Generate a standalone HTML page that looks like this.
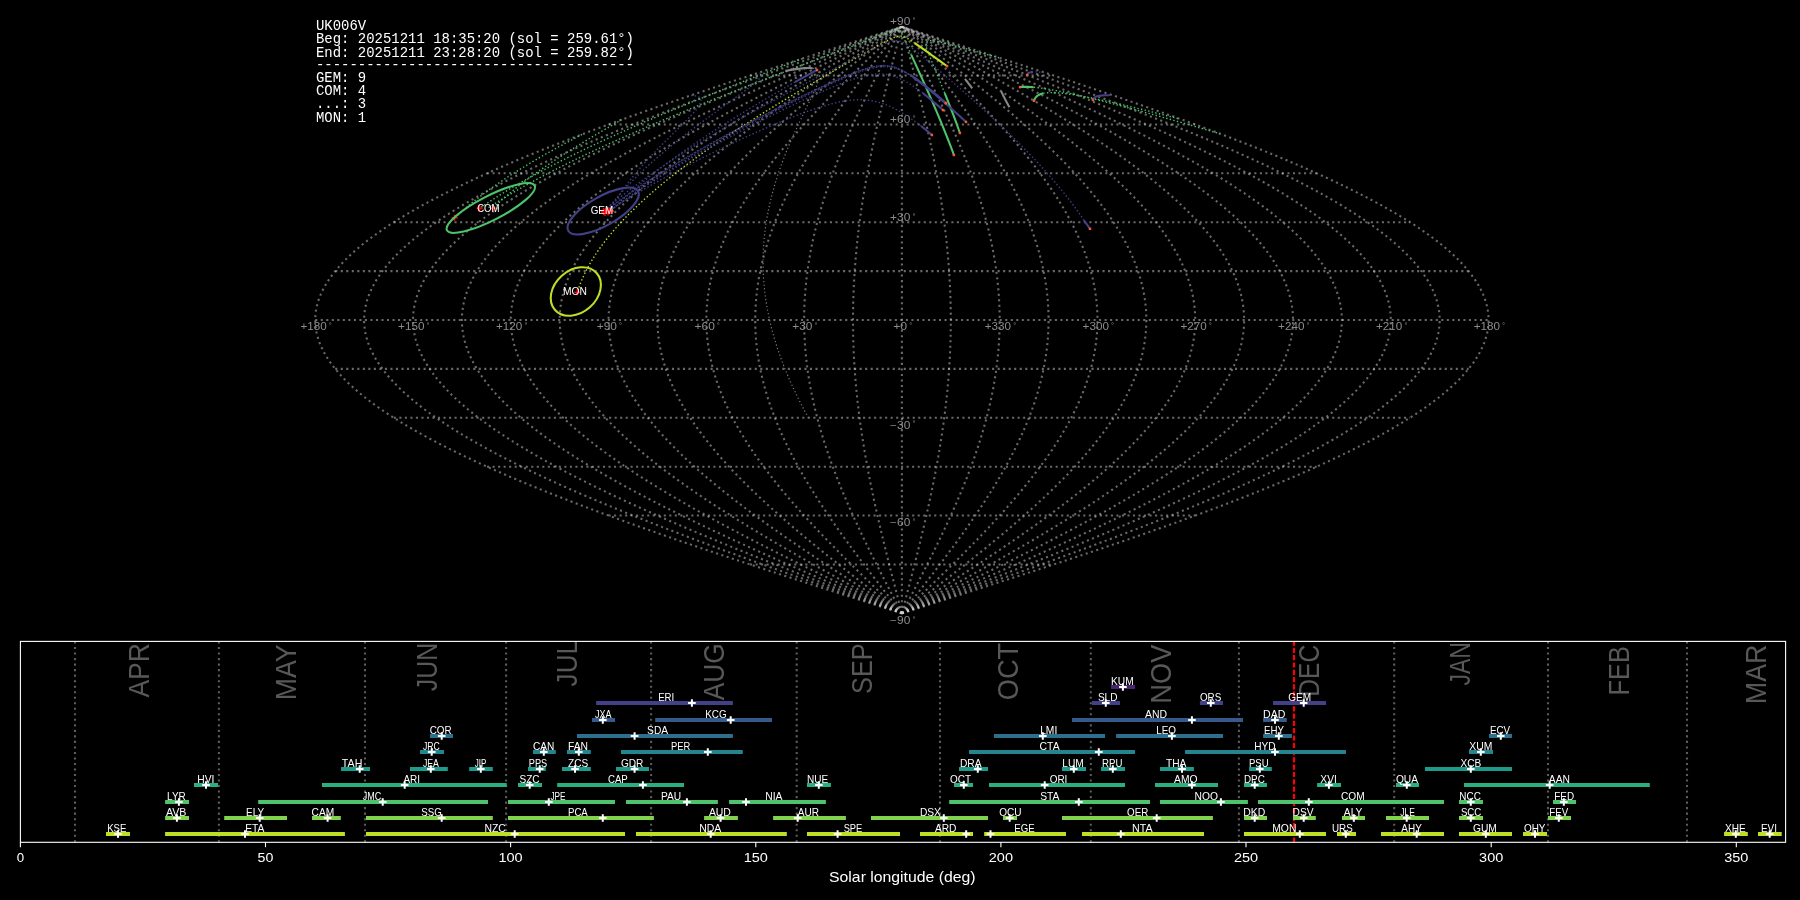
<!DOCTYPE html><html><head><meta charset="utf-8"><style>html,body{margin:0;padding:0;background:#000;}svg{display:block;will-change:transform;}</style></head><body>
<svg width="1800" height="900" viewBox="0 0 1800 900">
<g fill="none" stroke="#d2d2d2" stroke-opacity="0.5" stroke-width="2.08" stroke-dasharray="2.08 3.44">
<path d="M901.90,613.34 L912.14,610.08 L922.37,606.82 L932.60,603.56 L942.82,600.30 L953.03,597.04 L963.22,593.78 L973.40,590.52 L983.55,587.26 L993.68,584.00 L1003.77,580.74 L1013.84,577.48 L1023.88,574.23 L1033.87,570.97 L1043.83,567.71 L1053.74,564.45 L1063.61,561.19 L1073.43,557.93 L1083.19,554.67 L1092.90,551.41 L1102.55,548.15 L1112.15,544.89 L1121.67,541.63 L1131.13,538.37 L1140.52,535.11 L1149.84,531.85 L1159.08,528.60 L1168.24,525.34 L1177.33,522.08 L1186.33,518.82 L1195.24,515.56 L1204.06,512.30 L1212.79,509.04 L1221.43,505.78 L1229.96,502.52 L1238.40,499.26 L1246.74,496.00 L1254.97,492.74 L1263.09,489.48 L1271.11,486.22 L1279.01,482.97 L1286.79,479.71 L1294.46,476.45 L1302.01,473.19 L1309.44,469.93 L1316.74,466.67 L1323.92,463.41 L1330.97,460.15 L1337.88,456.89 L1344.67,453.63 L1351.32,450.37 L1357.83,447.11 L1364.21,443.85 L1370.44,440.59 L1376.53,437.33 L1382.48,434.08 L1388.27,430.82 L1393.93,427.56 L1399.43,424.30 L1404.78,421.04 L1409.97,417.78 L1415.02,414.52 L1419.90,411.26 L1424.63,408.00 L1429.20,404.74 L1433.61,401.48 L1437.85,398.22 L1441.94,394.96 L1445.85,391.70 L1449.61,388.45 L1453.19,385.19 L1456.61,381.93 L1459.86,378.67 L1462.94,375.41 L1465.85,372.15 L1468.58,368.89 L1471.15,365.63 L1473.54,362.37 L1475.75,359.11 L1477.80,355.85 L1479.66,352.59 L1481.35,349.33 L1482.86,346.07 L1484.20,342.82 L1485.36,339.56 L1486.34,336.30 L1487.14,333.04 L1487.77,329.78 L1488.22,326.52 L1488.48,323.26 L1488.57,320.00 L1488.48,316.74 L1488.22,313.48 L1487.77,310.22 L1487.14,306.96 L1486.34,303.70 L1485.36,300.44 L1484.20,297.18 L1482.86,293.93 L1481.35,290.67 L1479.66,287.41 L1477.80,284.15 L1475.75,280.89 L1473.54,277.63 L1471.15,274.37 L1468.58,271.11 L1465.85,267.85 L1462.94,264.59 L1459.86,261.33 L1456.61,258.07 L1453.19,254.81 L1449.61,251.55 L1445.85,248.30 L1441.94,245.04 L1437.85,241.78 L1433.61,238.52 L1429.20,235.26 L1424.63,232.00 L1419.90,228.74 L1415.02,225.48 L1409.97,222.22 L1404.78,218.96 L1399.43,215.70 L1393.93,212.44 L1388.27,209.18 L1382.48,205.92 L1376.53,202.67 L1370.44,199.41 L1364.21,196.15 L1357.83,192.89 L1351.32,189.63 L1344.67,186.37 L1337.88,183.11 L1330.97,179.85 L1323.92,176.59 L1316.74,173.33 L1309.44,170.07 L1302.01,166.81 L1294.46,163.55 L1286.79,160.29 L1279.01,157.03 L1271.11,153.78 L1263.09,150.52 L1254.97,147.26 L1246.74,144.00 L1238.40,140.74 L1229.96,137.48 L1221.43,134.22 L1212.79,130.96 L1204.06,127.70 L1195.24,124.44 L1186.33,121.18 L1177.33,117.92 L1168.24,114.66 L1159.08,111.40 L1149.84,108.15 L1140.52,104.89 L1131.13,101.63 L1121.67,98.37 L1112.15,95.11 L1102.55,91.85 L1092.90,88.59 L1083.19,85.33 L1073.43,82.07 L1063.61,78.81 L1053.74,75.55 L1043.83,72.29 L1033.87,69.03 L1023.88,65.77 L1013.84,62.52 L1003.77,59.26 L993.68,56.00 L983.55,52.74 L973.40,49.48 L963.22,46.22 L953.03,42.96 L942.82,39.70 L932.60,36.44 L922.37,33.18 L912.14,29.92 L901.90,26.66"/>
<path d="M901.90,613.34 L911.29,610.08 L920.67,606.82 L930.05,603.56 L939.41,600.30 L948.77,597.04 L958.11,593.78 L967.44,590.52 L976.75,587.26 L986.03,584.00 L995.29,580.74 L1004.51,577.48 L1013.71,574.23 L1022.88,570.97 L1032.00,567.71 L1041.09,564.45 L1050.13,561.19 L1059.13,557.93 L1068.08,554.67 L1076.99,551.41 L1085.83,548.15 L1094.62,544.89 L1103.36,541.63 L1112.03,538.37 L1120.64,535.11 L1129.18,531.85 L1137.65,528.60 L1146.05,525.34 L1154.37,522.08 L1162.62,518.82 L1170.79,515.56 L1178.88,512.30 L1186.88,509.04 L1194.80,505.78 L1202.63,502.52 L1210.36,499.26 L1218.00,496.00 L1225.55,492.74 L1232.99,489.48 L1240.34,486.22 L1247.58,482.97 L1254.72,479.71 L1261.75,476.45 L1268.67,473.19 L1275.48,469.93 L1282.17,466.67 L1288.75,463.41 L1295.21,460.15 L1301.55,456.89 L1307.77,453.63 L1313.87,450.37 L1319.84,447.11 L1325.68,443.85 L1331.39,440.59 L1336.98,437.33 L1342.43,434.08 L1347.74,430.82 L1352.92,427.56 L1357.97,424.30 L1362.87,421.04 L1367.64,417.78 L1372.26,414.52 L1376.74,411.26 L1381.07,408.00 L1385.26,404.74 L1389.30,401.48 L1393.19,398.22 L1396.93,394.96 L1400.53,391.70 L1403.97,388.45 L1407.25,385.19 L1410.39,381.93 L1413.36,378.67 L1416.19,375.41 L1418.85,372.15 L1421.36,368.89 L1423.71,365.63 L1425.90,362.37 L1427.93,359.11 L1429.80,355.85 L1431.51,352.59 L1433.06,349.33 L1434.45,346.07 L1435.68,342.82 L1436.74,339.56 L1437.64,336.30 L1438.37,333.04 L1438.95,329.78 L1439.36,326.52 L1439.60,323.26 L1439.68,320.00 L1439.60,316.74 L1439.36,313.48 L1438.95,310.22 L1438.37,306.96 L1437.64,303.70 L1436.74,300.44 L1435.68,297.18 L1434.45,293.93 L1433.06,290.67 L1431.51,287.41 L1429.80,284.15 L1427.93,280.89 L1425.90,277.63 L1423.71,274.37 L1421.36,271.11 L1418.85,267.85 L1416.19,264.59 L1413.36,261.33 L1410.39,258.07 L1407.25,254.81 L1403.97,251.55 L1400.53,248.30 L1396.93,245.04 L1393.19,241.78 L1389.30,238.52 L1385.26,235.26 L1381.07,232.00 L1376.74,228.74 L1372.26,225.48 L1367.64,222.22 L1362.87,218.96 L1357.97,215.70 L1352.92,212.44 L1347.74,209.18 L1342.43,205.92 L1336.98,202.67 L1331.39,199.41 L1325.68,196.15 L1319.84,192.89 L1313.87,189.63 L1307.77,186.37 L1301.55,183.11 L1295.21,179.85 L1288.75,176.59 L1282.17,173.33 L1275.48,170.07 L1268.67,166.81 L1261.75,163.55 L1254.72,160.29 L1247.58,157.03 L1240.34,153.78 L1232.99,150.52 L1225.55,147.26 L1218.00,144.00 L1210.36,140.74 L1202.63,137.48 L1194.80,134.22 L1186.88,130.96 L1178.88,127.70 L1170.79,124.44 L1162.62,121.18 L1154.37,117.92 L1146.05,114.66 L1137.65,111.40 L1129.18,108.15 L1120.64,104.89 L1112.03,101.63 L1103.36,98.37 L1094.62,95.11 L1085.83,91.85 L1076.99,88.59 L1068.08,85.33 L1059.13,82.07 L1050.13,78.81 L1041.09,75.55 L1032.00,72.29 L1022.88,69.03 L1013.71,65.77 L1004.51,62.52 L995.29,59.26 L986.03,56.00 L976.75,52.74 L967.44,49.48 L958.11,46.22 L948.77,42.96 L939.41,39.70 L930.05,36.44 L920.67,33.18 L911.29,29.92 L901.90,26.66"/>
<path d="M901.90,613.34 L910.43,610.08 L918.96,606.82 L927.49,603.56 L936.00,600.30 L944.51,597.04 L953.00,593.78 L961.48,590.52 L969.94,587.26 L978.38,584.00 L986.80,580.74 L995.19,577.48 L1003.55,574.23 L1011.88,570.97 L1020.17,567.71 L1028.44,564.45 L1036.66,561.19 L1044.84,557.93 L1052.98,554.67 L1061.07,551.41 L1069.11,548.15 L1077.10,544.89 L1085.04,541.63 L1092.93,538.37 L1100.75,535.11 L1108.52,531.85 L1116.22,528.60 L1123.85,525.34 L1131.42,522.08 L1138.92,518.82 L1146.35,515.56 L1153.70,512.30 L1160.97,509.04 L1168.17,505.78 L1175.29,502.52 L1182.32,499.26 L1189.27,496.00 L1196.12,492.74 L1202.89,489.48 L1209.57,486.22 L1216.16,482.97 L1222.64,479.71 L1229.03,476.45 L1235.33,473.19 L1241.52,469.93 L1247.60,466.67 L1253.58,463.41 L1259.46,460.15 L1265.22,456.89 L1270.87,453.63 L1276.42,450.37 L1281.84,447.11 L1287.15,443.85 L1292.35,440.59 L1297.42,437.33 L1302.38,434.08 L1307.21,430.82 L1311.92,427.56 L1316.51,424.30 L1320.96,421.04 L1325.30,417.78 L1329.50,414.52 L1333.57,411.26 L1337.51,408.00 L1341.32,404.74 L1344.99,401.48 L1348.53,398.22 L1351.93,394.96 L1355.20,391.70 L1358.32,388.45 L1361.31,385.19 L1364.16,381.93 L1366.87,378.67 L1369.43,375.41 L1371.86,372.15 L1374.14,368.89 L1376.27,365.63 L1378.26,362.37 L1380.11,359.11 L1381.81,355.85 L1383.37,352.59 L1384.78,349.33 L1386.04,346.07 L1387.15,342.82 L1388.12,339.56 L1388.93,336.30 L1389.60,333.04 L1390.12,329.78 L1390.50,326.52 L1390.72,323.26 L1390.80,320.00 L1390.72,316.74 L1390.50,313.48 L1390.12,310.22 L1389.60,306.96 L1388.93,303.70 L1388.12,300.44 L1387.15,297.18 L1386.04,293.93 L1384.78,290.67 L1383.37,287.41 L1381.81,284.15 L1380.11,280.89 L1378.26,277.63 L1376.27,274.37 L1374.14,271.11 L1371.86,267.85 L1369.43,264.59 L1366.87,261.33 L1364.16,258.07 L1361.31,254.81 L1358.32,251.55 L1355.20,248.30 L1351.93,245.04 L1348.53,241.78 L1344.99,238.52 L1341.32,235.26 L1337.51,232.00 L1333.57,228.74 L1329.50,225.48 L1325.30,222.22 L1320.96,218.96 L1316.51,215.70 L1311.92,212.44 L1307.21,209.18 L1302.38,205.92 L1297.42,202.67 L1292.35,199.41 L1287.15,196.15 L1281.84,192.89 L1276.42,189.63 L1270.87,186.37 L1265.22,183.11 L1259.46,179.85 L1253.58,176.59 L1247.60,173.33 L1241.52,170.07 L1235.33,166.81 L1229.03,163.55 L1222.64,160.29 L1216.16,157.03 L1209.57,153.78 L1202.89,150.52 L1196.12,147.26 L1189.27,144.00 L1182.32,140.74 L1175.29,137.48 L1168.17,134.22 L1160.97,130.96 L1153.70,127.70 L1146.35,124.44 L1138.92,121.18 L1131.42,117.92 L1123.85,114.66 L1116.22,111.40 L1108.52,108.15 L1100.75,104.89 L1092.93,101.63 L1085.04,98.37 L1077.10,95.11 L1069.11,91.85 L1061.07,88.59 L1052.98,85.33 L1044.84,82.07 L1036.66,78.81 L1028.44,75.55 L1020.17,72.29 L1011.88,69.03 L1003.55,65.77 L995.19,62.52 L986.80,59.26 L978.38,56.00 L969.94,52.74 L961.48,49.48 L953.00,46.22 L944.51,42.96 L936.00,39.70 L927.49,36.44 L918.96,33.18 L910.43,29.92 L901.90,26.66"/>
<path d="M901.90,613.34 L909.58,610.08 L917.26,606.82 L924.93,603.56 L932.59,600.30 L940.25,597.04 L947.89,593.78 L955.52,590.52 L963.14,587.26 L970.73,584.00 L978.31,580.74 L985.86,577.48 L993.38,574.23 L1000.88,570.97 L1008.35,567.71 L1015.78,564.45 L1023.18,561.19 L1030.55,557.93 L1037.87,554.67 L1045.15,551.41 L1052.39,548.15 L1059.58,544.89 L1066.73,541.63 L1073.82,538.37 L1080.87,535.11 L1087.85,531.85 L1094.79,528.60 L1101.66,525.34 L1108.47,522.08 L1115.22,518.82 L1121.90,515.56 L1128.52,512.30 L1135.07,509.04 L1141.54,505.78 L1147.95,502.52 L1154.28,499.26 L1160.53,496.00 L1166.70,492.74 L1172.79,489.48 L1178.80,486.22 L1184.73,482.97 L1190.57,479.71 L1196.32,476.45 L1201.98,473.19 L1207.55,469.93 L1213.03,466.67 L1218.41,463.41 L1223.70,460.15 L1228.89,456.89 L1233.98,453.63 L1238.96,450.37 L1243.85,447.11 L1248.63,443.85 L1253.30,440.59 L1257.87,437.33 L1262.33,434.08 L1266.68,430.82 L1270.92,427.56 L1275.05,424.30 L1279.06,421.04 L1282.96,417.78 L1286.74,414.52 L1290.40,411.26 L1293.95,408.00 L1297.37,404.74 L1300.68,401.48 L1303.87,398.22 L1306.93,394.96 L1309.87,391.70 L1312.68,388.45 L1315.37,385.19 L1317.93,381.93 L1320.37,378.67 L1322.68,375.41 L1324.86,372.15 L1326.91,368.89 L1328.84,365.63 L1330.63,362.37 L1332.29,359.11 L1333.82,355.85 L1335.22,352.59 L1336.49,349.33 L1337.62,346.07 L1338.63,342.82 L1339.50,339.56 L1340.23,336.30 L1340.83,333.04 L1341.30,329.78 L1341.64,326.52 L1341.84,323.26 L1341.91,320.00 L1341.84,316.74 L1341.64,313.48 L1341.30,310.22 L1340.83,306.96 L1340.23,303.70 L1339.50,300.44 L1338.63,297.18 L1337.62,293.93 L1336.49,290.67 L1335.22,287.41 L1333.82,284.15 L1332.29,280.89 L1330.63,277.63 L1328.84,274.37 L1326.91,271.11 L1324.86,267.85 L1322.68,264.59 L1320.37,261.33 L1317.93,258.07 L1315.37,254.81 L1312.68,251.55 L1309.87,248.30 L1306.93,245.04 L1303.87,241.78 L1300.68,238.52 L1297.37,235.26 L1293.95,232.00 L1290.40,228.74 L1286.74,225.48 L1282.96,222.22 L1279.06,218.96 L1275.05,215.70 L1270.92,212.44 L1266.68,209.18 L1262.33,205.92 L1257.87,202.67 L1253.30,199.41 L1248.63,196.15 L1243.85,192.89 L1238.96,189.63 L1233.98,186.37 L1228.89,183.11 L1223.70,179.85 L1218.41,176.59 L1213.03,173.33 L1207.55,170.07 L1201.98,166.81 L1196.32,163.55 L1190.57,160.29 L1184.73,157.03 L1178.80,153.78 L1172.79,150.52 L1166.70,147.26 L1160.53,144.00 L1154.28,140.74 L1147.95,137.48 L1141.54,134.22 L1135.07,130.96 L1128.52,127.70 L1121.90,124.44 L1115.22,121.18 L1108.47,117.92 L1101.66,114.66 L1094.79,111.40 L1087.85,108.15 L1080.87,104.89 L1073.82,101.63 L1066.73,98.37 L1059.58,95.11 L1052.39,91.85 L1045.15,88.59 L1037.87,85.33 L1030.55,82.07 L1023.18,78.81 L1015.78,75.55 L1008.35,72.29 L1000.88,69.03 L993.38,65.77 L985.86,62.52 L978.31,59.26 L970.73,56.00 L963.14,52.74 L955.52,49.48 L947.89,46.22 L940.25,42.96 L932.59,39.70 L924.93,36.44 L917.26,33.18 L909.58,29.92 L901.90,26.66"/>
<path d="M901.90,613.34 L908.73,610.08 L915.55,606.82 L922.37,603.56 L929.18,600.30 L935.99,597.04 L942.78,593.78 L949.57,590.52 L956.33,587.26 L963.08,584.00 L969.82,580.74 L976.53,577.48 L983.22,574.23 L989.88,570.97 L996.52,567.71 L1003.13,564.45 L1009.71,561.19 L1016.25,557.93 L1022.76,554.67 L1029.23,551.41 L1035.67,548.15 L1042.06,544.89 L1048.41,541.63 L1054.72,538.37 L1060.98,535.11 L1067.19,531.85 L1073.35,528.60 L1079.46,525.34 L1085.52,522.08 L1091.52,518.82 L1097.46,515.56 L1103.34,512.30 L1109.16,509.04 L1114.92,505.78 L1120.61,502.52 L1126.23,499.26 L1131.79,496.00 L1137.28,492.74 L1142.70,489.48 L1148.04,486.22 L1153.30,482.97 L1158.50,479.71 L1163.61,476.45 L1168.64,473.19 L1173.59,469.93 L1178.46,466.67 L1183.25,463.41 L1187.94,460.15 L1192.56,456.89 L1197.08,453.63 L1201.51,450.37 L1205.85,447.11 L1210.10,443.85 L1214.26,440.59 L1218.32,437.33 L1222.28,434.08 L1226.15,430.82 L1229.92,427.56 L1233.59,424.30 L1237.15,421.04 L1240.62,417.78 L1243.98,414.52 L1247.23,411.26 L1250.39,408.00 L1253.43,404.74 L1256.37,401.48 L1259.20,398.22 L1261.92,394.96 L1264.54,391.70 L1267.04,388.45 L1269.43,385.19 L1271.71,381.93 L1273.87,378.67 L1275.93,375.41 L1277.86,372.15 L1279.69,368.89 L1281.40,365.63 L1282.99,362.37 L1284.47,359.11 L1285.83,355.85 L1287.07,352.59 L1288.20,349.33 L1289.21,346.07 L1290.10,342.82 L1290.87,339.56 L1291.53,336.30 L1292.06,333.04 L1292.48,329.78 L1292.78,326.52 L1292.96,323.26 L1293.02,320.00 L1292.96,316.74 L1292.78,313.48 L1292.48,310.22 L1292.06,306.96 L1291.53,303.70 L1290.87,300.44 L1290.10,297.18 L1289.21,293.93 L1288.20,290.67 L1287.07,287.41 L1285.83,284.15 L1284.47,280.89 L1282.99,277.63 L1281.40,274.37 L1279.69,271.11 L1277.86,267.85 L1275.93,264.59 L1273.87,261.33 L1271.71,258.07 L1269.43,254.81 L1267.04,251.55 L1264.54,248.30 L1261.92,245.04 L1259.20,241.78 L1256.37,238.52 L1253.43,235.26 L1250.39,232.00 L1247.23,228.74 L1243.98,225.48 L1240.62,222.22 L1237.15,218.96 L1233.59,215.70 L1229.92,212.44 L1226.15,209.18 L1222.28,205.92 L1218.32,202.67 L1214.26,199.41 L1210.10,196.15 L1205.85,192.89 L1201.51,189.63 L1197.08,186.37 L1192.56,183.11 L1187.94,179.85 L1183.25,176.59 L1178.46,173.33 L1173.59,170.07 L1168.64,166.81 L1163.61,163.55 L1158.50,160.29 L1153.30,157.03 L1148.04,153.78 L1142.70,150.52 L1137.28,147.26 L1131.79,144.00 L1126.23,140.74 L1120.61,137.48 L1114.92,134.22 L1109.16,130.96 L1103.34,127.70 L1097.46,124.44 L1091.52,121.18 L1085.52,117.92 L1079.46,114.66 L1073.35,111.40 L1067.19,108.15 L1060.98,104.89 L1054.72,101.63 L1048.41,98.37 L1042.06,95.11 L1035.67,91.85 L1029.23,88.59 L1022.76,85.33 L1016.25,82.07 L1009.71,78.81 L1003.13,75.55 L996.52,72.29 L989.88,69.03 L983.22,65.77 L976.53,62.52 L969.82,59.26 L963.08,56.00 L956.33,52.74 L949.57,49.48 L942.78,46.22 L935.99,42.96 L929.18,39.70 L922.37,36.44 L915.55,33.18 L908.73,29.92 L901.90,26.66"/>
<path d="M901.90,613.34 L907.87,610.08 L913.84,606.82 L919.81,603.56 L925.77,600.30 L931.73,597.04 L937.67,593.78 L943.61,590.52 L949.53,587.26 L955.44,584.00 L961.33,580.74 L967.20,577.48 L973.05,574.23 L978.88,570.97 L984.69,567.71 L990.47,564.45 L996.23,561.19 L1001.96,557.93 L1007.65,554.67 L1013.32,551.41 L1018.95,548.15 L1024.54,544.89 L1030.10,541.63 L1035.62,538.37 L1041.10,535.11 L1046.53,531.85 L1051.92,528.60 L1057.27,525.34 L1062.57,522.08 L1067.81,518.82 L1073.01,515.56 L1078.16,512.30 L1083.25,509.04 L1088.29,505.78 L1093.27,502.52 L1098.19,499.26 L1103.06,496.00 L1107.86,492.74 L1112.60,489.48 L1117.27,486.22 L1121.88,482.97 L1126.42,479.71 L1130.89,476.45 L1135.30,473.19 L1139.63,469.93 L1143.89,466.67 L1148.08,463.41 L1152.19,460.15 L1156.22,456.89 L1160.18,453.63 L1164.06,450.37 L1167.86,447.11 L1171.58,443.85 L1175.21,440.59 L1178.77,437.33 L1182.24,434.08 L1185.62,430.82 L1188.92,427.56 L1192.12,424.30 L1195.25,421.04 L1198.28,417.78 L1201.22,414.52 L1204.07,411.26 L1206.83,408.00 L1209.49,404.74 L1212.06,401.48 L1214.54,398.22 L1216.92,394.96 L1219.21,391.70 L1221.40,388.45 L1223.49,385.19 L1225.48,381.93 L1227.38,378.67 L1229.17,375.41 L1230.87,372.15 L1232.47,368.89 L1233.96,365.63 L1235.36,362.37 L1236.65,359.11 L1237.84,355.85 L1238.93,352.59 L1239.91,349.33 L1240.80,346.07 L1241.58,342.82 L1242.25,339.56 L1242.82,336.30 L1243.29,333.04 L1243.66,329.78 L1243.92,326.52 L1244.07,323.26 L1244.13,320.00 L1244.07,316.74 L1243.92,313.48 L1243.66,310.22 L1243.29,306.96 L1242.82,303.70 L1242.25,300.44 L1241.58,297.18 L1240.80,293.93 L1239.91,290.67 L1238.93,287.41 L1237.84,284.15 L1236.65,280.89 L1235.36,277.63 L1233.96,274.37 L1232.47,271.11 L1230.87,267.85 L1229.17,264.59 L1227.38,261.33 L1225.48,258.07 L1223.49,254.81 L1221.40,251.55 L1219.21,248.30 L1216.92,245.04 L1214.54,241.78 L1212.06,238.52 L1209.49,235.26 L1206.83,232.00 L1204.07,228.74 L1201.22,225.48 L1198.28,222.22 L1195.25,218.96 L1192.12,215.70 L1188.92,212.44 L1185.62,209.18 L1182.24,205.92 L1178.77,202.67 L1175.21,199.41 L1171.58,196.15 L1167.86,192.89 L1164.06,189.63 L1160.18,186.37 L1156.22,183.11 L1152.19,179.85 L1148.08,176.59 L1143.89,173.33 L1139.63,170.07 L1135.30,166.81 L1130.89,163.55 L1126.42,160.29 L1121.88,157.03 L1117.27,153.78 L1112.60,150.52 L1107.86,147.26 L1103.06,144.00 L1098.19,140.74 L1093.27,137.48 L1088.29,134.22 L1083.25,130.96 L1078.16,127.70 L1073.01,124.44 L1067.81,121.18 L1062.57,117.92 L1057.27,114.66 L1051.92,111.40 L1046.53,108.15 L1041.10,104.89 L1035.62,101.63 L1030.10,98.37 L1024.54,95.11 L1018.95,91.85 L1013.32,88.59 L1007.65,85.33 L1001.96,82.07 L996.23,78.81 L990.47,75.55 L984.69,72.29 L978.88,69.03 L973.05,65.77 L967.20,62.52 L961.33,59.26 L955.44,56.00 L949.53,52.74 L943.61,49.48 L937.67,46.22 L931.73,42.96 L925.77,39.70 L919.81,36.44 L913.84,33.18 L907.87,29.92 L901.90,26.66"/>
<path d="M901.90,613.34 L907.02,610.08 L912.14,606.82 L917.25,603.56 L922.36,600.30 L927.47,597.04 L932.56,593.78 L937.65,590.52 L942.72,587.26 L947.79,584.00 L952.84,580.74 L957.87,577.48 L962.89,574.23 L967.89,570.97 L972.86,567.71 L977.82,564.45 L982.75,561.19 L987.66,557.93 L992.55,554.67 L997.40,551.41 L1002.23,548.15 L1007.02,544.89 L1011.79,541.63 L1016.52,538.37 L1021.21,535.11 L1025.87,531.85 L1030.49,528.60 L1035.07,525.34 L1039.61,522.08 L1044.11,518.82 L1048.57,515.56 L1052.98,512.30 L1057.34,509.04 L1061.66,505.78 L1065.93,502.52 L1070.15,499.26 L1074.32,496.00 L1078.43,492.74 L1082.50,489.48 L1086.50,486.22 L1090.45,482.97 L1094.35,479.71 L1098.18,476.45 L1101.96,473.19 L1105.67,469.93 L1109.32,466.67 L1112.91,463.41 L1116.43,460.15 L1119.89,456.89 L1123.28,453.63 L1126.61,450.37 L1129.87,447.11 L1133.05,443.85 L1136.17,440.59 L1139.21,437.33 L1142.19,434.08 L1145.09,430.82 L1147.91,427.56 L1150.66,424.30 L1153.34,421.04 L1155.94,417.78 L1158.46,414.52 L1160.90,411.26 L1163.27,408.00 L1165.55,404.74 L1167.75,401.48 L1169.88,398.22 L1171.92,394.96 L1173.88,391.70 L1175.75,388.45 L1177.55,385.19 L1179.26,381.93 L1180.88,378.67 L1182.42,375.41 L1183.87,372.15 L1185.24,368.89 L1186.52,365.63 L1187.72,362.37 L1188.83,359.11 L1189.85,355.85 L1190.78,352.59 L1191.63,349.33 L1192.38,346.07 L1193.05,342.82 L1193.63,339.56 L1194.12,336.30 L1194.52,333.04 L1194.83,329.78 L1195.06,326.52 L1195.19,323.26 L1195.24,320.00 L1195.19,316.74 L1195.06,313.48 L1194.83,310.22 L1194.52,306.96 L1194.12,303.70 L1193.63,300.44 L1193.05,297.18 L1192.38,293.93 L1191.63,290.67 L1190.78,287.41 L1189.85,284.15 L1188.83,280.89 L1187.72,277.63 L1186.52,274.37 L1185.24,271.11 L1183.87,267.85 L1182.42,264.59 L1180.88,261.33 L1179.26,258.07 L1177.55,254.81 L1175.75,251.55 L1173.88,248.30 L1171.92,245.04 L1169.88,241.78 L1167.75,238.52 L1165.55,235.26 L1163.27,232.00 L1160.90,228.74 L1158.46,225.48 L1155.94,222.22 L1153.34,218.96 L1150.66,215.70 L1147.91,212.44 L1145.09,209.18 L1142.19,205.92 L1139.21,202.67 L1136.17,199.41 L1133.05,196.15 L1129.87,192.89 L1126.61,189.63 L1123.28,186.37 L1119.89,183.11 L1116.43,179.85 L1112.91,176.59 L1109.32,173.33 L1105.67,170.07 L1101.96,166.81 L1098.18,163.55 L1094.35,160.29 L1090.45,157.03 L1086.50,153.78 L1082.50,150.52 L1078.43,147.26 L1074.32,144.00 L1070.15,140.74 L1065.93,137.48 L1061.66,134.22 L1057.34,130.96 L1052.98,127.70 L1048.57,124.44 L1044.11,121.18 L1039.61,117.92 L1035.07,114.66 L1030.49,111.40 L1025.87,108.15 L1021.21,104.89 L1016.52,101.63 L1011.79,98.37 L1007.02,95.11 L1002.23,91.85 L997.40,88.59 L992.55,85.33 L987.66,82.07 L982.75,78.81 L977.82,75.55 L972.86,72.29 L967.89,69.03 L962.89,65.77 L957.87,62.52 L952.84,59.26 L947.79,56.00 L942.72,52.74 L937.65,49.48 L932.56,46.22 L927.47,42.96 L922.36,39.70 L917.25,36.44 L912.14,33.18 L907.02,29.92 L901.90,26.66"/>
<path d="M901.90,613.34 L906.17,610.08 L910.43,606.82 L914.69,603.56 L918.95,600.30 L923.21,597.04 L927.45,593.78 L931.69,590.52 L935.92,587.26 L940.14,584.00 L944.35,580.74 L948.54,577.48 L952.72,574.23 L956.89,570.97 L961.04,567.71 L965.17,564.45 L969.28,561.19 L973.37,557.93 L977.44,554.67 L981.48,551.41 L985.51,548.15 L989.50,544.89 L993.47,541.63 L997.41,538.37 L1001.33,535.11 L1005.21,531.85 L1009.06,528.60 L1012.88,525.34 L1016.66,522.08 L1020.41,518.82 L1024.12,515.56 L1027.80,512.30 L1031.44,509.04 L1035.04,505.78 L1038.59,502.52 L1042.11,499.26 L1045.58,496.00 L1049.01,492.74 L1052.40,489.48 L1055.74,486.22 L1059.03,482.97 L1062.27,479.71 L1065.47,476.45 L1068.61,473.19 L1071.71,469.93 L1074.75,466.67 L1077.74,463.41 L1080.68,460.15 L1083.56,456.89 L1086.39,453.63 L1089.16,450.37 L1091.87,447.11 L1094.53,443.85 L1097.12,440.59 L1099.66,437.33 L1102.14,434.08 L1104.56,430.82 L1106.91,427.56 L1109.20,424.30 L1111.43,421.04 L1113.60,417.78 L1115.70,414.52 L1117.73,411.26 L1119.70,408.00 L1121.61,404.74 L1123.44,401.48 L1125.21,398.22 L1126.92,394.96 L1128.55,391.70 L1130.11,388.45 L1131.61,385.19 L1133.03,381.93 L1134.38,378.67 L1135.67,375.41 L1136.88,372.15 L1138.02,368.89 L1139.09,365.63 L1140.08,362.37 L1141.01,359.11 L1141.86,355.85 L1142.63,352.59 L1143.34,349.33 L1143.97,346.07 L1144.53,342.82 L1145.01,339.56 L1145.42,336.30 L1145.75,333.04 L1146.01,329.78 L1146.20,326.52 L1146.31,323.26 L1146.35,320.00 L1146.31,316.74 L1146.20,313.48 L1146.01,310.22 L1145.75,306.96 L1145.42,303.70 L1145.01,300.44 L1144.53,297.18 L1143.97,293.93 L1143.34,290.67 L1142.63,287.41 L1141.86,284.15 L1141.01,280.89 L1140.08,277.63 L1139.09,274.37 L1138.02,271.11 L1136.88,267.85 L1135.67,264.59 L1134.38,261.33 L1133.03,258.07 L1131.61,254.81 L1130.11,251.55 L1128.55,248.30 L1126.92,245.04 L1125.21,241.78 L1123.44,238.52 L1121.61,235.26 L1119.70,232.00 L1117.73,228.74 L1115.70,225.48 L1113.60,222.22 L1111.43,218.96 L1109.20,215.70 L1106.91,212.44 L1104.56,209.18 L1102.14,205.92 L1099.66,202.67 L1097.12,199.41 L1094.53,196.15 L1091.87,192.89 L1089.16,189.63 L1086.39,186.37 L1083.56,183.11 L1080.68,179.85 L1077.74,176.59 L1074.75,173.33 L1071.71,170.07 L1068.61,166.81 L1065.47,163.55 L1062.27,160.29 L1059.03,157.03 L1055.74,153.78 L1052.40,150.52 L1049.01,147.26 L1045.58,144.00 L1042.11,140.74 L1038.59,137.48 L1035.04,134.22 L1031.44,130.96 L1027.80,127.70 L1024.12,124.44 L1020.41,121.18 L1016.66,117.92 L1012.88,114.66 L1009.06,111.40 L1005.21,108.15 L1001.33,104.89 L997.41,101.63 L993.47,98.37 L989.50,95.11 L985.51,91.85 L981.48,88.59 L977.44,85.33 L973.37,82.07 L969.28,78.81 L965.17,75.55 L961.04,72.29 L956.89,69.03 L952.72,65.77 L948.54,62.52 L944.35,59.26 L940.14,56.00 L935.92,52.74 L931.69,49.48 L927.45,46.22 L923.21,42.96 L918.95,39.70 L914.69,36.44 L910.43,33.18 L906.17,29.92 L901.90,26.66"/>
<path d="M901.90,613.34 L905.31,610.08 L908.72,606.82 L912.13,603.56 L915.54,600.30 L918.94,597.04 L922.34,593.78 L925.73,590.52 L929.12,587.26 L932.49,584.00 L935.86,580.74 L939.21,577.48 L942.56,574.23 L945.89,570.97 L949.21,567.71 L952.51,564.45 L955.80,561.19 L959.08,557.93 L962.33,554.67 L965.57,551.41 L968.78,548.15 L971.98,544.89 L975.16,541.63 L978.31,538.37 L981.44,535.11 L984.55,531.85 L987.63,528.60 L990.68,525.34 L993.71,522.08 L996.71,518.82 L999.68,515.56 L1002.62,512.30 L1005.53,509.04 L1008.41,505.78 L1011.25,502.52 L1014.07,499.26 L1016.85,496.00 L1019.59,492.74 L1022.30,489.48 L1024.97,486.22 L1027.60,482.97 L1030.20,479.71 L1032.75,476.45 L1035.27,473.19 L1037.75,469.93 L1040.18,466.67 L1042.57,463.41 L1044.92,460.15 L1047.23,456.89 L1049.49,453.63 L1051.71,450.37 L1053.88,447.11 L1056.00,443.85 L1058.08,440.59 L1060.11,437.33 L1062.09,434.08 L1064.02,430.82 L1065.91,427.56 L1067.74,424.30 L1069.53,421.04 L1071.26,417.78 L1072.94,414.52 L1074.57,411.26 L1076.14,408.00 L1077.67,404.74 L1079.14,401.48 L1080.55,398.22 L1081.91,394.96 L1083.22,391.70 L1084.47,388.45 L1085.66,385.19 L1086.80,381.93 L1087.89,378.67 L1088.91,375.41 L1089.88,372.15 L1090.79,368.89 L1091.65,365.63 L1092.45,362.37 L1093.18,359.11 L1093.87,355.85 L1094.49,352.59 L1095.05,349.33 L1095.55,346.07 L1096.00,342.82 L1096.39,339.56 L1096.71,336.30 L1096.98,333.04 L1097.19,329.78 L1097.34,326.52 L1097.43,323.26 L1097.46,320.00 L1097.43,316.74 L1097.34,313.48 L1097.19,310.22 L1096.98,306.96 L1096.71,303.70 L1096.39,300.44 L1096.00,297.18 L1095.55,293.93 L1095.05,290.67 L1094.49,287.41 L1093.87,284.15 L1093.18,280.89 L1092.45,277.63 L1091.65,274.37 L1090.79,271.11 L1089.88,267.85 L1088.91,264.59 L1087.89,261.33 L1086.80,258.07 L1085.66,254.81 L1084.47,251.55 L1083.22,248.30 L1081.91,245.04 L1080.55,241.78 L1079.14,238.52 L1077.67,235.26 L1076.14,232.00 L1074.57,228.74 L1072.94,225.48 L1071.26,222.22 L1069.53,218.96 L1067.74,215.70 L1065.91,212.44 L1064.02,209.18 L1062.09,205.92 L1060.11,202.67 L1058.08,199.41 L1056.00,196.15 L1053.88,192.89 L1051.71,189.63 L1049.49,186.37 L1047.23,183.11 L1044.92,179.85 L1042.57,176.59 L1040.18,173.33 L1037.75,170.07 L1035.27,166.81 L1032.75,163.55 L1030.20,160.29 L1027.60,157.03 L1024.97,153.78 L1022.30,150.52 L1019.59,147.26 L1016.85,144.00 L1014.07,140.74 L1011.25,137.48 L1008.41,134.22 L1005.53,130.96 L1002.62,127.70 L999.68,124.44 L996.71,121.18 L993.71,117.92 L990.68,114.66 L987.63,111.40 L984.55,108.15 L981.44,104.89 L978.31,101.63 L975.16,98.37 L971.98,95.11 L968.78,91.85 L965.57,88.59 L962.33,85.33 L959.08,82.07 L955.80,78.81 L952.51,75.55 L949.21,72.29 L945.89,69.03 L942.56,65.77 L939.21,62.52 L935.86,59.26 L932.49,56.00 L929.12,52.74 L925.73,49.48 L922.34,46.22 L918.94,42.96 L915.54,39.70 L912.13,36.44 L908.72,33.18 L905.31,29.92 L901.90,26.66"/>
<path d="M901.90,613.34 L904.46,610.08 L907.02,606.82 L909.58,603.56 L912.13,600.30 L914.68,597.04 L917.23,593.78 L919.77,590.52 L922.31,587.26 L924.84,584.00 L927.37,580.74 L929.89,577.48 L932.39,574.23 L934.89,570.97 L937.38,567.71 L939.86,564.45 L942.33,561.19 L944.78,557.93 L947.22,554.67 L949.65,551.41 L952.06,548.15 L954.46,544.89 L956.84,541.63 L959.21,538.37 L961.56,535.11 L963.88,531.85 L966.20,528.60 L968.49,525.34 L970.76,522.08 L973.01,518.82 L975.23,515.56 L977.44,512.30 L979.62,509.04 L981.78,505.78 L983.92,502.52 L986.03,499.26 L988.11,496.00 L990.17,492.74 L992.20,489.48 L994.20,486.22 L996.18,482.97 L998.12,479.71 L1000.04,476.45 L1001.93,473.19 L1003.78,469.93 L1005.61,466.67 L1007.40,463.41 L1009.17,460.15 L1010.90,456.89 L1012.59,453.63 L1014.25,450.37 L1015.88,447.11 L1017.48,443.85 L1019.03,440.59 L1020.56,437.33 L1022.04,434.08 L1023.49,430.82 L1024.91,427.56 L1026.28,424.30 L1027.62,421.04 L1028.92,417.78 L1030.18,414.52 L1031.40,411.26 L1032.58,408.00 L1033.72,404.74 L1034.83,401.48 L1035.89,398.22 L1036.91,394.96 L1037.89,391.70 L1038.83,388.45 L1039.72,385.19 L1040.58,381.93 L1041.39,378.67 L1042.16,375.41 L1042.89,372.15 L1043.57,368.89 L1044.21,365.63 L1044.81,362.37 L1045.36,359.11 L1045.87,355.85 L1046.34,352.59 L1046.76,349.33 L1047.14,346.07 L1047.48,342.82 L1047.77,339.56 L1048.01,336.30 L1048.21,333.04 L1048.37,329.78 L1048.48,326.52 L1048.55,323.26 L1048.57,320.00 L1048.55,316.74 L1048.48,313.48 L1048.37,310.22 L1048.21,306.96 L1048.01,303.70 L1047.77,300.44 L1047.48,297.18 L1047.14,293.93 L1046.76,290.67 L1046.34,287.41 L1045.87,284.15 L1045.36,280.89 L1044.81,277.63 L1044.21,274.37 L1043.57,271.11 L1042.89,267.85 L1042.16,264.59 L1041.39,261.33 L1040.58,258.07 L1039.72,254.81 L1038.83,251.55 L1037.89,248.30 L1036.91,245.04 L1035.89,241.78 L1034.83,238.52 L1033.72,235.26 L1032.58,232.00 L1031.40,228.74 L1030.18,225.48 L1028.92,222.22 L1027.62,218.96 L1026.28,215.70 L1024.91,212.44 L1023.49,209.18 L1022.04,205.92 L1020.56,202.67 L1019.03,199.41 L1017.48,196.15 L1015.88,192.89 L1014.25,189.63 L1012.59,186.37 L1010.90,183.11 L1009.17,179.85 L1007.40,176.59 L1005.61,173.33 L1003.78,170.07 L1001.93,166.81 L1000.04,163.55 L998.12,160.29 L996.18,157.03 L994.20,153.78 L992.20,150.52 L990.17,147.26 L988.11,144.00 L986.03,140.74 L983.92,137.48 L981.78,134.22 L979.62,130.96 L977.44,127.70 L975.23,124.44 L973.01,121.18 L970.76,117.92 L968.49,114.66 L966.20,111.40 L963.88,108.15 L961.56,104.89 L959.21,101.63 L956.84,98.37 L954.46,95.11 L952.06,91.85 L949.65,88.59 L947.22,85.33 L944.78,82.07 L942.33,78.81 L939.86,75.55 L937.38,72.29 L934.89,69.03 L932.39,65.77 L929.89,62.52 L927.37,59.26 L924.84,56.00 L922.31,52.74 L919.77,49.48 L917.23,46.22 L914.68,42.96 L912.13,39.70 L909.58,36.44 L907.02,33.18 L904.46,29.92 L901.90,26.66"/>
<path d="M901.90,613.34 L903.61,610.08 L905.31,606.82 L907.02,603.56 L908.72,600.30 L910.42,597.04 L912.12,593.78 L913.82,590.52 L915.51,587.26 L917.20,584.00 L918.88,580.74 L920.56,577.48 L922.23,574.23 L923.90,570.97 L925.55,567.71 L927.21,564.45 L928.85,561.19 L930.49,557.93 L932.12,554.67 L933.73,551.41 L935.34,548.15 L936.94,544.89 L938.53,541.63 L940.11,538.37 L941.67,535.11 L943.22,531.85 L944.76,528.60 L946.29,525.34 L947.80,522.08 L949.30,518.82 L950.79,515.56 L952.26,512.30 L953.71,509.04 L955.15,505.78 L956.58,502.52 L957.98,499.26 L959.37,496.00 L960.74,492.74 L962.10,489.48 L963.43,486.22 L964.75,482.97 L966.05,479.71 L967.33,476.45 L968.59,473.19 L969.82,469.93 L971.04,466.67 L972.24,463.41 L973.41,460.15 L974.56,456.89 L975.69,453.63 L976.80,450.37 L977.89,447.11 L978.95,443.85 L979.99,440.59 L981.00,437.33 L982.00,434.08 L982.96,430.82 L983.90,427.56 L984.82,424.30 L985.71,421.04 L986.58,417.78 L987.42,414.52 L988.23,411.26 L989.02,408.00 L989.78,404.74 L990.52,401.48 L991.23,398.22 L991.91,394.96 L992.56,391.70 L993.18,388.45 L993.78,385.19 L994.35,381.93 L994.89,378.67 L995.41,375.41 L995.89,372.15 L996.35,368.89 L996.77,365.63 L997.17,362.37 L997.54,359.11 L997.88,355.85 L998.19,352.59 L998.48,349.33 L998.73,346.07 L998.95,342.82 L999.14,339.56 L999.31,336.30 L999.44,333.04 L999.54,329.78 L999.62,326.52 L999.66,323.26 L999.68,320.00 L999.66,316.74 L999.62,313.48 L999.54,310.22 L999.44,306.96 L999.31,303.70 L999.14,300.44 L998.95,297.18 L998.73,293.93 L998.48,290.67 L998.19,287.41 L997.88,284.15 L997.54,280.89 L997.17,277.63 L996.77,274.37 L996.35,271.11 L995.89,267.85 L995.41,264.59 L994.89,261.33 L994.35,258.07 L993.78,254.81 L993.18,251.55 L992.56,248.30 L991.91,245.04 L991.23,241.78 L990.52,238.52 L989.78,235.26 L989.02,232.00 L988.23,228.74 L987.42,225.48 L986.58,222.22 L985.71,218.96 L984.82,215.70 L983.90,212.44 L982.96,209.18 L982.00,205.92 L981.00,202.67 L979.99,199.41 L978.95,196.15 L977.89,192.89 L976.80,189.63 L975.69,186.37 L974.56,183.11 L973.41,179.85 L972.24,176.59 L971.04,173.33 L969.82,170.07 L968.59,166.81 L967.33,163.55 L966.05,160.29 L964.75,157.03 L963.43,153.78 L962.10,150.52 L960.74,147.26 L959.37,144.00 L957.98,140.74 L956.58,137.48 L955.15,134.22 L953.71,130.96 L952.26,127.70 L950.79,124.44 L949.30,121.18 L947.80,117.92 L946.29,114.66 L944.76,111.40 L943.22,108.15 L941.67,104.89 L940.11,101.63 L938.53,98.37 L936.94,95.11 L935.34,91.85 L933.73,88.59 L932.12,85.33 L930.49,82.07 L928.85,78.81 L927.21,75.55 L925.55,72.29 L923.90,69.03 L922.23,65.77 L920.56,62.52 L918.88,59.26 L917.20,56.00 L915.51,52.74 L913.82,49.48 L912.12,46.22 L910.42,42.96 L908.72,39.70 L907.02,36.44 L905.31,33.18 L903.61,29.92 L901.90,26.66"/>
<path d="M901.90,613.34 L902.75,610.08 L903.61,606.82 L904.46,603.56 L905.31,600.30 L906.16,597.04 L907.01,593.78 L907.86,590.52 L908.70,587.26 L909.55,584.00 L910.39,580.74 L911.23,577.48 L912.06,574.23 L912.90,570.97 L913.73,567.71 L914.55,564.45 L915.38,561.19 L916.19,557.93 L917.01,554.67 L917.82,551.41 L918.62,548.15 L919.42,544.89 L920.21,541.63 L921.00,538.37 L921.79,535.11 L922.56,531.85 L923.33,528.60 L924.10,525.34 L924.85,522.08 L925.60,518.82 L926.34,515.56 L927.08,512.30 L927.81,509.04 L928.53,505.78 L929.24,502.52 L929.94,499.26 L930.64,496.00 L931.32,492.74 L932.00,489.48 L932.67,486.22 L933.33,482.97 L933.97,479.71 L934.61,476.45 L935.24,473.19 L935.86,469.93 L936.47,466.67 L937.07,463.41 L937.66,460.15 L938.23,456.89 L938.80,453.63 L939.35,450.37 L939.89,447.11 L940.43,443.85 L940.94,440.59 L941.45,437.33 L941.95,434.08 L942.43,430.82 L942.90,427.56 L943.36,424.30 L943.81,421.04 L944.24,417.78 L944.66,414.52 L945.07,411.26 L945.46,408.00 L945.84,404.74 L946.21,401.48 L946.56,398.22 L946.90,394.96 L947.23,391.70 L947.54,388.45 L947.84,385.19 L948.13,381.93 L948.40,378.67 L948.65,375.41 L948.90,372.15 L949.12,368.89 L949.34,365.63 L949.54,362.37 L949.72,359.11 L949.89,355.85 L950.05,352.59 L950.19,349.33 L950.31,346.07 L950.43,342.82 L950.52,339.56 L950.60,336.30 L950.67,333.04 L950.72,329.78 L950.76,326.52 L950.78,323.26 L950.79,320.00 L950.78,316.74 L950.76,313.48 L950.72,310.22 L950.67,306.96 L950.60,303.70 L950.52,300.44 L950.43,297.18 L950.31,293.93 L950.19,290.67 L950.05,287.41 L949.89,284.15 L949.72,280.89 L949.54,277.63 L949.34,274.37 L949.12,271.11 L948.90,267.85 L948.65,264.59 L948.40,261.33 L948.13,258.07 L947.84,254.81 L947.54,251.55 L947.23,248.30 L946.90,245.04 L946.56,241.78 L946.21,238.52 L945.84,235.26 L945.46,232.00 L945.07,228.74 L944.66,225.48 L944.24,222.22 L943.81,218.96 L943.36,215.70 L942.90,212.44 L942.43,209.18 L941.95,205.92 L941.45,202.67 L940.94,199.41 L940.43,196.15 L939.89,192.89 L939.35,189.63 L938.80,186.37 L938.23,183.11 L937.66,179.85 L937.07,176.59 L936.47,173.33 L935.86,170.07 L935.24,166.81 L934.61,163.55 L933.97,160.29 L933.33,157.03 L932.67,153.78 L932.00,150.52 L931.32,147.26 L930.64,144.00 L929.94,140.74 L929.24,137.48 L928.53,134.22 L927.81,130.96 L927.08,127.70 L926.34,124.44 L925.60,121.18 L924.85,117.92 L924.10,114.66 L923.33,111.40 L922.56,108.15 L921.79,104.89 L921.00,101.63 L920.21,98.37 L919.42,95.11 L918.62,91.85 L917.82,88.59 L917.01,85.33 L916.19,82.07 L915.38,78.81 L914.55,75.55 L913.73,72.29 L912.90,69.03 L912.06,65.77 L911.23,62.52 L910.39,59.26 L909.55,56.00 L908.70,52.74 L907.86,49.48 L907.01,46.22 L906.16,42.96 L905.31,39.70 L904.46,36.44 L903.61,33.18 L902.75,29.92 L901.90,26.66"/>
<path d="M901.90,613.34 L901.90,610.08 L901.90,606.82 L901.90,603.56 L901.90,600.30 L901.90,597.04 L901.90,593.78 L901.90,590.52 L901.90,587.26 L901.90,584.00 L901.90,580.74 L901.90,577.48 L901.90,574.23 L901.90,570.97 L901.90,567.71 L901.90,564.45 L901.90,561.19 L901.90,557.93 L901.90,554.67 L901.90,551.41 L901.90,548.15 L901.90,544.89 L901.90,541.63 L901.90,538.37 L901.90,535.11 L901.90,531.85 L901.90,528.60 L901.90,525.34 L901.90,522.08 L901.90,518.82 L901.90,515.56 L901.90,512.30 L901.90,509.04 L901.90,505.78 L901.90,502.52 L901.90,499.26 L901.90,496.00 L901.90,492.74 L901.90,489.48 L901.90,486.22 L901.90,482.97 L901.90,479.71 L901.90,476.45 L901.90,473.19 L901.90,469.93 L901.90,466.67 L901.90,463.41 L901.90,460.15 L901.90,456.89 L901.90,453.63 L901.90,450.37 L901.90,447.11 L901.90,443.85 L901.90,440.59 L901.90,437.33 L901.90,434.08 L901.90,430.82 L901.90,427.56 L901.90,424.30 L901.90,421.04 L901.90,417.78 L901.90,414.52 L901.90,411.26 L901.90,408.00 L901.90,404.74 L901.90,401.48 L901.90,398.22 L901.90,394.96 L901.90,391.70 L901.90,388.45 L901.90,385.19 L901.90,381.93 L901.90,378.67 L901.90,375.41 L901.90,372.15 L901.90,368.89 L901.90,365.63 L901.90,362.37 L901.90,359.11 L901.90,355.85 L901.90,352.59 L901.90,349.33 L901.90,346.07 L901.90,342.82 L901.90,339.56 L901.90,336.30 L901.90,333.04 L901.90,329.78 L901.90,326.52 L901.90,323.26 L901.90,320.00 L901.90,316.74 L901.90,313.48 L901.90,310.22 L901.90,306.96 L901.90,303.70 L901.90,300.44 L901.90,297.18 L901.90,293.93 L901.90,290.67 L901.90,287.41 L901.90,284.15 L901.90,280.89 L901.90,277.63 L901.90,274.37 L901.90,271.11 L901.90,267.85 L901.90,264.59 L901.90,261.33 L901.90,258.07 L901.90,254.81 L901.90,251.55 L901.90,248.30 L901.90,245.04 L901.90,241.78 L901.90,238.52 L901.90,235.26 L901.90,232.00 L901.90,228.74 L901.90,225.48 L901.90,222.22 L901.90,218.96 L901.90,215.70 L901.90,212.44 L901.90,209.18 L901.90,205.92 L901.90,202.67 L901.90,199.41 L901.90,196.15 L901.90,192.89 L901.90,189.63 L901.90,186.37 L901.90,183.11 L901.90,179.85 L901.90,176.59 L901.90,173.33 L901.90,170.07 L901.90,166.81 L901.90,163.55 L901.90,160.29 L901.90,157.03 L901.90,153.78 L901.90,150.52 L901.90,147.26 L901.90,144.00 L901.90,140.74 L901.90,137.48 L901.90,134.22 L901.90,130.96 L901.90,127.70 L901.90,124.44 L901.90,121.18 L901.90,117.92 L901.90,114.66 L901.90,111.40 L901.90,108.15 L901.90,104.89 L901.90,101.63 L901.90,98.37 L901.90,95.11 L901.90,91.85 L901.90,88.59 L901.90,85.33 L901.90,82.07 L901.90,78.81 L901.90,75.55 L901.90,72.29 L901.90,69.03 L901.90,65.77 L901.90,62.52 L901.90,59.26 L901.90,56.00 L901.90,52.74 L901.90,49.48 L901.90,46.22 L901.90,42.96 L901.90,39.70 L901.90,36.44 L901.90,33.18 L901.90,29.92 L901.90,26.66"/>
<path d="M901.90,613.34 L901.05,610.08 L900.19,606.82 L899.34,603.56 L898.49,600.30 L897.64,597.04 L896.79,593.78 L895.94,590.52 L895.10,587.26 L894.25,584.00 L893.41,580.74 L892.57,577.48 L891.74,574.23 L890.90,570.97 L890.07,567.71 L889.25,564.45 L888.42,561.19 L887.61,557.93 L886.79,554.67 L885.98,551.41 L885.18,548.15 L884.38,544.89 L883.59,541.63 L882.80,538.37 L882.01,535.11 L881.24,531.85 L880.47,528.60 L879.70,525.34 L878.95,522.08 L878.20,518.82 L877.46,515.56 L876.72,512.30 L875.99,509.04 L875.27,505.78 L874.56,502.52 L873.86,499.26 L873.16,496.00 L872.48,492.74 L871.80,489.48 L871.13,486.22 L870.47,482.97 L869.83,479.71 L869.19,476.45 L868.56,473.19 L867.94,469.93 L867.33,466.67 L866.73,463.41 L866.14,460.15 L865.57,456.89 L865.00,453.63 L864.45,450.37 L863.91,447.11 L863.37,443.85 L862.86,440.59 L862.35,437.33 L861.85,434.08 L861.37,430.82 L860.90,427.56 L860.44,424.30 L859.99,421.04 L859.56,417.78 L859.14,414.52 L858.73,411.26 L858.34,408.00 L857.96,404.74 L857.59,401.48 L857.24,398.22 L856.90,394.96 L856.57,391.70 L856.26,388.45 L855.96,385.19 L855.67,381.93 L855.40,378.67 L855.15,375.41 L854.90,372.15 L854.68,368.89 L854.46,365.63 L854.26,362.37 L854.08,359.11 L853.91,355.85 L853.75,352.59 L853.61,349.33 L853.49,346.07 L853.37,342.82 L853.28,339.56 L853.20,336.30 L853.13,333.04 L853.08,329.78 L853.04,326.52 L853.02,323.26 L853.01,320.00 L853.02,316.74 L853.04,313.48 L853.08,310.22 L853.13,306.96 L853.20,303.70 L853.28,300.44 L853.37,297.18 L853.49,293.93 L853.61,290.67 L853.75,287.41 L853.91,284.15 L854.08,280.89 L854.26,277.63 L854.46,274.37 L854.68,271.11 L854.90,267.85 L855.15,264.59 L855.40,261.33 L855.67,258.07 L855.96,254.81 L856.26,251.55 L856.57,248.30 L856.90,245.04 L857.24,241.78 L857.59,238.52 L857.96,235.26 L858.34,232.00 L858.73,228.74 L859.14,225.48 L859.56,222.22 L859.99,218.96 L860.44,215.70 L860.90,212.44 L861.37,209.18 L861.85,205.92 L862.35,202.67 L862.86,199.41 L863.37,196.15 L863.91,192.89 L864.45,189.63 L865.00,186.37 L865.57,183.11 L866.14,179.85 L866.73,176.59 L867.33,173.33 L867.94,170.07 L868.56,166.81 L869.19,163.55 L869.83,160.29 L870.47,157.03 L871.13,153.78 L871.80,150.52 L872.48,147.26 L873.16,144.00 L873.86,140.74 L874.56,137.48 L875.27,134.22 L875.99,130.96 L876.72,127.70 L877.46,124.44 L878.20,121.18 L878.95,117.92 L879.70,114.66 L880.47,111.40 L881.24,108.15 L882.01,104.89 L882.80,101.63 L883.59,98.37 L884.38,95.11 L885.18,91.85 L885.98,88.59 L886.79,85.33 L887.61,82.07 L888.42,78.81 L889.25,75.55 L890.07,72.29 L890.90,69.03 L891.74,65.77 L892.57,62.52 L893.41,59.26 L894.25,56.00 L895.10,52.74 L895.94,49.48 L896.79,46.22 L897.64,42.96 L898.49,39.70 L899.34,36.44 L900.19,33.18 L901.05,29.92 L901.90,26.66"/>
<path d="M901.90,613.34 L900.19,610.08 L898.49,606.82 L896.78,603.56 L895.08,600.30 L893.38,597.04 L891.68,593.78 L889.98,590.52 L888.29,587.26 L886.60,584.00 L884.92,580.74 L883.24,577.48 L881.57,574.23 L879.90,570.97 L878.25,567.71 L876.59,564.45 L874.95,561.19 L873.31,557.93 L871.68,554.67 L870.07,551.41 L868.46,548.15 L866.86,544.89 L865.27,541.63 L863.69,538.37 L862.13,535.11 L860.58,531.85 L859.04,528.60 L857.51,525.34 L856.00,522.08 L854.50,518.82 L853.01,515.56 L851.54,512.30 L850.09,509.04 L848.65,505.78 L847.22,502.52 L845.82,499.26 L844.43,496.00 L843.06,492.74 L841.70,489.48 L840.37,486.22 L839.05,482.97 L837.75,479.71 L836.47,476.45 L835.21,473.19 L833.98,469.93 L832.76,466.67 L831.56,463.41 L830.39,460.15 L829.24,456.89 L828.11,453.63 L827.00,450.37 L825.91,447.11 L824.85,443.85 L823.81,440.59 L822.80,437.33 L821.80,434.08 L820.84,430.82 L819.90,427.56 L818.98,424.30 L818.09,421.04 L817.22,417.78 L816.38,414.52 L815.57,411.26 L814.78,408.00 L814.02,404.74 L813.28,401.48 L812.57,398.22 L811.89,394.96 L811.24,391.70 L810.62,388.45 L810.02,385.19 L809.45,381.93 L808.91,378.67 L808.39,375.41 L807.91,372.15 L807.45,368.89 L807.03,365.63 L806.63,362.37 L806.26,359.11 L805.92,355.85 L805.61,352.59 L805.32,349.33 L805.07,346.07 L804.85,342.82 L804.66,339.56 L804.49,336.30 L804.36,333.04 L804.26,329.78 L804.18,326.52 L804.14,323.26 L804.12,320.00 L804.14,316.74 L804.18,313.48 L804.26,310.22 L804.36,306.96 L804.49,303.70 L804.66,300.44 L804.85,297.18 L805.07,293.93 L805.32,290.67 L805.61,287.41 L805.92,284.15 L806.26,280.89 L806.63,277.63 L807.03,274.37 L807.45,271.11 L807.91,267.85 L808.39,264.59 L808.91,261.33 L809.45,258.07 L810.02,254.81 L810.62,251.55 L811.24,248.30 L811.89,245.04 L812.57,241.78 L813.28,238.52 L814.02,235.26 L814.78,232.00 L815.57,228.74 L816.38,225.48 L817.22,222.22 L818.09,218.96 L818.98,215.70 L819.90,212.44 L820.84,209.18 L821.80,205.92 L822.80,202.67 L823.81,199.41 L824.85,196.15 L825.91,192.89 L827.00,189.63 L828.11,186.37 L829.24,183.11 L830.39,179.85 L831.56,176.59 L832.76,173.33 L833.98,170.07 L835.21,166.81 L836.47,163.55 L837.75,160.29 L839.05,157.03 L840.37,153.78 L841.70,150.52 L843.06,147.26 L844.43,144.00 L845.82,140.74 L847.22,137.48 L848.65,134.22 L850.09,130.96 L851.54,127.70 L853.01,124.44 L854.50,121.18 L856.00,117.92 L857.51,114.66 L859.04,111.40 L860.58,108.15 L862.13,104.89 L863.69,101.63 L865.27,98.37 L866.86,95.11 L868.46,91.85 L870.07,88.59 L871.68,85.33 L873.31,82.07 L874.95,78.81 L876.59,75.55 L878.25,72.29 L879.90,69.03 L881.57,65.77 L883.24,62.52 L884.92,59.26 L886.60,56.00 L888.29,52.74 L889.98,49.48 L891.68,46.22 L893.38,42.96 L895.08,39.70 L896.78,36.44 L898.49,33.18 L900.19,29.92 L901.90,26.66"/>
<path d="M901.90,613.34 L899.34,610.08 L896.78,606.82 L894.22,603.56 L891.67,600.30 L889.12,597.04 L886.57,593.78 L884.03,590.52 L881.49,587.26 L878.96,584.00 L876.43,580.74 L873.91,577.48 L871.41,574.23 L868.91,570.97 L866.42,567.71 L863.94,564.45 L861.47,561.19 L859.02,557.93 L856.58,554.67 L854.15,551.41 L851.74,548.15 L849.34,544.89 L846.96,541.63 L844.59,538.37 L842.24,535.11 L839.92,531.85 L837.60,528.60 L835.31,525.34 L833.04,522.08 L830.79,518.82 L828.57,515.56 L826.36,512.30 L824.18,509.04 L822.02,505.78 L819.88,502.52 L817.77,499.26 L815.69,496.00 L813.63,492.74 L811.60,489.48 L809.60,486.22 L807.62,482.97 L805.68,479.71 L803.76,476.45 L801.87,473.19 L800.02,469.93 L798.19,466.67 L796.40,463.41 L794.63,460.15 L792.90,456.89 L791.21,453.63 L789.55,450.37 L787.92,447.11 L786.32,443.85 L784.77,440.59 L783.24,437.33 L781.76,434.08 L780.31,430.82 L778.89,427.56 L777.52,424.30 L776.18,421.04 L774.88,417.78 L773.62,414.52 L772.40,411.26 L771.22,408.00 L770.08,404.74 L768.97,401.48 L767.91,398.22 L766.89,394.96 L765.91,391.70 L764.97,388.45 L764.08,385.19 L763.22,381.93 L762.41,378.67 L761.64,375.41 L760.91,372.15 L760.23,368.89 L759.59,365.63 L758.99,362.37 L758.44,359.11 L757.93,355.85 L757.46,352.59 L757.04,349.33 L756.66,346.07 L756.32,342.82 L756.03,339.56 L755.79,336.30 L755.59,333.04 L755.43,329.78 L755.32,326.52 L755.25,323.26 L755.23,320.00 L755.25,316.74 L755.32,313.48 L755.43,310.22 L755.59,306.96 L755.79,303.70 L756.03,300.44 L756.32,297.18 L756.66,293.93 L757.04,290.67 L757.46,287.41 L757.93,284.15 L758.44,280.89 L758.99,277.63 L759.59,274.37 L760.23,271.11 L760.91,267.85 L761.64,264.59 L762.41,261.33 L763.22,258.07 L764.08,254.81 L764.97,251.55 L765.91,248.30 L766.89,245.04 L767.91,241.78 L768.97,238.52 L770.08,235.26 L771.22,232.00 L772.40,228.74 L773.62,225.48 L774.88,222.22 L776.18,218.96 L777.52,215.70 L778.89,212.44 L780.31,209.18 L781.76,205.92 L783.24,202.67 L784.77,199.41 L786.32,196.15 L787.92,192.89 L789.55,189.63 L791.21,186.37 L792.90,183.11 L794.63,179.85 L796.40,176.59 L798.19,173.33 L800.02,170.07 L801.87,166.81 L803.76,163.55 L805.68,160.29 L807.62,157.03 L809.60,153.78 L811.60,150.52 L813.63,147.26 L815.69,144.00 L817.77,140.74 L819.88,137.48 L822.02,134.22 L824.18,130.96 L826.36,127.70 L828.57,124.44 L830.79,121.18 L833.04,117.92 L835.31,114.66 L837.60,111.40 L839.92,108.15 L842.24,104.89 L844.59,101.63 L846.96,98.37 L849.34,95.11 L851.74,91.85 L854.15,88.59 L856.58,85.33 L859.02,82.07 L861.47,78.81 L863.94,75.55 L866.42,72.29 L868.91,69.03 L871.41,65.77 L873.91,62.52 L876.43,59.26 L878.96,56.00 L881.49,52.74 L884.03,49.48 L886.57,46.22 L889.12,42.96 L891.67,39.70 L894.22,36.44 L896.78,33.18 L899.34,29.92 L901.90,26.66"/>
<path d="M901.90,613.34 L898.49,610.08 L895.08,606.82 L891.67,603.56 L888.26,600.30 L884.86,597.04 L881.46,593.78 L878.07,590.52 L874.68,587.26 L871.31,584.00 L867.94,580.74 L864.59,577.48 L861.24,574.23 L857.91,570.97 L854.59,567.71 L851.29,564.45 L848.00,561.19 L844.72,557.93 L841.47,554.67 L838.23,551.41 L835.02,548.15 L831.82,544.89 L828.64,541.63 L825.49,538.37 L822.36,535.11 L819.25,531.85 L816.17,528.60 L813.12,525.34 L810.09,522.08 L807.09,518.82 L804.12,515.56 L801.18,512.30 L798.27,509.04 L795.39,505.78 L792.55,502.52 L789.73,499.26 L786.95,496.00 L784.21,492.74 L781.50,489.48 L778.83,486.22 L776.20,482.97 L773.60,479.71 L771.05,476.45 L768.53,473.19 L766.05,469.93 L763.62,466.67 L761.23,463.41 L758.88,460.15 L756.57,456.89 L754.31,453.63 L752.09,450.37 L749.92,447.11 L747.80,443.85 L745.72,440.59 L743.69,437.33 L741.71,434.08 L739.78,430.82 L737.89,427.56 L736.06,424.30 L734.27,421.04 L732.54,417.78 L730.86,414.52 L729.23,411.26 L727.66,408.00 L726.13,404.74 L724.66,401.48 L723.25,398.22 L721.89,394.96 L720.58,391.70 L719.33,388.45 L718.14,385.19 L717.00,381.93 L715.91,378.67 L714.89,375.41 L713.92,372.15 L713.01,368.89 L712.15,365.63 L711.35,362.37 L710.62,359.11 L709.93,355.85 L709.31,352.59 L708.75,349.33 L708.25,346.07 L707.80,342.82 L707.41,339.56 L707.09,336.30 L706.82,333.04 L706.61,329.78 L706.46,326.52 L706.37,323.26 L706.34,320.00 L706.37,316.74 L706.46,313.48 L706.61,310.22 L706.82,306.96 L707.09,303.70 L707.41,300.44 L707.80,297.18 L708.25,293.93 L708.75,290.67 L709.31,287.41 L709.93,284.15 L710.62,280.89 L711.35,277.63 L712.15,274.37 L713.01,271.11 L713.92,267.85 L714.89,264.59 L715.91,261.33 L717.00,258.07 L718.14,254.81 L719.33,251.55 L720.58,248.30 L721.89,245.04 L723.25,241.78 L724.66,238.52 L726.13,235.26 L727.66,232.00 L729.23,228.74 L730.86,225.48 L732.54,222.22 L734.27,218.96 L736.06,215.70 L737.89,212.44 L739.78,209.18 L741.71,205.92 L743.69,202.67 L745.72,199.41 L747.80,196.15 L749.92,192.89 L752.09,189.63 L754.31,186.37 L756.57,183.11 L758.88,179.85 L761.23,176.59 L763.62,173.33 L766.05,170.07 L768.53,166.81 L771.05,163.55 L773.60,160.29 L776.20,157.03 L778.83,153.78 L781.50,150.52 L784.21,147.26 L786.95,144.00 L789.73,140.74 L792.55,137.48 L795.39,134.22 L798.27,130.96 L801.18,127.70 L804.12,124.44 L807.09,121.18 L810.09,117.92 L813.12,114.66 L816.17,111.40 L819.25,108.15 L822.36,104.89 L825.49,101.63 L828.64,98.37 L831.82,95.11 L835.02,91.85 L838.23,88.59 L841.47,85.33 L844.72,82.07 L848.00,78.81 L851.29,75.55 L854.59,72.29 L857.91,69.03 L861.24,65.77 L864.59,62.52 L867.94,59.26 L871.31,56.00 L874.68,52.74 L878.07,49.48 L881.46,46.22 L884.86,42.96 L888.26,39.70 L891.67,36.44 L895.08,33.18 L898.49,29.92 L901.90,26.66"/>
<path d="M901.90,613.34 L897.63,610.08 L893.37,606.82 L889.11,603.56 L884.85,600.30 L880.59,597.04 L876.35,593.78 L872.11,590.52 L867.88,587.26 L863.66,584.00 L859.45,580.74 L855.26,577.48 L851.08,574.23 L846.91,570.97 L842.76,567.71 L838.63,564.45 L834.52,561.19 L830.43,557.93 L826.36,554.67 L822.32,551.41 L818.29,548.15 L814.30,544.89 L810.33,541.63 L806.39,538.37 L802.47,535.11 L798.59,531.85 L794.74,528.60 L790.92,525.34 L787.14,522.08 L783.39,518.82 L779.68,515.56 L776.00,512.30 L772.36,509.04 L768.76,505.78 L765.21,502.52 L761.69,499.26 L758.22,496.00 L754.79,492.74 L751.40,489.48 L748.06,486.22 L744.77,482.97 L741.53,479.71 L738.33,476.45 L735.19,473.19 L732.09,469.93 L729.05,466.67 L726.06,463.41 L723.12,460.15 L720.24,456.89 L717.41,453.63 L714.64,450.37 L711.93,447.11 L709.27,443.85 L706.68,440.59 L704.14,437.33 L701.66,434.08 L699.24,430.82 L696.89,427.56 L694.60,424.30 L692.37,421.04 L690.20,417.78 L688.10,414.52 L686.07,411.26 L684.10,408.00 L682.19,404.74 L680.36,401.48 L678.59,398.22 L676.88,394.96 L675.25,391.70 L673.69,388.45 L672.19,385.19 L670.77,381.93 L669.42,378.67 L668.13,375.41 L666.92,372.15 L665.78,368.89 L664.71,365.63 L663.72,362.37 L662.79,359.11 L661.94,355.85 L661.17,352.59 L660.46,349.33 L659.83,346.07 L659.27,342.82 L658.79,339.56 L658.38,336.30 L658.05,333.04 L657.79,329.78 L657.60,326.52 L657.49,323.26 L657.45,320.00 L657.49,316.74 L657.60,313.48 L657.79,310.22 L658.05,306.96 L658.38,303.70 L658.79,300.44 L659.27,297.18 L659.83,293.93 L660.46,290.67 L661.17,287.41 L661.94,284.15 L662.79,280.89 L663.72,277.63 L664.71,274.37 L665.78,271.11 L666.92,267.85 L668.13,264.59 L669.42,261.33 L670.77,258.07 L672.19,254.81 L673.69,251.55 L675.25,248.30 L676.88,245.04 L678.59,241.78 L680.36,238.52 L682.19,235.26 L684.10,232.00 L686.07,228.74 L688.10,225.48 L690.20,222.22 L692.37,218.96 L694.60,215.70 L696.89,212.44 L699.24,209.18 L701.66,205.92 L704.14,202.67 L706.68,199.41 L709.27,196.15 L711.93,192.89 L714.64,189.63 L717.41,186.37 L720.24,183.11 L723.12,179.85 L726.06,176.59 L729.05,173.33 L732.09,170.07 L735.19,166.81 L738.33,163.55 L741.53,160.29 L744.77,157.03 L748.06,153.78 L751.40,150.52 L754.79,147.26 L758.22,144.00 L761.69,140.74 L765.21,137.48 L768.76,134.22 L772.36,130.96 L776.00,127.70 L779.68,124.44 L783.39,121.18 L787.14,117.92 L790.92,114.66 L794.74,111.40 L798.59,108.15 L802.47,104.89 L806.39,101.63 L810.33,98.37 L814.30,95.11 L818.29,91.85 L822.32,88.59 L826.36,85.33 L830.43,82.07 L834.52,78.81 L838.63,75.55 L842.76,72.29 L846.91,69.03 L851.08,65.77 L855.26,62.52 L859.45,59.26 L863.66,56.00 L867.88,52.74 L872.11,49.48 L876.35,46.22 L880.59,42.96 L884.85,39.70 L889.11,36.44 L893.37,33.18 L897.63,29.92 L901.90,26.66"/>
<path d="M901.90,613.34 L896.78,610.08 L891.66,606.82 L886.55,603.56 L881.44,600.30 L876.33,597.04 L871.24,593.78 L866.15,590.52 L861.08,587.26 L856.01,584.00 L850.96,580.74 L845.93,577.48 L840.91,574.23 L835.91,570.97 L830.94,567.71 L825.98,564.45 L821.05,561.19 L816.14,557.93 L811.25,554.67 L806.40,551.41 L801.57,548.15 L796.78,544.89 L792.01,541.63 L787.28,538.37 L782.59,535.11 L777.93,531.85 L773.31,528.60 L768.73,525.34 L764.19,522.08 L759.69,518.82 L755.23,515.56 L750.82,512.30 L746.46,509.04 L742.14,505.78 L737.87,502.52 L733.65,499.26 L729.48,496.00 L725.37,492.74 L721.30,489.48 L717.30,486.22 L713.35,482.97 L709.45,479.71 L705.62,476.45 L701.84,473.19 L698.13,469.93 L694.48,466.67 L690.89,463.41 L687.37,460.15 L683.91,456.89 L680.52,453.63 L677.19,450.37 L673.93,447.11 L670.75,443.85 L667.63,440.59 L664.59,437.33 L661.61,434.08 L658.71,430.82 L655.89,427.56 L653.14,424.30 L650.46,421.04 L647.86,417.78 L645.34,414.52 L642.90,411.26 L640.53,408.00 L638.25,404.74 L636.05,401.48 L633.92,398.22 L631.88,394.96 L629.92,391.70 L628.05,388.45 L626.25,385.19 L624.54,381.93 L622.92,378.67 L621.38,375.41 L619.93,372.15 L618.56,368.89 L617.28,365.63 L616.08,362.37 L614.97,359.11 L613.95,355.85 L613.02,352.59 L612.17,349.33 L611.42,346.07 L610.75,342.82 L610.17,339.56 L609.68,336.30 L609.28,333.04 L608.97,329.78 L608.74,326.52 L608.61,323.26 L608.56,320.00 L608.61,316.74 L608.74,313.48 L608.97,310.22 L609.28,306.96 L609.68,303.70 L610.17,300.44 L610.75,297.18 L611.42,293.93 L612.17,290.67 L613.02,287.41 L613.95,284.15 L614.97,280.89 L616.08,277.63 L617.28,274.37 L618.56,271.11 L619.93,267.85 L621.38,264.59 L622.92,261.33 L624.54,258.07 L626.25,254.81 L628.05,251.55 L629.92,248.30 L631.88,245.04 L633.92,241.78 L636.05,238.52 L638.25,235.26 L640.53,232.00 L642.90,228.74 L645.34,225.48 L647.86,222.22 L650.46,218.96 L653.14,215.70 L655.89,212.44 L658.71,209.18 L661.61,205.92 L664.59,202.67 L667.63,199.41 L670.75,196.15 L673.93,192.89 L677.19,189.63 L680.52,186.37 L683.91,183.11 L687.37,179.85 L690.89,176.59 L694.48,173.33 L698.13,170.07 L701.84,166.81 L705.62,163.55 L709.45,160.29 L713.35,157.03 L717.30,153.78 L721.30,150.52 L725.37,147.26 L729.48,144.00 L733.65,140.74 L737.87,137.48 L742.14,134.22 L746.46,130.96 L750.82,127.70 L755.23,124.44 L759.69,121.18 L764.19,117.92 L768.73,114.66 L773.31,111.40 L777.93,108.15 L782.59,104.89 L787.28,101.63 L792.01,98.37 L796.78,95.11 L801.57,91.85 L806.40,88.59 L811.25,85.33 L816.14,82.07 L821.05,78.81 L825.98,75.55 L830.94,72.29 L835.91,69.03 L840.91,65.77 L845.93,62.52 L850.96,59.26 L856.01,56.00 L861.08,52.74 L866.15,49.48 L871.24,46.22 L876.33,42.96 L881.44,39.70 L886.55,36.44 L891.66,33.18 L896.78,29.92 L901.90,26.66"/>
<path d="M901.90,613.34 L895.93,610.08 L889.96,606.82 L883.99,603.56 L878.03,600.30 L872.07,597.04 L866.13,593.78 L860.19,590.52 L854.27,587.26 L848.36,584.00 L842.47,580.74 L836.60,577.48 L830.75,574.23 L824.92,570.97 L819.11,567.71 L813.33,564.45 L807.57,561.19 L801.84,557.93 L796.15,554.67 L790.48,551.41 L784.85,548.15 L779.26,544.89 L773.70,541.63 L768.18,538.37 L762.70,535.11 L757.27,531.85 L751.88,528.60 L746.53,525.34 L741.23,522.08 L735.99,518.82 L730.79,515.56 L725.64,512.30 L720.55,509.04 L715.51,505.78 L710.53,502.52 L705.61,499.26 L700.74,496.00 L695.94,492.74 L691.20,489.48 L686.53,486.22 L681.92,482.97 L677.38,479.71 L672.91,476.45 L668.50,473.19 L664.17,469.93 L659.91,466.67 L655.72,463.41 L651.61,460.15 L647.58,456.89 L643.62,453.63 L639.74,450.37 L635.94,447.11 L632.22,443.85 L628.59,440.59 L625.03,437.33 L621.56,434.08 L618.18,430.82 L614.88,427.56 L611.68,424.30 L608.55,421.04 L605.52,417.78 L602.58,414.52 L599.73,411.26 L596.97,408.00 L594.31,404.74 L591.74,401.48 L589.26,398.22 L586.88,394.96 L584.59,391.70 L582.40,388.45 L580.31,385.19 L578.32,381.93 L576.42,378.67 L574.63,375.41 L572.93,372.15 L571.33,368.89 L569.84,365.63 L568.44,362.37 L567.15,359.11 L565.96,355.85 L564.87,352.59 L563.89,349.33 L563.00,346.07 L562.22,342.82 L561.55,339.56 L560.98,336.30 L560.51,333.04 L560.14,329.78 L559.88,326.52 L559.73,323.26 L559.67,320.00 L559.73,316.74 L559.88,313.48 L560.14,310.22 L560.51,306.96 L560.98,303.70 L561.55,300.44 L562.22,297.18 L563.00,293.93 L563.89,290.67 L564.87,287.41 L565.96,284.15 L567.15,280.89 L568.44,277.63 L569.84,274.37 L571.33,271.11 L572.93,267.85 L574.63,264.59 L576.42,261.33 L578.32,258.07 L580.31,254.81 L582.40,251.55 L584.59,248.30 L586.88,245.04 L589.26,241.78 L591.74,238.52 L594.31,235.26 L596.97,232.00 L599.73,228.74 L602.58,225.48 L605.52,222.22 L608.55,218.96 L611.68,215.70 L614.88,212.44 L618.18,209.18 L621.56,205.92 L625.03,202.67 L628.59,199.41 L632.22,196.15 L635.94,192.89 L639.74,189.63 L643.62,186.37 L647.58,183.11 L651.61,179.85 L655.72,176.59 L659.91,173.33 L664.17,170.07 L668.50,166.81 L672.91,163.55 L677.38,160.29 L681.92,157.03 L686.53,153.78 L691.20,150.52 L695.94,147.26 L700.74,144.00 L705.61,140.74 L710.53,137.48 L715.51,134.22 L720.55,130.96 L725.64,127.70 L730.79,124.44 L735.99,121.18 L741.23,117.92 L746.53,114.66 L751.88,111.40 L757.27,108.15 L762.70,104.89 L768.18,101.63 L773.70,98.37 L779.26,95.11 L784.85,91.85 L790.48,88.59 L796.15,85.33 L801.84,82.07 L807.57,78.81 L813.33,75.55 L819.11,72.29 L824.92,69.03 L830.75,65.77 L836.60,62.52 L842.47,59.26 L848.36,56.00 L854.27,52.74 L860.19,49.48 L866.13,46.22 L872.07,42.96 L878.03,39.70 L883.99,36.44 L889.96,33.18 L895.93,29.92 L901.90,26.66"/>
<path d="M901.90,613.34 L895.07,610.08 L888.25,606.82 L881.43,603.56 L874.62,600.30 L867.81,597.04 L861.02,593.78 L854.23,590.52 L847.47,587.26 L840.72,584.00 L833.98,580.74 L827.27,577.48 L820.58,574.23 L813.92,570.97 L807.28,567.71 L800.67,564.45 L794.09,561.19 L787.55,557.93 L781.04,554.67 L774.57,551.41 L768.13,548.15 L761.74,544.89 L755.39,541.63 L749.08,538.37 L742.82,535.11 L736.61,531.85 L730.45,528.60 L724.34,525.34 L718.28,522.08 L712.28,518.82 L706.34,515.56 L700.46,512.30 L694.64,509.04 L688.88,505.78 L683.19,502.52 L677.57,499.26 L672.01,496.00 L666.52,492.74 L661.10,489.48 L655.76,486.22 L650.50,482.97 L645.30,479.71 L640.19,476.45 L635.16,473.19 L630.21,469.93 L625.34,466.67 L620.55,463.41 L615.86,460.15 L611.24,456.89 L606.72,453.63 L602.29,450.37 L597.95,447.11 L593.70,443.85 L589.54,440.59 L585.48,437.33 L581.52,434.08 L577.65,430.82 L573.88,427.56 L570.21,424.30 L566.65,421.04 L563.18,417.78 L559.82,414.52 L556.57,411.26 L553.41,408.00 L550.37,404.74 L547.43,401.48 L544.60,398.22 L541.88,394.96 L539.26,391.70 L536.76,388.45 L534.37,385.19 L532.09,381.93 L529.93,378.67 L527.87,375.41 L525.94,372.15 L524.11,368.89 L522.40,365.63 L520.81,362.37 L519.33,359.11 L517.97,355.85 L516.73,352.59 L515.60,349.33 L514.59,346.07 L513.70,342.82 L512.93,339.56 L512.27,336.30 L511.74,333.04 L511.32,329.78 L511.02,326.52 L510.84,323.26 L510.78,320.00 L510.84,316.74 L511.02,313.48 L511.32,310.22 L511.74,306.96 L512.27,303.70 L512.93,300.44 L513.70,297.18 L514.59,293.93 L515.60,290.67 L516.73,287.41 L517.97,284.15 L519.33,280.89 L520.81,277.63 L522.40,274.37 L524.11,271.11 L525.94,267.85 L527.87,264.59 L529.93,261.33 L532.09,258.07 L534.37,254.81 L536.76,251.55 L539.26,248.30 L541.88,245.04 L544.60,241.78 L547.43,238.52 L550.37,235.26 L553.41,232.00 L556.57,228.74 L559.82,225.48 L563.18,222.22 L566.65,218.96 L570.21,215.70 L573.88,212.44 L577.65,209.18 L581.52,205.92 L585.48,202.67 L589.54,199.41 L593.70,196.15 L597.95,192.89 L602.29,189.63 L606.72,186.37 L611.24,183.11 L615.86,179.85 L620.55,176.59 L625.34,173.33 L630.21,170.07 L635.16,166.81 L640.19,163.55 L645.30,160.29 L650.50,157.03 L655.76,153.78 L661.10,150.52 L666.52,147.26 L672.01,144.00 L677.57,140.74 L683.19,137.48 L688.88,134.22 L694.64,130.96 L700.46,127.70 L706.34,124.44 L712.28,121.18 L718.28,117.92 L724.34,114.66 L730.45,111.40 L736.61,108.15 L742.82,104.89 L749.08,101.63 L755.39,98.37 L761.74,95.11 L768.13,91.85 L774.57,88.59 L781.04,85.33 L787.55,82.07 L794.09,78.81 L800.67,75.55 L807.28,72.29 L813.92,69.03 L820.58,65.77 L827.27,62.52 L833.98,59.26 L840.72,56.00 L847.47,52.74 L854.23,49.48 L861.02,46.22 L867.81,42.96 L874.62,39.70 L881.43,36.44 L888.25,33.18 L895.07,29.92 L901.90,26.66"/>
<path d="M901.90,613.34 L894.22,610.08 L886.54,606.82 L878.87,603.56 L871.21,600.30 L863.55,597.04 L855.91,593.78 L848.28,590.52 L840.66,587.26 L833.07,584.00 L825.49,580.74 L817.94,577.48 L810.42,574.23 L802.92,570.97 L795.45,567.71 L788.02,564.45 L780.62,561.19 L773.25,557.93 L765.93,554.67 L758.65,551.41 L751.41,548.15 L744.22,544.89 L737.07,541.63 L729.98,538.37 L722.93,535.11 L715.95,531.85 L709.01,528.60 L702.14,525.34 L695.33,522.08 L688.58,518.82 L681.90,515.56 L675.28,512.30 L668.73,509.04 L662.26,505.78 L655.85,502.52 L649.52,499.26 L643.27,496.00 L637.10,492.74 L631.01,489.48 L625.00,486.22 L619.07,482.97 L613.23,479.71 L607.48,476.45 L601.82,473.19 L596.25,469.93 L590.77,466.67 L585.39,463.41 L580.10,460.15 L574.91,456.89 L569.82,453.63 L564.84,450.37 L559.95,447.11 L555.17,443.85 L550.50,440.59 L545.93,437.33 L541.47,434.08 L537.12,430.82 L532.88,427.56 L528.75,424.30 L524.74,421.04 L520.84,417.78 L517.06,414.52 L513.40,411.26 L509.85,408.00 L506.43,404.74 L503.12,401.48 L499.93,398.22 L496.87,394.96 L493.93,391.70 L491.12,388.45 L488.43,385.19 L485.87,381.93 L483.43,378.67 L481.12,375.41 L478.94,372.15 L476.89,368.89 L474.96,365.63 L473.17,362.37 L471.51,359.11 L469.98,355.85 L468.58,352.59 L467.31,349.33 L466.18,346.07 L465.17,342.82 L464.30,339.56 L463.57,336.30 L462.97,333.04 L462.50,329.78 L462.16,326.52 L461.96,323.26 L461.89,320.00 L461.96,316.74 L462.16,313.48 L462.50,310.22 L462.97,306.96 L463.57,303.70 L464.30,300.44 L465.17,297.18 L466.18,293.93 L467.31,290.67 L468.58,287.41 L469.98,284.15 L471.51,280.89 L473.17,277.63 L474.96,274.37 L476.89,271.11 L478.94,267.85 L481.12,264.59 L483.43,261.33 L485.87,258.07 L488.43,254.81 L491.12,251.55 L493.93,248.30 L496.87,245.04 L499.93,241.78 L503.12,238.52 L506.43,235.26 L509.85,232.00 L513.40,228.74 L517.06,225.48 L520.84,222.22 L524.74,218.96 L528.75,215.70 L532.88,212.44 L537.12,209.18 L541.47,205.92 L545.93,202.67 L550.50,199.41 L555.17,196.15 L559.95,192.89 L564.84,189.63 L569.82,186.37 L574.91,183.11 L580.10,179.85 L585.39,176.59 L590.77,173.33 L596.25,170.07 L601.82,166.81 L607.48,163.55 L613.23,160.29 L619.07,157.03 L625.00,153.78 L631.01,150.52 L637.10,147.26 L643.27,144.00 L649.52,140.74 L655.85,137.48 L662.26,134.22 L668.73,130.96 L675.28,127.70 L681.90,124.44 L688.58,121.18 L695.33,117.92 L702.14,114.66 L709.01,111.40 L715.95,108.15 L722.93,104.89 L729.98,101.63 L737.07,98.37 L744.22,95.11 L751.41,91.85 L758.65,88.59 L765.93,85.33 L773.25,82.07 L780.62,78.81 L788.02,75.55 L795.45,72.29 L802.92,69.03 L810.42,65.77 L817.94,62.52 L825.49,59.26 L833.07,56.00 L840.66,52.74 L848.28,49.48 L855.91,46.22 L863.55,42.96 L871.21,39.70 L878.87,36.44 L886.54,33.18 L894.22,29.92 L901.90,26.66"/>
<path d="M901.90,613.34 L893.37,610.08 L884.84,606.82 L876.31,603.56 L867.80,600.30 L859.29,597.04 L850.80,593.78 L842.32,590.52 L833.86,587.26 L825.42,584.00 L817.00,580.74 L808.61,577.48 L800.25,574.23 L791.92,570.97 L783.63,567.71 L775.36,564.45 L767.14,561.19 L758.96,557.93 L750.82,554.67 L742.73,551.41 L734.69,548.15 L726.70,544.89 L718.76,541.63 L710.87,538.37 L703.05,535.11 L695.28,531.85 L687.58,528.60 L679.95,525.34 L672.38,522.08 L664.88,518.82 L657.45,515.56 L650.10,512.30 L642.83,509.04 L635.63,505.78 L628.51,502.52 L621.48,499.26 L614.53,496.00 L607.68,492.74 L600.91,489.48 L594.23,486.22 L587.64,482.97 L581.16,479.71 L574.77,476.45 L568.47,473.19 L562.28,469.93 L556.20,466.67 L550.22,463.41 L544.34,460.15 L538.58,456.89 L532.93,453.63 L527.38,450.37 L521.96,447.11 L516.65,443.85 L511.45,440.59 L506.38,437.33 L501.42,434.08 L496.59,430.82 L491.88,427.56 L487.29,424.30 L482.84,421.04 L478.50,417.78 L474.30,414.52 L470.23,411.26 L466.29,408.00 L462.48,404.74 L458.81,401.48 L455.27,398.22 L451.87,394.96 L448.60,391.70 L445.48,388.45 L442.49,385.19 L439.64,381.93 L436.93,378.67 L434.37,375.41 L431.94,372.15 L429.66,368.89 L427.53,365.63 L425.54,362.37 L423.69,359.11 L421.99,355.85 L420.43,352.59 L419.02,349.33 L417.76,346.07 L416.65,342.82 L415.68,339.56 L414.87,336.30 L414.20,333.04 L413.68,329.78 L413.30,326.52 L413.08,323.26 L413.00,320.00 L413.08,316.74 L413.30,313.48 L413.68,310.22 L414.20,306.96 L414.87,303.70 L415.68,300.44 L416.65,297.18 L417.76,293.93 L419.02,290.67 L420.43,287.41 L421.99,284.15 L423.69,280.89 L425.54,277.63 L427.53,274.37 L429.66,271.11 L431.94,267.85 L434.37,264.59 L436.93,261.33 L439.64,258.07 L442.49,254.81 L445.48,251.55 L448.60,248.30 L451.87,245.04 L455.27,241.78 L458.81,238.52 L462.48,235.26 L466.29,232.00 L470.23,228.74 L474.30,225.48 L478.50,222.22 L482.84,218.96 L487.29,215.70 L491.88,212.44 L496.59,209.18 L501.42,205.92 L506.38,202.67 L511.45,199.41 L516.65,196.15 L521.96,192.89 L527.38,189.63 L532.93,186.37 L538.58,183.11 L544.34,179.85 L550.22,176.59 L556.20,173.33 L562.28,170.07 L568.47,166.81 L574.77,163.55 L581.16,160.29 L587.64,157.03 L594.23,153.78 L600.91,150.52 L607.68,147.26 L614.53,144.00 L621.48,140.74 L628.51,137.48 L635.63,134.22 L642.83,130.96 L650.10,127.70 L657.45,124.44 L664.88,121.18 L672.38,117.92 L679.95,114.66 L687.58,111.40 L695.28,108.15 L703.05,104.89 L710.87,101.63 L718.76,98.37 L726.70,95.11 L734.69,91.85 L742.73,88.59 L750.82,85.33 L758.96,82.07 L767.14,78.81 L775.36,75.55 L783.63,72.29 L791.92,69.03 L800.25,65.77 L808.61,62.52 L817.00,59.26 L825.42,56.00 L833.86,52.74 L842.32,49.48 L850.80,46.22 L859.29,42.96 L867.80,39.70 L876.31,36.44 L884.84,33.18 L893.37,29.92 L901.90,26.66"/>
<path d="M901.90,613.34 L892.51,610.08 L883.13,606.82 L873.75,603.56 L864.39,600.30 L855.03,597.04 L845.69,593.78 L836.36,590.52 L827.05,587.26 L817.77,584.00 L808.51,580.74 L799.29,577.48 L790.09,574.23 L780.92,570.97 L771.80,567.71 L762.71,564.45 L753.67,561.19 L744.67,557.93 L735.72,554.67 L726.81,551.41 L717.97,548.15 L709.18,544.89 L700.44,541.63 L691.77,538.37 L683.16,535.11 L674.62,531.85 L666.15,528.60 L657.75,525.34 L649.43,522.08 L641.18,518.82 L633.01,515.56 L624.92,512.30 L616.92,509.04 L609.00,505.78 L601.17,502.52 L593.44,499.26 L585.80,496.00 L578.25,492.74 L570.81,489.48 L563.46,486.22 L556.22,482.97 L549.08,479.71 L542.05,476.45 L535.13,473.19 L528.32,469.93 L521.63,466.67 L515.05,463.41 L508.59,460.15 L502.25,456.89 L496.03,453.63 L489.93,450.37 L483.96,447.11 L478.12,443.85 L472.41,440.59 L466.82,437.33 L461.37,434.08 L456.06,430.82 L450.88,427.56 L445.83,424.30 L440.93,421.04 L436.16,417.78 L431.54,414.52 L427.06,411.26 L422.73,408.00 L418.54,404.74 L414.50,401.48 L410.61,398.22 L406.87,394.96 L403.27,391.70 L399.83,388.45 L396.55,385.19 L393.41,381.93 L390.44,378.67 L387.61,375.41 L384.95,372.15 L382.44,368.89 L380.09,365.63 L377.90,362.37 L375.87,359.11 L374.00,355.85 L372.29,352.59 L370.74,349.33 L369.35,346.07 L368.12,342.82 L367.06,339.56 L366.16,336.30 L365.43,333.04 L364.85,329.78 L364.44,326.52 L364.20,323.26 L364.12,320.00 L364.20,316.74 L364.44,313.48 L364.85,310.22 L365.43,306.96 L366.16,303.70 L367.06,300.44 L368.12,297.18 L369.35,293.93 L370.74,290.67 L372.29,287.41 L374.00,284.15 L375.87,280.89 L377.90,277.63 L380.09,274.37 L382.44,271.11 L384.95,267.85 L387.61,264.59 L390.44,261.33 L393.41,258.07 L396.55,254.81 L399.83,251.55 L403.27,248.30 L406.87,245.04 L410.61,241.78 L414.50,238.52 L418.54,235.26 L422.73,232.00 L427.06,228.74 L431.54,225.48 L436.16,222.22 L440.93,218.96 L445.83,215.70 L450.88,212.44 L456.06,209.18 L461.37,205.92 L466.82,202.67 L472.41,199.41 L478.12,196.15 L483.96,192.89 L489.93,189.63 L496.03,186.37 L502.25,183.11 L508.59,179.85 L515.05,176.59 L521.63,173.33 L528.32,170.07 L535.13,166.81 L542.05,163.55 L549.08,160.29 L556.22,157.03 L563.46,153.78 L570.81,150.52 L578.25,147.26 L585.80,144.00 L593.44,140.74 L601.17,137.48 L609.00,134.22 L616.92,130.96 L624.92,127.70 L633.01,124.44 L641.18,121.18 L649.43,117.92 L657.75,114.66 L666.15,111.40 L674.62,108.15 L683.16,104.89 L691.77,101.63 L700.44,98.37 L709.18,95.11 L717.97,91.85 L726.81,88.59 L735.72,85.33 L744.67,82.07 L753.67,78.81 L762.71,75.55 L771.80,72.29 L780.92,69.03 L790.09,65.77 L799.29,62.52 L808.51,59.26 L817.77,56.00 L827.05,52.74 L836.36,49.48 L845.69,46.22 L855.03,42.96 L864.39,39.70 L873.75,36.44 L883.13,33.18 L892.51,29.92 L901.90,26.66"/>
<path d="M901.90,613.34 L891.66,610.08 L881.43,606.82 L871.20,603.56 L860.98,600.30 L850.77,597.04 L840.58,593.78 L830.40,590.52 L820.25,587.26 L810.12,584.00 L800.03,580.74 L789.96,577.48 L779.92,574.23 L769.93,570.97 L759.97,567.71 L750.06,564.45 L740.19,561.19 L730.37,557.93 L720.61,554.67 L710.90,551.41 L701.25,548.15 L691.65,544.89 L682.13,541.63 L672.67,538.37 L663.28,535.11 L653.96,531.85 L644.72,528.60 L635.56,525.34 L626.47,522.08 L617.47,518.82 L608.56,515.56 L599.74,512.30 L591.01,509.04 L582.37,505.78 L573.84,502.52 L565.40,499.26 L557.06,496.00 L548.83,492.74 L540.71,489.48 L532.69,486.22 L524.79,482.97 L517.01,479.71 L509.34,476.45 L501.79,473.19 L494.36,469.93 L487.06,466.67 L479.88,463.41 L472.83,460.15 L465.92,456.89 L459.13,453.63 L452.48,450.37 L445.97,447.11 L439.59,443.85 L433.36,440.59 L427.27,437.33 L421.32,434.08 L415.53,430.82 L409.87,427.56 L404.37,424.30 L399.02,421.04 L393.83,417.78 L388.78,414.52 L383.90,411.26 L379.17,408.00 L374.60,404.74 L370.19,401.48 L365.95,398.22 L361.86,394.96 L357.95,391.70 L354.19,388.45 L350.61,385.19 L347.19,381.93 L343.94,378.67 L340.86,375.41 L337.95,372.15 L335.22,368.89 L332.65,365.63 L330.26,362.37 L328.05,359.11 L326.00,355.85 L324.14,352.59 L322.45,349.33 L320.94,346.07 L319.60,342.82 L318.44,339.56 L317.46,336.30 L316.66,333.04 L316.03,329.78 L315.58,326.52 L315.32,323.26 L315.23,320.00 L315.32,316.74 L315.58,313.48 L316.03,310.22 L316.66,306.96 L317.46,303.70 L318.44,300.44 L319.60,297.18 L320.94,293.93 L322.45,290.67 L324.14,287.41 L326.00,284.15 L328.05,280.89 L330.26,277.63 L332.65,274.37 L335.22,271.11 L337.95,267.85 L340.86,264.59 L343.94,261.33 L347.19,258.07 L350.61,254.81 L354.19,251.55 L357.95,248.30 L361.86,245.04 L365.95,241.78 L370.19,238.52 L374.60,235.26 L379.17,232.00 L383.90,228.74 L388.78,225.48 L393.83,222.22 L399.02,218.96 L404.37,215.70 L409.87,212.44 L415.53,209.18 L421.32,205.92 L427.27,202.67 L433.36,199.41 L439.59,196.15 L445.97,192.89 L452.48,189.63 L459.13,186.37 L465.92,183.11 L472.83,179.85 L479.88,176.59 L487.06,173.33 L494.36,170.07 L501.79,166.81 L509.34,163.55 L517.01,160.29 L524.79,157.03 L532.69,153.78 L540.71,150.52 L548.83,147.26 L557.06,144.00 L565.40,140.74 L573.84,137.48 L582.37,134.22 L591.01,130.96 L599.74,127.70 L608.56,124.44 L617.47,121.18 L626.47,117.92 L635.56,114.66 L644.72,111.40 L653.96,108.15 L663.28,104.89 L672.67,101.63 L682.13,98.37 L691.65,95.11 L701.25,91.85 L710.90,88.59 L720.61,85.33 L730.37,82.07 L740.19,78.81 L750.06,75.55 L759.97,72.29 L769.93,69.03 L779.92,65.77 L789.96,62.52 L800.03,59.26 L810.12,56.00 L820.25,52.74 L830.40,49.48 L840.58,46.22 L850.77,42.96 L860.98,39.70 L871.20,36.44 L881.43,33.18 L891.66,29.92 L901.90,26.66"/>
<path d="M750.06,564.45 L1053.74,564.45"/>
<path d="M608.56,515.56 L1195.24,515.56"/>
<path d="M487.06,466.67 L1316.74,466.67"/>
<path d="M393.83,417.78 L1409.97,417.78"/>
<path d="M335.22,368.89 L1468.58,368.89"/>
<path d="M315.23,320.00 L1488.57,320.00"/>
<path d="M335.22,271.11 L1468.58,271.11"/>
<path d="M393.83,222.22 L1409.97,222.22"/>
<path d="M487.06,173.33 L1316.74,173.33"/>
<path d="M608.56,124.44 L1195.24,124.44"/>
<path d="M750.06,75.55 L1053.74,75.55"/>
</g>
<g font-family="Liberation Sans, sans-serif" font-size="10" fill="#8c8c8c">
<text x="300.4" y="330.0" textLength="26.3" lengthAdjust="spacingAndGlyphs">+180</text>
<text x="328.8" y="327.8" font-size="7.5">°</text>
<text x="398.1" y="330.0" textLength="26.3" lengthAdjust="spacingAndGlyphs">+150</text>
<text x="426.6" y="327.8" font-size="7.5">°</text>
<text x="495.9" y="330.0" textLength="26.3" lengthAdjust="spacingAndGlyphs">+120</text>
<text x="524.4" y="327.8" font-size="7.5">°</text>
<text x="596.8" y="330.0" textLength="20.2" lengthAdjust="spacingAndGlyphs">+90</text>
<text x="619.0" y="327.8" font-size="7.5">°</text>
<text x="694.6" y="330.0" textLength="20.2" lengthAdjust="spacingAndGlyphs">+60</text>
<text x="716.8" y="327.8" font-size="7.5">°</text>
<text x="792.3" y="330.0" textLength="20.2" lengthAdjust="spacingAndGlyphs">+30</text>
<text x="814.6" y="327.8" font-size="7.5">°</text>
<text x="893.2" y="330.0" textLength="14.0" lengthAdjust="spacingAndGlyphs">+0</text>
<text x="909.3" y="327.8" font-size="7.5">°</text>
<text x="984.8" y="330.0" textLength="26.3" lengthAdjust="spacingAndGlyphs">+330</text>
<text x="1013.2" y="327.8" font-size="7.5">°</text>
<text x="1082.6" y="330.0" textLength="26.3" lengthAdjust="spacingAndGlyphs">+300</text>
<text x="1111.0" y="327.8" font-size="7.5">°</text>
<text x="1180.4" y="330.0" textLength="26.3" lengthAdjust="spacingAndGlyphs">+270</text>
<text x="1208.8" y="327.8" font-size="7.5">°</text>
<text x="1278.1" y="330.0" textLength="26.3" lengthAdjust="spacingAndGlyphs">+240</text>
<text x="1306.6" y="327.8" font-size="7.5">°</text>
<text x="1375.9" y="330.0" textLength="26.3" lengthAdjust="spacingAndGlyphs">+210</text>
<text x="1404.4" y="327.8" font-size="7.5">°</text>
<text x="1473.7" y="330.0" textLength="26.3" lengthAdjust="spacingAndGlyphs">+180</text>
<text x="1502.1" y="327.8" font-size="7.5">°</text>
<text x="890.1" y="25.2" textLength="20.2" lengthAdjust="spacingAndGlyphs">+90</text>
<text x="912.4" y="23.0" font-size="7.5">°</text>
<text x="890.1" y="122.9" textLength="20.2" lengthAdjust="spacingAndGlyphs">+60</text>
<text x="912.4" y="120.7" font-size="7.5">°</text>
<text x="890.1" y="220.7" textLength="20.2" lengthAdjust="spacingAndGlyphs">+30</text>
<text x="912.4" y="218.5" font-size="7.5">°</text>
<text x="890.1" y="428.6" textLength="20.2" lengthAdjust="spacingAndGlyphs">−30</text>
<text x="912.4" y="426.4" font-size="7.5">°</text>
<text x="890.1" y="526.4" textLength="20.2" lengthAdjust="spacingAndGlyphs">−60</text>
<text x="912.4" y="524.2" font-size="7.5">°</text>
<text x="890.1" y="624.1" textLength="20.2" lengthAdjust="spacingAndGlyphs">−90</text>
<text x="912.4" y="621.9" font-size="7.5">°</text>
</g>
<path d="M914.80,43.20 L913.82,42.53 L912.85,41.88 L911.89,41.24 L910.95,40.62 L910.02,40.02 L909.10,39.45 L908.20,38.90 L907.31,38.39 L906.45,37.91 L905.59,37.47 L904.76,37.08 L903.93,36.74 L903.12,36.45 L902.32,36.23 L901.52,36.07 L900.71,35.98 L899.90,35.96 L899.07,36.01 L898.22,36.14 L897.34,36.33 L896.44,36.58 L895.50,36.89 L894.53,37.26 L893.52,37.68 L892.48,38.14 L891.41,38.63 L890.31,39.16 L889.19,39.72 L888.04,40.31 L886.86,40.92 L885.67,41.55 L884.46,42.19 L883.23,42.85 L881.98,43.53 L880.72,44.22 L879.45,44.91 L878.17,45.62 L876.87,46.34 L875.57,47.06 L874.26,47.79 L872.94,48.53 L871.61,49.27 L870.28,50.01 L868.95,50.76 L867.60,51.52 L866.26,52.28 L864.91,53.04 L863.55,53.81 L862.19,54.58 L860.83,55.35 L859.47,56.12 L858.10,56.90 L856.73,57.67 L855.36,58.45 L853.99,59.23 L852.62,60.02 L851.24,60.80 L849.87,61.59 L848.49,62.38 L847.11,63.16 L845.73,63.95 L844.35,64.75 L842.97,65.54 L841.59,66.33 L840.21,67.12 L838.83,67.92 L837.44,68.72 L836.06,69.51 L834.68,70.31 L833.30,71.11 L831.92,71.91 L830.54,72.70 L829.16,73.50 L827.78,74.30 L826.40,75.11 L825.02,75.91 L823.64,76.71 L822.27,77.51 L820.89,78.31 L819.51,79.12 L818.14,79.92 L816.77,80.72 L815.39,81.53 L814.02,82.33 L812.65,83.14 L811.28,83.94 L809.92,84.75 L808.55,85.56 L807.18,86.36 L805.82,87.17 L804.46,87.98 L803.10,88.78 L801.74,89.59 L800.38,90.40 L799.02,91.20 L797.67,92.01 L796.31,92.82 L794.96,93.63 L793.61,94.44 L792.26,95.25 L790.92,96.05 L789.57,96.86 L788.23,97.67 L786.89,98.48 L785.55,99.29 L784.21,100.10 L782.88,100.91 L781.54,101.72 L780.21,102.53 L778.88,103.34 L777.56,104.15 L776.23,104.96 L774.91,105.77 L773.59,106.58 L772.27,107.39 L770.96,108.20 L769.64,109.02 L768.33,109.83 L767.02,110.64 L765.72,111.45 L764.41,112.26 L763.11,113.07 L761.81,113.88 L760.52,114.70 L759.22,115.51 L757.93,116.32 L756.64,117.13 L755.36,117.94 L754.07,118.76 L752.79,119.57 L751.52,120.38 L750.24,121.19 L748.97,122.00 L747.70,122.82 L746.43,123.63 L745.17,124.44 L743.91,125.25 L742.65,126.07 L741.39,126.88 L740.14,127.69 L738.89,128.51 L737.65,129.32 L736.40,130.13 L735.16,130.94 L733.93,131.76 L732.69,132.57 L731.46,133.38 L730.23,134.20 L729.01,135.01 L727.79,135.82 L726.57,136.64 L725.36,137.45 L724.14,138.26 L722.94,139.08 L721.73,139.89 L720.53,140.70 L719.33,141.52 L718.14,142.33 L716.95,143.14 L715.76,143.96 L714.57,144.77 L713.39,145.59 L712.22,146.40 L711.04,147.21 L709.87,148.03 L708.71,148.84 L707.54,149.65 L706.38,150.47 L705.23,151.28 L704.08,152.10 L702.93,152.91 L701.78,153.72 L700.64,154.54 L699.51,155.35 L698.37,156.17 L697.24,156.98 L696.12,157.80 L695.00,158.61 L693.88,159.42 L692.77,160.24 L691.66,161.05 L690.55,161.87 L689.45,162.68 L688.35,163.50 L687.26,164.31 L686.17,165.12 L685.08,165.94 L684.00,166.75 L682.92,167.57 L681.85,168.38 L680.78,169.20 L679.72,170.01 L678.66,170.83 L677.60,171.64 L676.55,172.45 L675.50,173.27 L674.46,174.08 L673.42,174.90 L672.38,175.71 L671.35,176.53 L670.33,177.34 L669.30,178.16 L668.29,178.97 L667.27,179.79 L666.27,180.60 L665.26,181.42 L664.26,182.23 L663.27,183.05 L662.28,183.86 L661.29,184.68 L660.31,185.49 L659.33,186.31 L658.36,187.12 L657.39,187.93 L656.43,188.75 L655.47,189.56 L654.52,190.38 L653.57,191.19 L652.62,192.01 L651.68,192.82 L650.75,193.64 L649.82,194.45 L648.89,195.27 L647.97,196.08 L647.06,196.90 L646.15,197.71 L645.24,198.53 L644.34,199.34 L643.45,200.16 L642.55,200.97 L641.67,201.79 L640.79,202.60 L639.91,203.42 L639.04,204.23 L638.17,205.05 L637.31,205.87 L636.45,206.68 L635.60,207.50 L634.76,208.31 L633.92,209.13 L633.08,209.94 L632.25,210.76 L631.42,211.57 L630.60,212.39 L629.79,213.20 L628.98,214.02 L628.17,214.83 L627.37,215.65 L626.58,216.46 L625.79,217.28 L625.00,218.09 L624.23,218.91 L623.45,219.72 L622.68,220.54 L621.92,221.35 L621.16,222.17 L620.41,222.98 L619.66,223.80 L618.92,224.62 L618.19,225.43 L617.45,226.25 L616.73,227.06 L616.01,227.88 L615.29,228.69 L614.59,229.51 L613.88,230.32 L613.18,231.14 L612.49,231.95 L611.80,232.77 L611.12,233.58 L610.45,234.40 L609.78,235.21 L609.11,236.03 L608.45,236.85 L607.80,237.66 L607.15,238.48 L606.51,239.29 L605.87,240.11 L605.24,240.92 L604.61,241.74 L603.99,242.55 L603.38,243.37 L602.77,244.18 L602.17,245.00 L601.57,245.81 L600.98,246.63 L600.39,247.45 L599.81,248.26 L599.24,249.08 L598.67,249.89 L598.11,250.71 L597.55,251.52 L597.00,252.34 L596.46,253.15 L595.92,253.97 L595.38,254.78 L594.86,255.60 L594.33,256.42 L593.82,257.23 L593.31,258.05 L592.80,258.86 L592.31,259.68 L591.81,260.49 L591.33,261.31 L590.85,262.12 L590.37,262.94 L589.90,263.76 L589.44,264.57 L588.98,265.39 L588.53,266.20 L588.09,267.02 L587.65,267.83 L587.21,268.65 L586.79,269.46 L586.37,270.28 L585.95,271.10 L585.54,271.91 L585.14,272.73 L584.74,273.54 L584.35,274.36 L583.97,275.17 L583.59,275.99 L583.22,276.80 L582.85,277.62 L582.49,278.44 L582.14,279.25 L581.79,280.07 L581.45,280.88 L581.11,281.70 L580.78,282.51 L580.46,283.33 L580.14,284.14 L579.83,284.96 L579.52,285.78 L579.22,286.59 L578.93,287.41 L578.64,288.22 L578.36,289.04 L578.09,289.85 L577.82,290.67 L577.56,291.48 L577.30,292.30" fill="none" stroke="#bddf26" stroke-width="1.39" stroke-dasharray="1.39 2.29"/>
<path d="M911.30,54.90 L910.94,54.09 L910.58,53.28 L910.22,52.46 L909.86,51.65 L909.50,50.84 L909.14,50.03 L908.78,49.22 L908.42,48.41 L908.06,47.60 L907.70,46.79 L907.34,45.99 L906.98,45.18 L906.62,44.37 L906.26,43.57 L905.90,42.77 L905.54,41.97 L905.18,41.17 L904.83,40.37 L904.47,39.57 L904.11,38.78 L903.76,38.00 L903.40,37.21 L903.05,36.43 L902.69,35.66 L902.34,34.90 L901.99,34.15 L901.63,33.42 L901.28,32.71 L900.92,32.03 L900.56,31.39 L900.17,30.82 L899.75,30.34 L899.25,29.99 L898.60,29.82 L897.73,29.86 L896.61,30.10 L895.23,30.50 L893.66,31.02 L891.93,31.63 L890.09,32.28 L888.18,32.98 L886.20,33.70 L884.18,34.44 L882.14,35.19 L880.06,35.96 L877.97,36.73 L875.86,37.51 L873.74,38.29 L871.61,39.08 L869.47,39.88 L867.33,40.67 L865.18,41.47 L863.03,42.27 L860.87,43.07 L858.71,43.87 L856.54,44.68 L854.38,45.49 L852.21,46.29 L850.04,47.10 L847.88,47.91 L845.71,48.72 L843.54,49.53 L841.37,50.34 L839.19,51.15 L837.02,51.96 L834.85,52.77 L832.68,53.58 L830.51,54.40 L828.34,55.21 L826.18,56.02 L824.01,56.83 L821.84,57.65 L819.68,58.46 L817.51,59.28 L815.35,60.09 L813.18,60.90 L811.02,61.72 L808.86,62.53 L806.70,63.35 L804.55,64.16 L802.39,64.98 L800.24,65.79 L798.09,66.61 L795.94,67.42 L793.79,68.24 L791.64,69.05 L789.49,69.87 L787.35,70.69 L785.21,71.50 L783.07,72.32 L780.93,73.13 L778.80,73.95 L776.67,74.77 L774.54,75.58 L772.41,76.40 L770.28,77.21 L768.16,78.03 L766.04,78.85 L763.92,79.66 L761.80,80.48 L759.69,81.30 L757.58,82.11 L755.47,82.93 L753.36,83.75 L751.26,84.56 L749.16,85.38 L747.06,86.20 L744.97,87.01 L742.88,87.83 L740.79,88.65 L738.71,89.46 L736.62,90.28 L734.54,91.10 L732.47,91.91 L730.40,92.73 L728.33,93.55 L726.26,94.36 L724.20,95.18 L722.14,96.00 L720.08,96.82 L718.03,97.63 L715.98,98.45 L713.93,99.27 L711.89,100.08 L709.85,100.90 L707.82,101.72 L705.78,102.54 L703.76,103.35 L701.73,104.17 L699.71,104.99 L697.70,105.80 L695.68,106.62 L693.68,107.44 L691.67,108.26 L689.67,109.07 L687.67,109.89 L685.68,110.71 L683.69,111.52 L681.71,112.34 L679.73,113.16 L677.75,113.98 L675.78,114.79 L673.81,115.61 L671.85,116.43 L669.89,117.25 L667.94,118.06 L665.99,118.88 L664.04,119.70 L662.10,120.52 L660.17,121.33 L658.24,122.15 L656.31,122.97 L654.39,123.79 L652.47,124.60 L650.56,125.42 L648.65,126.24 L646.75,127.05 L644.85,127.87 L642.96,128.69 L641.07,129.51 L639.19,130.32 L637.31,131.14 L635.43,131.96 L633.57,132.78 L631.70,133.59 L629.85,134.41 L627.99,135.23 L626.15,136.05 L624.30,136.86 L622.47,137.68 L620.64,138.50 L618.81,139.32 L616.99,140.13 L615.17,140.95 L613.37,141.77 L611.56,142.59 L609.76,143.40 L607.97,144.22 L606.18,145.04 L604.40,145.86 L602.63,146.68 L600.85,147.49 L599.09,148.31 L597.33,149.13 L595.58,149.95 L593.83,150.76 L592.09,151.58 L590.36,152.40 L588.63,153.22 L586.90,154.03 L585.19,154.85 L583.48,155.67 L581.77,156.49 L580.07,157.30 L578.38,158.12 L576.69,158.94 L575.01,159.76 L573.34,160.57 L571.67,161.39 L570.01,162.21 L568.35,163.03 L566.71,163.84 L565.06,164.66 L563.43,165.48 L561.80,166.30 L560.18,167.12 L558.56,167.93 L556.95,168.75 L555.35,169.57 L553.75,170.39 L552.16,171.20 L550.58,172.02 L549.00,172.84 L547.43,173.66 L545.87,174.47 L544.31,175.29 L542.76,176.11 L541.22,176.93 L539.69,177.75 L538.16,178.56 L536.64,179.38 L535.12,180.20 L533.62,181.02 L532.12,181.83 L530.62,182.65 L529.14,183.47 L527.66,184.29 L526.19,185.10 L524.72,185.92 L523.26,186.74 L521.81,187.56 L520.37,188.37 L518.94,189.19 L517.51,190.01 L516.09,190.83 L514.67,191.65 L513.27,192.46 L511.87,193.28 L510.48,194.10 L509.09,194.92 L507.72,195.73 L506.35,196.55 L504.99,197.37 L503.64,198.19 L502.29,199.01 L500.95,199.82 L499.62,200.64 L498.30,201.46 L496.98,202.28 L495.68,203.09 L494.38,203.91 L493.09,204.73 L491.80,205.55 L490.53,206.36 L489.26,207.18 L488.00,208.00" fill="none" stroke="#4ec36b" stroke-width="1.39" stroke-dasharray="1.39 2.29"/>
<path d="M944.70,93.10 L944.38,92.30 L944.07,91.51 L943.75,90.71 L943.43,89.92 L943.11,89.12 L942.79,88.33 L942.47,87.54 L942.15,86.74 L941.83,85.95 L941.51,85.16 L941.19,84.37 L940.87,83.58 L940.54,82.79 L940.22,82.00 L939.90,81.21 L939.58,80.43 L939.26,79.64 L938.93,78.85 L938.61,78.07 L938.29,77.29 L937.97,76.50 L937.64,75.72 L937.32,74.94 L937.00,74.16 L936.68,73.38 L936.36,72.61 L936.04,71.83 L935.72,71.06 L935.40,70.29 L935.08,69.51 L934.76,68.74 L934.44,67.98 L934.12,67.21 L933.81,66.45 L933.49,65.69 L933.18,64.93 L932.86,64.17 L932.55,63.41 L932.24,62.66 L931.94,61.91 L931.63,61.16 L931.33,60.42 L931.03,59.68 L930.73,58.94 L930.43,58.21 L930.14,57.48 L929.85,56.76 L929.57,56.04 L929.29,55.32 L929.01,54.61 L928.74,53.91 L928.48,53.21 L928.22,52.52 L927.97,51.84 L927.73,51.16 L927.49,50.50 L927.27,49.84 L927.05,49.20 L926.85,48.56 L926.67,47.94 L926.49,47.33 L926.34,46.74 L926.20,46.16 L926.09,45.60 L926.00,45.05 L925.93,44.53 L925.90,44.03 L925.90,43.56 L925.93,43.11 L926.01,42.69 L926.14,42.30 L926.32,41.95 L926.55,41.63 L926.85,41.35 L927.22,41.11 L927.66,40.91 L928.18,40.76 L928.79,40.65 L929.48,40.59 L930.27,40.58 L931.16,40.62 L932.15,40.70 L933.23,40.83 L934.42,41.00 L935.70,41.22 L937.09,41.48 L938.56,41.78 L940.12,42.11 L941.77,42.48 L943.51,42.89 L945.31,43.32 L947.19,43.78 L949.14,44.27 L951.15,44.78 L953.22,45.31 L955.34,45.86 L957.51,46.43 L959.73,47.02 L961.99,47.62 L964.29,48.24 L966.63,48.87 L969.00,49.51 L971.40,50.16 L973.83,50.82 L976.28,51.49 L978.76,52.17 L981.26,52.85 L983.78,53.55 L986.32,54.25 L988.88,54.95 L991.45,55.67 L994.04,56.38 L996.64,57.10 L999.26,57.83 M802.43,58.56 L800.52,59.30 L798.60,60.04 L796.67,60.78 L794.73,61.52 L792.78,62.27 L790.83,63.02 L788.87,63.78 L786.91,64.53 L784.94,65.29 L782.96,66.05 L780.98,66.81 L779.00,67.58 L777.02,68.35 L775.03,69.12 L773.04,69.89 L771.04,70.66 L769.04,71.43 L767.05,72.21 L765.05,72.98 L763.04,73.76 L761.04,74.54 L759.04,75.32 L757.03,76.10 L755.03,76.88 L753.02,77.66 L751.02,78.45 L749.01,79.23 L747.01,80.02 L745.00,80.81 L743.00,81.59 L741.00,82.38 L738.99,83.17 L736.99,83.96 L734.99,84.75 L732.99,85.54 L730.99,86.33 L729.00,87.13 L727.00,87.92 L725.01,88.71 L723.02,89.51 L721.03,90.30 L719.04,91.10 L717.05,91.89 L715.07,92.69 L713.09,93.48 L711.11,94.28 L709.13,95.08 L707.15,95.88 L705.18,96.67 L703.21,97.47 L701.24,98.27 L699.28,99.07 L697.32,99.87 L695.36,100.67 L693.40,101.47 L691.45,102.27 L689.50,103.07 L687.56,103.87 L685.61,104.67 L683.67,105.47 L681.74,106.28 L679.80,107.08 L677.87,107.88 L675.95,108.68 L674.02,109.49 L672.11,110.29 L670.19,111.09 L668.28,111.89 L666.37,112.70 L664.47,113.50 L662.57,114.31 L660.67,115.11 L658.78,115.92 L656.89,116.72 L655.01,117.52 L653.13,118.33 L651.25,119.13 L649.38,119.94 L647.51,120.75 L645.65,121.55 L643.79,122.36 L641.94,123.16 L640.09,123.97 L638.25,124.77 L636.40,125.58 L634.57,126.39 L632.74,127.19 L630.91,128.00 L629.09,128.81 L627.27,129.61 L625.46,130.42 L623.66,131.23 L621.85,132.04 L620.06,132.84 L618.27,133.65 L616.48,134.46 L614.70,135.27 L612.92,136.07 L611.15,136.88 L609.38,137.69 L607.62,138.50 L605.87,139.31 L604.12,140.11 L602.37,140.92 L600.63,141.73 L598.90,142.54 L597.17,143.35 L595.45,144.16 L593.73,144.97 L592.02,145.77 L590.31,146.58 L588.61,147.39 L586.92,148.20 L585.23,149.01 L583.54,149.82 L581.87,150.63 L580.19,151.44 L578.53,152.25 L576.87,153.06 L575.22,153.87 L573.57,154.68 L571.93,155.49 L570.29,156.29 L568.66,157.10 L567.04,157.91 L565.42,158.72 L563.81,159.53 L562.20,160.34 L560.61,161.15 L559.01,161.96 L557.43,162.77 L555.85,163.58 L554.28,164.39 L552.71,165.20 L551.15,166.02 L549.60,166.83 L548.05,167.64 L546.51,168.45 L544.98,169.26 L543.45,170.07 L541.93,170.88 L540.41,171.69 L538.91,172.50 L537.41,173.31 L535.91,174.12 L534.43,174.93 L532.95,175.74 L531.47,176.55 L530.01,177.36 L528.55,178.17 L527.10,178.99 L525.65,179.80 L524.21,180.61 L522.78,181.42 L521.36,182.23 L519.94,183.04 L518.53,183.85 L517.13,184.66 L515.73,185.47 L514.35,186.29 L512.96,187.10 L511.59,187.91 L510.23,188.72 L508.87,189.53 L507.51,190.34 L506.17,191.15 L504.83,191.97 L503.50,192.78 L502.18,193.59 L500.87,194.40 L499.56,195.21 L498.26,196.02 L496.97,196.84 L495.69,197.65 L494.41,198.46 L493.14,199.27 L491.88,200.08 L490.63,200.89 L489.38,201.71 L488.15,202.52 L486.92,203.33 L485.69,204.14 L484.48,204.95 L483.27,205.76 L482.07,206.58 L480.88,207.39 L479.70,208.20" fill="none" stroke="#4ec36b" stroke-width="1.39" stroke-dasharray="1.39 2.29"/>
<path d="M1033.75,87.30 L1034.74,87.38 L1035.75,87.48 L1036.78,87.58 L1037.83,87.69 L1038.90,87.82 L1040.00,87.95 L1041.12,88.10 L1042.26,88.25 L1043.42,88.42 L1044.61,88.59 L1045.82,88.78 L1047.04,88.97 L1048.29,89.17 L1049.57,89.39 L1050.86,89.61 L1052.17,89.84 L1053.51,90.09 L1054.86,90.34 L1056.24,90.60 L1057.64,90.87 L1059.05,91.15 L1060.49,91.43 L1061.95,91.73 L1063.43,92.03 L1064.92,92.34 L1066.44,92.66 L1067.97,92.99 L1069.53,93.33 L1071.10,93.67 L1072.69,94.03 L1074.30,94.39 L1075.92,94.76 L1077.57,95.13 L1079.23,95.51 L1080.90,95.90 L1082.60,96.30 L1084.31,96.70 L1086.03,97.11 L1087.78,97.53 L1089.53,97.95 L1091.31,98.38 L1093.09,98.82 L1094.90,99.26 L1096.71,99.71 L1098.54,100.17 L1100.39,100.63 L1102.25,101.10 L1104.12,101.57 L1106.00,102.05 L1107.90,102.53 L1109.81,103.02 L1111.73,103.51 L1113.66,104.01 L1115.61,104.52 L1117.56,105.03 L1119.53,105.54 L1121.51,106.06 L1123.49,106.58 L1125.49,107.11 L1127.50,107.64 L1129.52,108.18 L1131.55,108.72 L1133.58,109.27 L1135.63,109.82 L1137.68,110.37 L1139.74,110.93 L1141.81,111.49 L1143.89,112.06 L1145.98,112.62 L1148.07,113.20 L1150.17,113.77 L1152.28,114.35 L1154.39,114.94 L1156.51,115.53 L1158.64,116.12 L1160.77,116.71 L1162.91,117.31 L1165.06,117.91 L1167.21,118.51 L1169.36,119.12 L1171.52,119.72 L1173.69,120.34 L1175.86,120.95 L1178.03,121.57 L1180.21,122.19 L1182.39,122.81 L1184.58,123.44 L1186.77,124.07 L1188.96,124.70 L1191.16,125.33 L1193.36,125.96 L1195.56,126.60 L1197.77,127.24 L1199.97,127.89 L1202.18,128.53 L1204.40,129.18 L1206.61,129.83 L1208.83,130.48 L1211.05,131.13 L1213.27,131.79 L1215.49,132.44 L1217.71,133.10 L1219.93,133.77 M582.01,134.43 L580.73,135.09 L579.46,135.76 L578.19,136.43 L576.91,137.10 L575.64,137.77 L574.36,138.45 L573.09,139.12 L571.81,139.80 L570.54,140.48 L569.26,141.16 L567.99,141.84 L566.72,142.52 L565.45,143.21 L564.18,143.90 L562.90,144.58 L561.64,145.27 L560.37,145.96 L559.10,146.66 L557.84,147.35 L556.57,148.04 L555.31,148.74 L554.05,149.44 L552.79,150.14 L551.54,150.84 L550.28,151.54 L549.03,152.24 L547.78,152.94 L546.53,153.65 L545.29,154.35 L544.04,155.06 L542.80,155.77 L541.56,156.48 L540.33,157.19 L539.10,157.90 L537.87,158.61 L536.64,159.32 L535.42,160.04 L534.20,160.75 L532.98,161.47 L531.77,162.18 L530.56,162.90 L529.35,163.62 L528.15,164.34 L526.95,165.06 L525.76,165.78 L524.56,166.50 L523.38,167.23 L522.19,167.95 L521.01,168.67 L519.84,169.40 L518.67,170.13 L517.50,170.85 L516.33,171.58 L515.17,172.31 L514.02,173.04 L512.87,173.77 L511.72,174.50 L510.58,175.23 L509.45,175.96 L508.31,176.70 L507.19,177.43 L506.06,178.16 L504.94,178.90 L503.83,179.63 L502.72,180.37 L501.62,181.11 L500.52,181.84 L499.43,182.58 L498.34,183.32 L497.26,184.06 L496.18,184.80 L495.11,185.54 L494.04,186.28 L492.98,187.02 L491.92,187.76 L490.87,188.50 L489.83,189.25 L488.79,189.99 L487.75,190.73 L486.73,191.48 L485.70,192.22 L484.69,192.97 L483.67,193.71 L482.67,194.46 L481.67,195.21 L480.68,195.95 L479.69,196.70 L478.71,197.45 L477.73,198.20 L476.76,198.95 L475.80,199.70 L474.84,200.45 L473.89,201.20 L472.95,201.95 L472.01,202.70 L471.07,203.45 L470.15,204.20 L469.23,204.96 L468.32,205.71 L467.41,206.46 L466.51,207.22 L465.61,207.97 L464.73,208.72 L463.85,209.48 L462.97,210.23 L462.10,210.99 L461.24,211.74 L460.39,212.50 L459.54,213.26 L458.70,214.01 L457.87,214.77 L457.04,215.53 L456.22,216.28 L455.41,217.04 L454.60,217.80" fill="none" stroke="#4ec36b" stroke-width="1.39" stroke-dasharray="1.39 2.29"/>
<path d="M1043.30,93.30 L1043.89,93.19 L1044.49,93.09 L1045.12,93.00 L1045.77,92.92 L1046.43,92.85 L1047.12,92.79 L1047.82,92.74 L1048.55,92.70 L1049.29,92.67 L1050.06,92.64 L1050.85,92.63 L1051.66,92.63 L1052.49,92.63 L1053.34,92.65 L1054.21,92.68 L1055.10,92.71 L1056.02,92.76 L1056.95,92.81 L1057.91,92.88 L1058.89,92.95 L1059.89,93.03 L1060.91,93.13 L1061.96,93.23 L1063.02,93.34 L1064.11,93.46 L1065.22,93.59 L1066.35,93.73 L1067.50,93.88 L1068.67,94.04 L1069.86,94.20 L1071.08,94.38 L1072.32,94.56 L1073.57,94.76 L1074.85,94.96 L1076.15,95.17 L1077.47,95.39 L1078.81,95.62 L1080.17,95.86 L1081.55,96.10 L1082.96,96.35 L1084.38,96.62 L1085.82,96.89 L1087.28,97.16 L1088.76,97.45 L1090.26,97.74 L1091.78,98.04 L1093.31,98.35 L1094.87,98.67 L1096.44,98.99 L1098.03,99.32 L1099.64,99.66 L1101.27,100.01 L1102.92,100.36 L1104.58,100.72 L1106.26,101.08 L1107.95,101.46 L1109.66,101.84 L1111.39,102.22 L1113.14,102.61 L1114.90,103.01 L1116.67,103.42 L1118.46,103.83 L1120.27,104.25 L1122.09,104.67 L1123.92,105.10 L1125.77,105.53 L1127.63,105.97 L1129.51,106.42 L1131.40,106.87 L1133.30,107.33 L1135.21,107.79 L1137.14,108.26 L1139.08,108.73 L1141.03,109.21 L1142.99,109.69 L1144.97,110.17 L1146.95,110.67 L1148.95,111.16 L1150.96,111.66 L1152.98,112.17 L1155.01,112.68 L1157.04,113.19 L1159.09,113.71 L1161.15,114.23 L1163.22,114.76 L1165.29,115.29 L1167.38,115.83 L1169.47,116.37 L1171.57,116.91 L1173.68,117.45 L1175.80,118.00 L1177.92,118.56 L1180.05,119.12 M621.64,119.68 L620.68,120.24 L619.71,120.81 L618.73,121.38 L617.74,121.95 L616.75,122.53 L615.76,123.11 L614.75,123.69 L613.75,124.28 L612.74,124.87 L611.72,125.46 L610.70,126.06 L609.67,126.65 L608.64,127.26 L607.61,127.86 L606.57,128.47 L605.53,129.07 L604.48,129.69 L603.43,130.30 L602.38,130.92 L601.32,131.53 L600.27,132.16 L599.21,132.78 L598.14,133.40 L597.08,134.03 L596.01,134.66 L594.94,135.30 L593.87,135.93 L592.80,136.57 L591.72,137.21 L590.65,137.85 L589.57,138.49 L588.49,139.13 L587.41,139.78 L586.34,140.43 L585.25,141.08 L584.17,141.73 L583.09,142.39 L582.01,143.04 L580.93,143.70 L579.85,144.36 L578.76,145.02 L577.68,145.68 L576.60,146.35 L575.52,147.01 L574.44,147.68 L573.36,148.35 L572.28,149.02 L571.20,149.69 L570.12,150.37 L569.05,151.04 L567.97,151.72 L566.90,152.40 L565.82,153.07 L564.75,153.76 L563.68,154.44 L562.61,155.12 L561.55,155.80 L560.48,156.49 L559.42,157.18 L558.36,157.87 L557.30,158.55 L556.24,159.25 L555.19,159.94 L554.14,160.63 L553.09,161.32 L552.04,162.02 L550.99,162.72 L549.95,163.41 L548.91,164.11 L547.88,164.81 L546.84,165.51 L545.81,166.21 L544.78,166.91 L543.76,167.62 L542.74,168.32 L541.72,169.03 L540.70,169.73 L539.69,170.44 L538.68,171.15 L537.68,171.86 L536.67,172.57 L535.68,173.28 L534.68,173.99 L533.69,174.70 L532.70,175.42 L531.72,176.13 L530.74,176.84 L529.77,177.56 L528.79,178.28 L527.83,178.99 L526.86,179.71 L525.90,180.43 L524.95,181.15 L524.00,181.87 L523.05,182.59 L522.11,183.31 L521.17,184.04 L520.24,184.76 L519.31,185.48 L518.39,186.21 L517.47,186.93 L516.55,187.66 L515.64,188.38 L514.74,189.11 L513.84,189.84 L512.94,190.57 L512.05,191.29 L511.16,192.02 L510.28,192.75 L509.41,193.48 L508.54,194.21 L507.67,194.95 L506.81,195.68 L505.95,196.41 L505.10,197.14 L504.26,197.88 L503.42,198.61 L502.58,199.35 L501.75,200.08 L500.93,200.82 L500.11,201.55 L499.30,202.29 L498.49,203.03 L497.69,203.76 L496.90,204.50 L496.10,205.24 L495.32,205.98 L494.54,206.72 L493.77,207.46 L493.00,208.20" fill="none" stroke="#4ec36b" stroke-width="1.39" stroke-dasharray="1.39 2.29"/>
<path d="M911.70,75.90 L910.96,75.41 L910.22,74.92 L909.48,74.44 L908.74,73.97 L908.00,73.52 L907.26,73.07 L906.53,72.63 L905.79,72.20 L905.06,71.78 L904.33,71.37 L903.60,70.98 L902.86,70.59 L902.13,70.22 L901.40,69.86 L900.67,69.51 L899.94,69.17 L899.21,68.85 L898.47,68.54 L897.74,68.24 L897.00,67.96 L896.27,67.69 L895.53,67.43 L894.79,67.19 L894.04,66.97 L893.30,66.76 L892.55,66.56 L891.79,66.39 L891.03,66.22 L890.27,66.07 L889.51,65.94 L888.73,65.83 L887.96,65.73 L887.17,65.65 L886.38,65.58 L885.59,65.54 L884.79,65.50 L883.98,65.49 L883.16,65.49 L882.33,65.51 L881.50,65.55 L880.65,65.60 L879.80,65.67 L878.94,65.76 L878.07,65.86 L877.19,65.98 L876.30,66.12 L875.40,66.27 L874.49,66.44 L873.56,66.62 L872.63,66.82 L871.69,67.04 L870.73,67.27 L869.77,67.51 L868.79,67.77 L867.80,68.04 L866.80,68.33 L865.79,68.63 L864.77,68.94 L863.73,69.27 L862.69,69.61 L861.63,69.97 L860.57,70.33 L859.49,70.71 L858.40,71.10 L857.30,71.50 L856.19,71.91 L855.07,72.33 L853.94,72.76 L852.80,73.20 L851.65,73.65 L850.49,74.12 L849.32,74.59 L848.14,75.07 L846.95,75.55 L845.76,76.05 L844.55,76.56 L843.34,77.07 L842.12,77.59 L840.89,78.12 L839.65,78.65 L838.40,79.20 L837.15,79.75 L835.89,80.30 L834.62,80.86 L833.34,81.43 L832.06,82.01 L830.78,82.59 L829.48,83.17 L828.18,83.77 L826.87,84.36 L825.56,84.97 L824.24,85.57 L822.92,86.18 L821.59,86.80 L820.26,87.42 L818.92,88.05 L817.58,88.68 L816.23,89.31 L814.88,89.95 L813.53,90.59 L812.17,91.24 L810.81,91.89 L809.44,92.54 L808.07,93.20 L806.69,93.86 L805.32,94.52 L803.94,95.19 L802.55,95.86 L801.17,96.53 L799.78,97.21 L798.39,97.88 L797.00,98.56 L795.60,99.25 L794.20,99.93 L792.80,100.62 L791.40,101.31 L790.00,102.01 L788.59,102.70 L787.19,103.40 L785.78,104.10 L784.37,104.80 L782.96,105.51 L781.54,106.21 L780.13,106.92 L778.72,107.63 L777.30,108.35 L775.89,109.06 L774.47,109.78 L773.05,110.49 L771.63,111.21 L770.22,111.93 L768.80,112.66 L767.38,113.38 L765.96,114.10 L764.54,114.83 L763.12,115.56 L761.71,116.29 L760.29,117.02 L758.87,117.75 L757.45,118.49 L756.03,119.22 L754.62,119.96 L753.20,120.70 L751.78,121.44 L750.37,122.17 L748.95,122.92 L747.54,123.66 L746.13,124.40 L744.72,125.15 L743.30,125.89 L741.89,126.64 L740.49,127.38 L739.08,128.13 L737.67,128.88 L736.27,129.63 L734.86,130.38 L733.46,131.13 L732.06,131.89 L730.66,132.64 L729.26,133.40 L727.87,134.15 L726.47,134.91 L725.08,135.66 L723.69,136.42 L722.30,137.18 L720.92,137.94 L719.53,138.70 L718.15,139.46 L716.77,140.22 L715.39,140.98 L714.01,141.74 L712.64,142.51 L711.27,143.27 L709.90,144.04 L708.53,144.80 L707.17,145.57 L705.80,146.33 L704.44,147.10 L703.09,147.87 L701.73,148.63 L700.38,149.40 L699.03,150.17 L697.68,150.94 L696.34,151.71 L695.00,152.48 L693.66,153.25 L692.33,154.02 L690.99,154.79 L689.66,155.57 L688.34,156.34 L687.01,157.11 L685.69,157.89 L684.38,158.66 L683.06,159.44 L681.75,160.21 L680.44,160.99 L679.14,161.76 L677.84,162.54 L676.54,163.31 L675.25,164.09 L673.96,164.87 L672.67,165.65 L671.39,166.42 L670.11,167.20 L668.83,167.98 L667.56,168.76 L666.29,169.54 L665.02,170.32 L663.76,171.10 L662.50,171.88 L661.24,172.66 L659.99,173.44 L658.75,174.22 L657.50,175.00 L656.26,175.79 L655.03,176.57 L653.80,177.35 L652.57,178.13 L651.35,178.92 L650.13,179.70 L648.91,180.48 L647.70,181.27 L646.50,182.05 L645.29,182.83 L644.09,183.62 L642.90,184.40 L641.71,185.19 L640.52,185.97 L639.34,186.76 L638.17,187.55 L636.99,188.33 L635.83,189.12 L634.66,189.90 L633.50,190.69 L632.35,191.48 L631.20,192.26 L630.05,193.05 L628.91,193.84 L627.78,194.63 L626.64,195.41 L625.52,196.20 L624.40,196.99 L623.28,197.78 L622.16,198.57 L621.06,199.36 L619.95,200.15 L618.86,200.93 L617.76,201.72 L616.67,202.51 L615.59,203.30 L614.51,204.09 L613.44,204.88 L612.37,205.67 L611.30,206.46 L610.25,207.25 L609.19,208.04 L608.14,208.84 L607.10,209.63 L606.06,210.42 L605.03,211.21 L604.00,212.00" fill="none" stroke="#424086" stroke-width="1.39" stroke-dasharray="1.39 2.29"/>
<path d="M913.00,77.00 L912.25,76.49 L911.51,75.99 L910.76,75.50 L910.02,75.02 L909.28,74.55 L908.53,74.09 L907.80,73.63 L907.06,73.19 L906.32,72.76 L905.58,72.33 L904.85,71.92 L904.11,71.52 L903.38,71.13 L902.65,70.75 L901.91,70.38 L901.18,70.02 L900.45,69.68 L899.71,69.35 L898.98,69.03 L898.24,68.73 L897.50,68.44 L896.76,68.16 L896.02,67.90 L895.28,67.65 L894.54,67.41 L893.79,67.19 L893.04,66.99 L892.29,66.80 L891.53,66.63 L890.77,66.47 L890.00,66.33 L889.23,66.21 L888.46,66.10 L887.68,66.01 L886.89,65.93 L886.10,65.87 L885.30,65.83 L884.49,65.80 L883.68,65.80 L882.86,65.80 L882.03,65.83 L881.19,65.87 L880.34,65.93 L879.49,66.01 L878.62,66.10 L877.75,66.21 L876.86,66.33 L875.97,66.47 L875.06,66.63 L874.15,66.80 L873.22,66.99 L872.28,67.19 L871.34,67.41 L870.38,67.65 L869.41,67.90 L868.43,68.16 L867.44,68.44 L866.43,68.73 L865.42,69.03 L864.39,69.35 L863.36,69.68 L862.31,70.02 L861.25,70.38 L860.18,70.75 L859.10,71.13 L858.01,71.52 L856.91,71.92 L855.80,72.33 L854.68,72.76 L853.54,73.19 L852.40,73.63 L851.25,74.09 L850.09,74.55 L848.92,75.02 L847.74,75.51 L846.55,76.00 L845.35,76.49 L844.15,77.00 L842.93,77.52 L841.71,78.04 L840.48,78.57 L839.24,79.10 L837.99,79.65 L836.74,80.20 L835.48,80.76 L834.21,81.32 L832.94,81.89 L831.66,82.46 L830.37,83.05 L829.07,83.63 L827.77,84.23 L826.47,84.82 L825.16,85.43 L823.84,86.04 L822.52,86.65 L821.19,87.27 L819.86,87.89 L818.52,88.51 L817.18,89.14 L815.83,89.78 L814.48,90.42 L813.13,91.06 L811.77,91.71 L810.41,92.36 L809.04,93.01 L807.67,93.67 L806.30,94.33 L804.92,94.99 L803.55,95.66 L802.16,96.33 L800.78,97.00 L799.39,97.68 L798.00,98.36 L796.61,99.04 L795.22,99.72 L793.82,100.41 L792.42,101.10 L791.02,101.79 L789.62,102.49 L788.21,103.18 L786.81,103.88 L785.40,104.58 L783.99,105.28 L782.58,105.99 L781.17,106.70 L779.76,107.41 L778.35,108.12 L776.93,108.83 L775.52,109.54 L774.11,110.26 L772.69,110.98 L771.27,111.70 L769.86,112.42 L768.44,113.14 L767.02,113.87 L765.61,114.59 L764.19,115.32 L762.77,116.05 L761.36,116.78 L759.94,117.51 L758.52,118.24 L757.11,118.98 L755.69,119.71 L754.28,120.45 L752.86,121.19 L751.45,121.93 L750.03,122.67 L748.62,123.41 L747.21,124.15 L745.80,124.90 L744.39,125.64 L742.98,126.39 L741.57,127.14 L740.16,127.88 L738.76,128.63 L737.35,129.38 L735.95,130.13 L734.55,130.88 L733.15,131.64 L731.75,132.39 L730.35,133.14 L728.96,133.90 L727.56,134.66 L726.17,135.41 L724.78,136.17 L723.39,136.93 L722.01,137.69 L720.62,138.45 L719.24,139.21 L717.86,139.97 L716.48,140.73 L715.10,141.49 L713.73,142.26 L712.36,143.02 L710.99,143.78 L709.62,144.55 L708.26,145.31 L706.89,146.08 L705.53,146.85 L704.17,147.62 L702.82,148.38 L701.47,149.15 L700.12,149.92 L698.77,150.69 L697.43,151.46 L696.08,152.23 L694.74,153.00 L693.41,153.77 L692.08,154.55 L690.75,155.32 L689.42,156.09 L688.09,156.87 L686.77,157.64 L685.46,158.41 L684.14,159.19 L682.83,159.96 L681.52,160.74 L680.21,161.52 L678.91,162.29 L677.61,163.07 L676.32,163.85 L675.03,164.62 L673.74,165.40 L672.45,166.18 L671.17,166.96 L669.89,167.74 L668.62,168.52 L667.35,169.30 L666.08,170.08 L664.82,170.86 L663.56,171.64 L662.30,172.42 L661.05,173.20 L659.80,173.98 L658.56,174.77 L657.32,175.55 L656.08,176.33 L654.85,177.11 L653.62,177.90 L652.39,178.68 L651.17,179.46 L649.96,180.25 L648.74,181.03 L647.54,181.82 L646.33,182.60 L645.13,183.39 L643.94,184.17 L642.74,184.96 L641.56,185.74 L640.37,186.53 L639.20,187.32 L638.02,188.10 L636.85,188.89 L635.69,189.68 L634.53,190.46 L633.37,191.25 L632.22,192.04 L631.07,192.83 L629.93,193.62 L628.79,194.40 L627.66,195.19 L626.53,195.98 L625.40,196.77 L624.28,197.56 L623.17,198.35 L622.06,199.14 L620.95,199.93 L619.85,200.72 L618.76,201.51 L617.67,202.30 L616.58,203.09 L615.50,203.88 L614.43,204.67 L613.35,205.46 L612.29,206.25 L611.23,207.04 L610.17,207.83 L609.12,208.62 L608.08,209.42 L607.04,210.21 L606.00,211.00" fill="none" stroke="#424086" stroke-width="1.39" stroke-dasharray="1.39 2.29"/>
<path d="M915.00,78.50 L914.24,77.99 L913.48,77.48 L912.73,76.99 L911.98,76.50 L911.22,76.02 L910.47,75.55 L909.72,75.09 L908.98,74.64 L908.23,74.19 L907.49,73.76 L906.74,73.34 L906.00,72.92 L905.26,72.52 L904.52,72.13 L903.78,71.75 L903.04,71.38 L902.30,71.03 L901.56,70.68 L900.82,70.35 L900.08,70.03 L899.34,69.72 L898.59,69.43 L897.85,69.14 L897.11,68.88 L896.36,68.62 L895.62,68.39 L894.87,68.16 L894.11,67.95 L893.36,67.76 L892.60,67.58 L891.84,67.41 L891.08,67.26 L890.31,67.13 L889.54,67.01 L888.76,66.91 L887.97,66.82 L887.19,66.75 L886.39,66.70 L885.59,66.66 L884.78,66.64 L883.97,66.64 L883.15,66.65 L882.32,66.68 L881.48,66.72 L880.64,66.79 L879.78,66.86 L878.92,66.96 L878.05,67.07 L877.17,67.19 L876.28,67.33 L875.38,67.49 L874.47,67.66 L873.55,67.85 L872.62,68.05 L871.68,68.27 L870.73,68.50 L869.77,68.75 L868.80,69.01 L867.82,69.28 L866.83,69.57 L865.82,69.87 L864.81,70.18 L863.79,70.51 L862.75,70.85 L861.71,71.20 L860.65,71.56 L859.59,71.94 L858.51,72.32 L857.43,72.72 L856.33,73.13 L855.23,73.54 L854.11,73.97 L852.99,74.41 L851.85,74.86 L850.71,75.31 L849.56,75.78 L848.40,76.26 L847.23,76.74 L846.05,77.23 L844.86,77.73 L843.67,78.24 L842.47,78.75 L841.26,79.28 L840.04,79.81 L838.81,80.34 L837.58,80.89 L836.34,81.44 L835.09,81.99 L833.84,82.56 L832.58,83.13 L831.31,83.70 L830.04,84.28 L828.77,84.87 L827.48,85.46 L826.19,86.05 L824.90,86.66 L823.60,87.26 L822.29,87.87 L820.98,88.49 L819.67,89.11 L818.35,89.73 L817.03,90.36 L815.70,90.99 L814.37,91.63 L813.03,92.27 L811.69,92.91 L810.35,93.56 L809.01,94.21 L807.66,94.87 L806.30,95.52 L804.95,96.18 L803.59,96.85 L802.23,97.52 L800.86,98.19 L799.50,98.86 L798.13,99.53 L796.76,100.21 L795.38,100.89 L794.01,101.58 L792.63,102.26 L791.25,102.95 L789.87,103.64 L788.49,104.33 L787.10,105.03 L785.72,105.73 L784.33,106.43 L782.94,107.13 L781.55,107.83 L780.16,108.54 L778.77,109.24 L777.38,109.95 L775.99,110.67 L774.59,111.38 L773.20,112.09 L771.80,112.81 L770.41,113.53 L769.02,114.25 L767.62,114.97 L766.22,115.69 L764.83,116.41 L763.43,117.14 L762.04,117.87 L760.64,118.59 L759.25,119.32 L757.86,120.06 L756.46,120.79 L755.07,121.52 L753.67,122.26 L752.28,122.99 L750.89,123.73 L749.50,124.47 L748.11,125.21 L746.72,125.95 L745.33,126.69 L743.94,127.43 L742.56,128.17 L741.17,128.92 L739.79,129.66 L738.41,130.41 L737.03,131.16 L735.65,131.91 L734.27,132.66 L732.89,133.41 L731.51,134.16 L730.14,134.91 L728.77,135.66 L727.40,136.41 L726.03,137.17 L724.66,137.92 L723.29,138.68 L721.93,139.44 L720.57,140.19 L719.21,140.95 L717.85,141.71 L716.50,142.47 L715.14,143.23 L713.79,143.99 L712.44,144.75 L711.10,145.51 L709.75,146.27 L708.41,147.04 L707.07,147.80 L705.74,148.56 L704.40,149.33 L703.07,150.09 L701.74,150.86 L700.41,151.63 L699.09,152.39 L697.77,153.16 L696.45,153.93 L695.13,154.70 L693.82,155.47 L692.51,156.24 L691.20,157.01 L689.90,157.78 L688.60,158.55 L687.30,159.32 L686.00,160.09 L684.71,160.86 L683.42,161.64 L682.14,162.41 L680.86,163.18 L679.58,163.96 L678.30,164.73 L677.03,165.50 L675.76,166.28 L674.49,167.05 L673.23,167.83 L671.97,168.61 L670.72,169.38 L669.47,170.16 L668.22,170.94 L666.97,171.71 L665.73,172.49 L664.50,173.27 L663.26,174.05 L662.03,174.83 L660.81,175.61 L659.58,176.39 L658.37,177.17 L657.15,177.95 L655.94,178.73 L654.73,179.51 L653.53,180.29 L652.33,181.07 L651.14,181.85 L649.95,182.63 L648.76,183.41 L647.58,184.20 L646.40,184.98 L645.23,185.76 L644.06,186.54 L642.89,187.33 L641.73,188.11 L640.57,188.89 L639.42,189.68 L638.27,190.46 L637.13,191.25 L635.99,192.03 L634.85,192.82 L633.72,193.60 L632.60,194.39 L631.48,195.17 L630.36,195.96 L629.25,196.74 L628.14,197.53 L627.04,198.32 L625.94,199.10 L624.84,199.89 L623.75,200.68 L622.67,201.46 L621.59,202.25 L620.52,203.04 L619.45,203.83 L618.38,204.61 L617.32,205.40 L616.26,206.19 L615.21,206.98 L614.17,207.77 L613.13,208.55 L612.09,209.34 L611.06,210.13 L610.04,210.92 L609.02,211.71 L608.00,212.50" fill="none" stroke="#424086" stroke-width="1.39" stroke-dasharray="1.39 2.29"/>
<path d="M922.90,93.10 L922.14,92.53 L921.39,91.97 L920.63,91.42 L919.88,90.87 L919.12,90.33 L918.37,89.79 L917.62,89.26 L916.87,88.73 L916.13,88.21 L915.38,87.69 L914.64,87.19 L913.89,86.68 L913.15,86.19 L912.41,85.70 L911.67,85.22 L910.93,84.75 L910.19,84.28 L909.46,83.82 L908.72,83.37 L907.99,82.93 L907.25,82.50 L906.52,82.07 L905.78,81.65 L905.05,81.24 L904.32,80.84 L903.59,80.45 L902.86,80.07 L902.13,79.70 L901.40,79.34 L900.67,78.99 L899.94,78.65 L899.20,78.31 L898.47,77.99 L897.74,77.68 L897.01,77.38 L896.27,77.10 L895.53,76.82 L894.80,76.55 L894.06,76.30 L893.32,76.06 L892.58,75.83 L891.83,75.61 L891.08,75.41 L890.33,75.21 L889.58,75.04 L888.82,74.87 L888.06,74.71 L887.30,74.57 L886.53,74.45 L885.76,74.33 L884.99,74.23 L884.20,74.15 L883.42,74.07 L882.63,74.01 L881.83,73.97 L881.03,73.93 L880.22,73.92 L879.41,73.91 L878.59,73.92 L877.76,73.94 L876.93,73.98 L876.08,74.03 L875.24,74.09 L874.38,74.17 L873.52,74.26 L872.64,74.37 L871.76,74.49 L870.88,74.62 L869.98,74.76 L869.08,74.92 L868.16,75.09 L867.24,75.27 L866.31,75.47 L865.37,75.68 L864.42,75.90 L863.46,76.13 L862.50,76.38 L861.52,76.64 L860.54,76.91 L859.54,77.19 L858.54,77.48 L857.53,77.78 L856.51,78.09 L855.48,78.42 L854.44,78.75 L853.39,79.10 L852.33,79.45 L851.26,79.82 L850.19,80.19 L849.11,80.58 L848.01,80.97 L846.91,81.37 L845.80,81.79 L844.69,82.21 L843.56,82.63 L842.43,83.07 L841.29,83.52 L840.14,83.97 L838.98,84.43 L837.81,84.90 L836.64,85.38 L835.46,85.86 L834.28,86.35 L833.08,86.84 L831.88,87.35 L830.67,87.86 L829.46,88.37 L828.24,88.90 L827.01,89.43 L825.78,89.96 L824.54,90.50 L823.30,91.05 L822.05,91.60 L820.79,92.15 L819.53,92.72 L818.26,93.28 L816.99,93.85 L815.71,94.43 L814.43,95.01 L813.15,95.60 L811.85,96.19 L810.56,96.78 L809.26,97.38 L807.96,97.98 L806.65,98.59 L805.34,99.20 L804.02,99.82 L802.70,100.43 L801.38,101.06 L800.05,101.68 L798.72,102.31 L797.39,102.94 L796.06,103.58 L794.72,104.22 L793.38,104.86 L792.03,105.50 L790.69,106.15 L789.34,106.80 L787.98,107.45 L786.63,108.11 L785.28,108.77 L783.92,109.43 L782.56,110.10 L781.20,110.76 L779.83,111.43 L778.47,112.10 L777.10,112.78 L775.74,113.45 L774.37,114.13 L773.00,114.81 L771.62,115.49 L770.25,116.18 L768.88,116.86 L767.50,117.55 L766.13,118.24 L764.75,118.94 L763.38,119.63 L762.00,120.33 L760.62,121.02 L759.24,121.72 L757.87,122.43 L756.49,123.13 L755.11,123.83 L753.73,124.54 L752.35,125.25 L750.97,125.96 L749.59,126.67 L748.22,127.38 L746.84,128.09 L745.46,128.81 L744.08,129.52 L742.71,130.24 L741.33,130.96 L739.96,131.68 L738.58,132.40 L737.21,133.12 L735.83,133.85 L734.46,134.57 L733.09,135.30 L731.72,136.03 L730.35,136.75 L728.98,137.48 L727.62,138.21 L726.25,138.95 L724.89,139.68 L723.52,140.41 L722.16,141.15 L720.80,141.88 L719.44,142.62 L718.09,143.36 L716.73,144.09 L715.38,144.83 L714.03,145.57 L712.68,146.31 L711.33,147.06 L709.98,147.80 L708.64,148.54 L707.29,149.29 L705.95,150.03 L704.61,150.78 L703.28,151.52 L701.94,152.27 L700.61,153.02 L699.28,153.77 L697.96,154.52 L696.63,155.27 L695.31,156.02 L693.99,156.77 L692.67,157.52 L691.36,158.27 L690.04,159.03 L688.73,159.78 L687.43,160.53 L686.12,161.29 L684.82,162.05 L683.52,162.80 L682.23,163.56 L680.93,164.32 L679.64,165.07 L678.36,165.83 L677.07,166.59 L675.79,167.35 L674.51,168.11 L673.24,168.87 L671.97,169.63 L670.70,170.39 L669.43,171.16 L668.17,171.92 L666.91,172.68 L665.66,173.44 L664.41,174.21 L663.16,174.97 L661.91,175.74 L660.67,176.50 L659.43,177.27 L658.20,178.03 L656.97,178.80 L655.74,179.57 L654.52,180.33 L653.30,181.10 L652.08,181.87 L650.87,182.64 L649.66,183.41 L648.46,184.17 L647.26,184.94 L646.06,185.71 L644.87,186.48 L643.68,187.25 L642.49,188.02 L641.31,188.80 L640.13,189.57 L638.96,190.34 L637.79,191.11 L636.63,191.88 L635.47,192.66 L634.31,193.43 L633.16,194.20 L632.01,194.98 L630.87,195.75 L629.73,196.52 L628.59,197.30 L627.46,198.07 L626.34,198.85 L625.22,199.62 L624.10,200.40 L622.99,201.17 L621.88,201.95 L620.78,202.73 L619.68,203.50 L618.58,204.28 L617.49,205.06 L616.41,205.83 L615.33,206.61 L614.25,207.39 L613.18,208.17 L612.12,208.94 L611.06,209.72 L610.00,210.50" fill="none" stroke="#424086" stroke-width="1.39" stroke-dasharray="1.39 2.29"/>
<path d="M921.40,126.20 L920.69,125.66 L919.98,125.13 L919.28,124.60 L918.57,124.07 L917.86,123.55 L917.16,123.03 L916.45,122.51 L915.75,122.00 L915.04,121.49 L914.34,120.99 L913.64,120.49 L912.93,119.99 L912.23,119.50 L911.53,119.01 L910.82,118.53 L910.12,118.05 L909.42,117.57 L908.72,117.10 L908.02,116.64 L907.32,116.18 L906.62,115.72 L905.92,115.27 L905.22,114.82 L904.52,114.38 L903.82,113.94 L903.12,113.51 L902.42,113.08 L901.72,112.66 L901.02,112.24 L900.32,111.83 L899.62,111.43 L898.92,111.03 L898.22,110.63 L897.52,110.25 L896.81,109.86 L896.11,109.49 L895.41,109.12 L894.71,108.75 L894.01,108.39 L893.31,108.04 L892.60,107.69 L891.90,107.35 L891.19,107.02 L890.49,106.69 L889.78,106.37 L889.07,106.06 L888.37,105.75 L887.66,105.45 L886.95,105.16 L886.23,104.87 L885.52,104.59 L884.81,104.32 L884.09,104.05 L883.37,103.79 L882.65,103.54 L881.93,103.30 L881.21,103.07 L880.49,102.84 L879.76,102.62 L879.03,102.40 L878.30,102.20 L877.57,102.00 L876.83,101.81 L876.09,101.63 L875.35,101.46 L874.61,101.29 L873.86,101.14 L873.12,100.99 L872.36,100.85 L871.61,100.71 L870.85,100.59 L870.09,100.47 L869.32,100.37 L868.56,100.27 L867.78,100.18 L867.01,100.10 L866.23,100.02 L865.45,99.96 L864.66,99.90 L863.87,99.85 L863.07,99.81 L862.27,99.78 L861.47,99.76 L860.66,99.75 L859.84,99.74 L859.02,99.75 L858.20,99.76 L857.37,99.78 L856.54,99.81 L855.70,99.85 L854.86,99.90 L854.01,99.95 L853.15,100.02 L852.29,100.09 L851.43,100.17 L850.56,100.26 L849.68,100.36 L848.80,100.47 L847.91,100.58 L847.02,100.71 L846.12,100.84 L845.22,100.98 L844.31,101.13 L843.39,101.29 L842.47,101.45 L841.54,101.62 L840.61,101.80 L839.66,101.99 L838.72,102.19 L837.76,102.39 L836.81,102.61 L835.84,102.83 L834.87,103.05 L833.89,103.29 L832.91,103.53 L831.92,103.78 L830.92,104.04 L829.92,104.30 L828.91,104.58 L827.90,104.86 L826.88,105.14 L825.85,105.43 L824.82,105.73 L823.78,106.04 L822.73,106.35 L821.68,106.68 L820.63,107.00 L819.56,107.34 L818.49,107.68 L817.42,108.02 L816.34,108.37 L815.25,108.73 L814.16,109.10 L813.07,109.47 L811.96,109.84 L810.85,110.23 L809.74,110.62 L808.62,111.01 L807.50,111.41 L806.37,111.81 L805.23,112.22 L804.09,112.64 L802.95,113.06 L801.80,113.49 L800.64,113.92 L799.48,114.36 L798.31,114.80 L797.14,115.24 L795.97,115.70 L794.79,116.15 L793.61,116.61 L792.42,117.08 L791.23,117.55 L790.03,118.02 L788.83,118.50 L787.62,118.99 L786.41,119.47 L785.20,119.97 L783.98,120.46 L782.76,120.96 L781.54,121.47 L780.31,121.97 L779.07,122.49 L777.84,123.00 L776.60,123.52 L775.36,124.04 L774.11,124.57 L772.86,125.10 L771.61,125.64 L770.35,126.17 L769.10,126.71 L767.83,127.26 L766.57,127.81 L765.30,128.36 L764.03,128.91 L762.76,129.47 L761.49,130.03 L760.21,130.59 L758.93,131.16 L757.65,131.73 L756.37,132.30 L755.08,132.87 L753.79,133.45 L752.50,134.03 L751.21,134.61 L749.92,135.20 L748.62,135.79 L747.32,136.38 L746.02,136.97 L744.72,137.57 L743.42,138.17 L742.12,138.77 L740.82,139.37 L739.51,139.98 L738.20,140.59 L736.89,141.20 L735.59,141.81 L734.28,142.42 L732.97,143.04 L731.65,143.66 L730.34,144.28 L729.03,144.90 L727.71,145.53 L726.40,146.16 L725.09,146.78 L723.77,147.42 L722.46,148.05 L721.14,148.68 L719.82,149.32 L718.51,149.96 L717.19,150.60 L715.88,151.24 L714.56,151.88 L713.24,152.53 L711.93,153.18 L710.61,153.82 L709.30,154.47 L707.98,155.13 L706.67,155.78 L705.35,156.43 L704.04,157.09 L702.72,157.75 L701.41,158.41 L700.10,159.07 L698.79,159.73 L697.48,160.39 L696.17,161.06 L694.86,161.73 L693.55,162.39 L692.25,163.06 L690.94,163.73 L689.64,164.41 L688.33,165.08 L687.03,165.75 L685.73,166.43 L684.43,167.10 L683.13,167.78 L681.83,168.46 L680.54,169.14 L679.25,169.82 L677.95,170.51 L676.66,171.19 L675.37,171.87 L674.09,172.56 L672.80,173.25 L671.52,173.93 L670.24,174.62 L668.96,175.31 L667.68,176.00 L666.40,176.69 L665.13,177.39 L663.86,178.08 L662.59,178.78 L661.32,179.47 L660.06,180.17 L658.79,180.86 L657.53,181.56 L656.28,182.26 L655.02,182.96 L653.77,183.66 L652.52,184.36 L651.27,185.07 L650.02,185.77 L648.78,186.47 L647.54,187.18 L646.30,187.89 L645.07,188.59 L643.84,189.30 L642.61,190.01 L641.38,190.72 L640.16,191.42 L638.94,192.13 L637.72,192.85 L636.50,193.56 L635.29,194.27 L634.09,194.98 L632.88,195.70 L631.68,196.41 L630.48,197.13 L629.28,197.84 L628.09,198.56 L626.90,199.27 L625.72,199.99 L624.54,200.71 L623.36,201.43 L622.18,202.15 L621.01,202.87 L619.84,203.59 L618.68,204.31 L617.52,205.03 L616.36,205.75 L615.21,206.47 L614.06,207.20 L612.91,207.92 L611.77,208.64 L610.63,209.37 L609.50,210.09 L608.37,210.82 L607.24,211.55 L606.12,212.27 L605.00,213.00" fill="none" stroke="#424086" stroke-width="1.39" stroke-dasharray="1.39 2.29"/>
<path d="M1031.70,72.10 L1032.33,72.03 L1032.99,71.98 L1033.70,71.94 L1034.44,71.92 L1035.23,71.91 L1036.06,71.91 L1036.94,71.93 L1037.85,71.97 L1038.81,72.01 L1039.81,72.08 L1040.85,72.15 L1041.94,72.24 L1043.06,72.35 L1044.23,72.47 M759.71,72.60 L760.07,72.75 L760.39,72.91 L760.67,73.08 L760.91,73.27 L761.10,73.47 L761.26,73.68 L761.39,73.91 L761.47,74.15 L761.53,74.40 L761.54,74.67 L761.52,74.94 L761.47,75.23 L761.38,75.53 L761.27,75.84 L761.12,76.16 L760.94,76.50 L760.73,76.84 L760.50,77.20 L760.23,77.56 L759.94,77.94 L759.63,78.32 L759.28,78.72 L758.92,79.12 L758.53,79.54 L758.11,79.96 L757.67,80.39 L757.22,80.83 L756.74,81.28 L756.24,81.74 L755.72,82.20 L755.18,82.68 L754.62,83.16 L754.05,83.64 L753.46,84.14 L752.85,84.64 L752.22,85.15 L751.58,85.67 L750.93,86.19 L750.26,86.72 L749.58,87.25 L748.88,87.79 L748.17,88.34 L747.45,88.89 L746.72,89.45 L745.97,90.01 L745.21,90.58 L744.45,91.16 L743.67,91.73 L742.89,92.32 L742.09,92.91 L741.28,93.50 L740.47,94.10 L739.65,94.70 L738.82,95.30 L737.98,95.92 L737.14,96.53 L736.28,97.15 L735.43,97.77 L734.56,98.39 L733.69,99.02 L732.81,99.66 L731.93,100.29 L731.04,100.93 L730.15,101.58 L729.25,102.22 L728.35,102.87 L727.44,103.52 L726.53,104.18 L725.62,104.84 L724.70,105.50 L723.78,106.16 L722.85,106.83 L721.92,107.49 L720.99,108.17 L720.05,108.84 L719.12,109.52 L718.18,110.19 L717.24,110.88 L716.29,111.56 L715.35,112.24 L714.40,112.93 L713.45,113.62 L712.50,114.31 L711.55,115.00 L710.59,115.70 L709.64,116.40 L708.68,117.10 L707.73,117.80 L706.77,118.50 L705.81,119.20 L704.85,119.91 L703.90,120.62 L702.94,121.33 L701.98,122.04 L701.02,122.75 L700.06,123.46 L699.10,124.18 L698.14,124.90 L697.19,125.61 L696.23,126.33 L695.27,127.06 L694.32,127.78 L693.36,128.50 L692.41,129.23 L691.45,129.95 L690.50,130.68 L689.55,131.41 L688.60,132.14 L687.65,132.87 L686.70,133.60 L685.75,134.33 L684.81,135.07 L683.86,135.80 L682.92,136.54 L681.98,137.27 L681.04,138.01 L680.10,138.75 L679.17,139.49 L678.24,140.23 L677.30,140.97 L676.38,141.72 L675.45,142.46 L674.52,143.20 L673.60,143.95 L672.68,144.70 L671.76,145.44 L670.85,146.19 L669.93,146.94 L669.02,147.69 L668.11,148.44 L667.21,149.19 L666.30,149.94 L665.40,150.69 L664.50,151.44 L663.61,152.20 L662.72,152.95 L661.83,153.71 L660.94,154.46 L660.06,155.22 L659.18,155.97 L658.30,156.73 L657.42,157.49 L656.55,158.25 L655.68,159.01 L654.82,159.77 L653.96,160.53 L653.10,161.29 L652.24,162.05 L651.39,162.81 L650.54,163.57 L649.70,164.34 L648.86,165.10 L648.02,165.86 L647.18,166.63 L646.35,167.39 L645.53,168.16 L644.70,168.92 L643.88,169.69 L643.07,170.45 L642.25,171.22 L641.44,171.99 L640.64,172.76 L639.84,173.53 L639.04,174.29 L638.25,175.06 L637.46,175.83 L636.67,176.60 L635.89,177.37 L635.11,178.14 L634.34,178.91 L633.57,179.69 L632.80,180.46 L632.04,181.23 L631.29,182.00 L630.53,182.77 L629.78,183.55 L629.04,184.32 L628.30,185.09 L627.56,185.87 L626.83,186.64 L626.10,187.42 L625.38,188.19 L624.66,188.97 L623.95,189.74 L623.24,190.52 L622.53,191.30 L621.83,192.07 L621.14,192.85 L620.44,193.63 L619.76,194.40 L619.07,195.18 L618.40,195.96 L617.72,196.74 L617.05,197.51 L616.39,198.29 L615.73,199.07 L615.08,199.85 L614.43,200.63 L613.78,201.41 L613.14,202.19 L612.50,202.97 L611.87,203.75 L611.25,204.53 L610.63,205.31 L610.01,206.09 L609.40,206.87 L608.79,207.65 L608.19,208.44 L607.59,209.22 L607.00,210.00" fill="none" stroke="#424086" stroke-width="1.39" stroke-dasharray="1.39 2.29"/>
<path d="M1108.90,95.30 L1109.72,95.30 L1110.56,95.31 L1111.43,95.33 L1112.32,95.35 M691.10,95.39 L691.78,95.44 L692.44,95.49 L693.07,95.55 L693.67,95.63 L694.24,95.71 L694.79,95.80 L695.32,95.90 L695.81,96.01 L696.29,96.13 L696.73,96.26 L697.15,96.40 L697.55,96.54 L697.93,96.69 L698.27,96.86 L698.60,97.03 L698.90,97.21 L699.18,97.40 L699.44,97.60 L699.67,97.80 L699.88,98.01 L700.07,98.24 L700.24,98.47 L700.38,98.71 L700.51,98.95 L700.61,99.21 L700.70,99.47 L700.76,99.74 L700.81,100.02 L700.83,100.30 L700.84,100.59 L700.83,100.89 L700.80,101.20 L700.75,101.52 L700.68,101.84 L700.60,102.17 L700.50,102.50 L700.38,102.85 L700.25,103.20 L700.10,103.55 L699.94,103.91 L699.76,104.28 L699.56,104.66 L699.35,105.04 L699.13,105.43 L698.89,105.82 L698.64,106.22 L698.38,106.63 L698.10,107.04 L697.81,107.46 L697.51,107.88 L697.19,108.31 L696.87,108.75 L696.53,109.19 L696.18,109.63 L695.82,110.09 L695.45,110.54 L695.07,111.00 L694.68,111.47 L694.28,111.94 L693.87,112.41 L693.45,112.89 L693.02,113.38 L692.58,113.87 L692.14,114.36 L691.68,114.86 L691.22,115.37 L690.75,115.87 L690.27,116.38 L689.78,116.90 L689.29,117.42 L688.79,117.94 L688.29,118.47 L687.77,119.00 L687.25,119.54 L686.73,120.08 L686.20,120.62 L685.66,121.17 L685.12,121.72 L684.57,122.27 L684.02,122.83 L683.46,123.39 L682.90,123.95 L682.33,124.52 L681.76,125.09 L681.18,125.66 L680.60,126.23 L680.02,126.81 L679.43,127.40 L678.84,127.98 L678.24,128.57 L677.64,129.16 L677.04,129.75 L676.44,130.35 L675.83,130.95 L675.22,131.55 L674.60,132.15 L673.99,132.76 L673.37,133.37 L672.75,133.98 L672.13,134.59 L671.50,135.21 L670.88,135.83 L670.25,136.45 L669.62,137.07 L668.99,137.70 L668.36,138.32 L667.72,138.95 L667.09,139.59 L666.45,140.22 L665.82,140.86 L665.18,141.49 L664.54,142.13 L663.90,142.78 L663.26,143.42 L662.62,144.06 L661.98,144.71 L661.34,145.36 L660.70,146.01 L660.06,146.66 L659.42,147.32 L658.78,147.97 L658.14,148.63 L657.50,149.29 L656.86,149.95 L656.22,150.61 L655.58,151.28 L654.94,151.94 L654.30,152.61 L653.66,153.28 L653.03,153.95 L652.39,154.62 L651.76,155.29 L651.12,155.97 L650.49,156.64 L649.86,157.32 L649.23,158.00 L648.60,158.68 L647.97,159.36 L647.35,160.04 L646.72,160.73 L646.10,161.41 L645.48,162.10 L644.86,162.78 L644.24,163.47 L643.62,164.16 L643.01,164.85 L642.39,165.54 L641.78,166.23 L641.17,166.93 L640.57,167.62 L639.96,168.32 L639.36,169.02 L638.76,169.71 L638.16,170.41 L637.56,171.11 L636.97,171.81 L636.38,172.51 L635.79,173.22 L635.20,173.92 L634.62,174.63 L634.03,175.33 L633.45,176.04 L632.88,176.74 L632.30,177.45 L631.73,178.16 L631.17,178.87 L630.60,179.58 L630.04,180.29 L629.48,181.00 L628.92,181.72 L628.37,182.43 L627.82,183.15 L627.27,183.86 L626.72,184.58 L626.18,185.29 L625.64,186.01 L625.11,186.73 L624.57,187.45 L624.04,188.17 L623.52,188.89 L623.00,189.61 L622.48,190.33 L621.96,191.05 L621.45,191.77 L620.94,192.50 L620.43,193.22 L619.93,193.95 L619.43,194.67 L618.94,195.40 L618.45,196.12 L617.96,196.85 L617.48,197.58 L616.99,198.31 L616.52,199.03 L616.04,199.76 L615.58,200.49 L615.11,201.22 L614.65,201.95 L614.19,202.69 L613.74,203.42 L613.29,204.15 L612.84,204.88 L612.40,205.62 L611.96,206.35 L611.52,207.08 L611.09,207.82 L610.67,208.55 L610.24,209.29 L609.82,210.03 L609.41,210.76 L609.00,211.50" fill="none" stroke="#424086" stroke-width="1.39" stroke-dasharray="1.39 2.29"/>
<path d="M795.00,82.00 L793.58,82.81 L792.16,83.62 L790.74,84.44 L789.32,85.25 L787.91,86.06 L786.49,86.88 L785.08,87.69 L783.67,88.50 L782.27,89.32 L780.86,90.13 L779.46,90.94 L778.06,91.76 L776.66,92.57 L775.26,93.39 L773.87,94.20 L772.47,95.02 L771.08,95.83 L769.70,96.64 L768.31,97.46 L766.93,98.27 L765.55,99.09 L764.17,99.90 L762.80,100.72 L761.42,101.53 L760.05,102.35 L758.68,103.16 L757.32,103.98 L755.96,104.79 L754.60,105.61 L753.24,106.42 L751.89,107.24 L750.53,108.05 L749.19,108.87 L747.84,109.69 L746.50,110.50 L745.16,111.32 L743.82,112.13 L742.48,112.95 L741.15,113.76 L739.82,114.58 L738.50,115.40 L737.18,116.21 L735.86,117.03 L734.54,117.84 L733.23,118.66 L731.92,119.48 L730.61,120.29 L729.31,121.11 L728.01,121.93 L726.71,122.74 L725.42,123.56 L724.13,124.37 L722.84,125.19 L721.55,126.01 L720.27,126.82 L719.00,127.64 L717.72,128.46 L716.45,129.27 L715.19,130.09 L713.92,130.91 L712.67,131.72 L711.41,132.54 L710.16,133.36 L708.91,134.17 L707.66,134.99 L706.42,135.81 L705.18,136.62 L703.95,137.44 L702.72,138.26 L701.49,139.07 L700.27,139.89 L699.05,140.71 L697.84,141.52 L696.63,142.34 L695.42,143.16 L694.22,143.97 L693.02,144.79 L691.82,145.61 L690.63,146.42 L689.44,147.24 L688.26,148.06 L687.08,148.88 L685.91,149.69 L684.74,150.51 L683.57,151.33 L682.41,152.14 L681.25,152.96 L680.09,153.78 L678.94,154.60 L677.80,155.41 L676.66,156.23 L675.52,157.05 L674.39,157.86 L673.26,158.68 L672.13,159.50 L671.01,160.32 L669.90,161.13 L668.79,161.95 L667.68,162.77 L666.58,163.58 L665.48,164.40 L664.39,165.22 L663.30,166.04 L662.22,166.85 L661.14,167.67 L660.06,168.49 L658.99,169.31 L657.93,170.12 L656.87,170.94 L655.81,171.76 L654.76,172.58 L653.71,173.39 L652.67,174.21 L651.63,175.03 L650.60,175.84 L649.57,176.66 L648.55,177.48 L647.53,178.30 L646.52,179.11 L645.51,179.93 L644.51,180.75 L643.51,181.57 L642.51,182.38 L641.53,183.20 L640.54,184.02 L639.56,184.84 L638.59,185.65 L637.62,186.47 L636.66,187.29 L635.70,188.11 L634.75,188.92 L633.80,189.74 L632.86,190.56 L631.92,191.38 L630.99,192.19 L630.06,193.01 L629.14,193.83 L628.22,194.65 L627.31,195.46 L626.40,196.28 L625.50,197.10 L624.60,197.92 L623.71,198.74 L622.83,199.55 L621.95,200.37 L621.07,201.19 L620.20,202.01 L619.34,202.82 L618.48,203.64 L617.63,204.46 L616.78,205.28 L615.94,206.09 L615.10,206.91 L614.27,207.73 L613.44,208.55 L612.62,209.36 L611.81,210.18 L611.00,211.00" fill="none" stroke="#424086" stroke-width="1.39" stroke-dasharray="1.39 2.29"/>
<path d="M1084.00,220.40 L1083.46,219.59 L1082.92,218.78 L1082.37,217.96 L1081.82,217.15 L1081.26,216.34 L1080.71,215.53 L1080.15,214.72 L1079.58,213.90 L1079.01,213.09 L1078.44,212.28 L1077.87,211.47 L1077.29,210.66 L1076.71,209.84 L1076.13,209.03 L1075.54,208.22 L1074.95,207.41 L1074.36,206.60 L1073.76,205.79 L1073.16,204.97 L1072.56,204.16 L1071.95,203.35 L1071.34,202.54 L1070.73,201.73 L1070.11,200.92 L1069.49,200.10 L1068.87,199.29 L1068.24,198.48 L1067.61,197.67 L1066.98,196.86 L1066.35,196.05 L1065.71,195.24 L1065.07,194.42 L1064.42,193.61 L1063.78,192.80 L1063.12,191.99 L1062.47,191.18 L1061.82,190.37 L1061.16,189.56 L1060.49,188.75 L1059.83,187.93 L1059.16,187.12 L1058.49,186.31 L1057.81,185.50 L1057.14,184.69 L1056.46,183.88 L1055.77,183.07 L1055.09,182.26 L1054.40,181.45 L1053.71,180.64 L1053.01,179.82 L1052.32,179.01 L1051.62,178.20 L1050.91,177.39 L1050.21,176.58 L1049.50,175.77 L1048.79,174.96 L1048.08,174.15 L1047.36,173.34 L1046.64,172.53 L1045.92,171.72 L1045.19,170.91 L1044.47,170.10 L1043.74,169.29 L1043.00,168.48 L1042.27,167.67 L1041.53,166.86 L1040.79,166.05 L1040.05,165.24 L1039.30,164.43 L1038.55,163.62 L1037.80,162.81 L1037.05,162.00 L1036.30,161.19 L1035.54,160.38 L1034.78,159.57 L1034.01,158.76 L1033.25,157.95 L1032.48,157.14 L1031.71,156.33 L1030.94,155.52 L1030.16,154.71 L1029.38,153.90 L1028.61,153.09 L1027.82,152.28 L1027.04,151.47 L1026.25,150.66 L1025.46,149.85 L1024.67,149.04 L1023.88,148.24 L1023.08,147.43 L1022.29,146.62 L1021.49,145.81 L1020.68,145.00 L1019.88,144.19 L1019.07,143.38 L1018.26,142.58 L1017.45,141.77 L1016.64,140.96 L1015.82,140.15 L1015.01,139.34 L1014.19,138.53 L1013.37,137.73 L1012.54,136.92 L1011.72,136.11 L1010.89,135.30 L1010.06,134.50 L1009.23,133.69 L1008.40,132.88 L1007.57,132.07 L1006.73,131.27 L1005.89,130.46 L1005.05,129.65 L1004.21,128.85 L1003.36,128.04 L1002.52,127.23 L1001.67,126.43 L1000.82,125.62 L999.97,124.82 L999.12,124.01 L998.26,123.20 L997.41,122.40 L996.55,121.59 L995.69,120.79 L994.83,119.98 L993.97,119.18 L993.10,118.37 L992.24,117.57 L991.37,116.76 L990.50,115.96 L989.63,115.16 L988.76,114.35 L987.89,113.55 L987.02,112.74 L986.14,111.94 L985.26,111.14 L984.38,110.33 L983.50,109.53 L982.62,108.73 L981.74,107.93 L980.86,107.13 L979.97,106.32 L979.09,105.52 L978.20,104.72 L977.31,103.92 L976.42,103.12 L975.53,102.32 L974.64,101.52 L973.75,100.72 L972.85,99.92 L971.96,99.12 L971.06,98.32 L970.17,97.52 L969.27,96.73 L968.37,95.93 L967.47,95.13 L966.57,94.33 L965.67,93.54 L964.77,92.74 L963.87,91.95 L962.96,91.15 L962.06,90.36 L961.16,89.56 L960.25,88.77 L959.35,87.98 L958.44,87.18 L957.53,86.39 L956.63,85.60 L955.72,84.81 L954.81,84.02 L953.90,83.23 L953.00,82.44 L952.09,81.65 L951.18,80.87 L950.27,80.08 L949.36,79.30 L948.45,78.51 L947.54,77.73 L946.63,76.94 L945.73,76.16 L944.82,75.38 L943.91,74.60 L943.00,73.83 L942.09,73.05 L941.18,72.27 L940.28,71.50 L939.37,70.73 L938.47,69.95 L937.56,69.19 L936.66,68.42 L935.75,67.65 L934.85,66.89 L933.95,66.13 L933.05,65.37 L932.15,64.61 L931.25,63.85 L930.36,63.10 L929.46,62.35 L928.57,61.60 L927.68,60.86 L926.79,60.12 L925.90,59.38 L925.02,58.65 L924.14,57.92 L923.26,57.19 L922.38,56.47 L921.51,55.75 L920.64,55.04 L919.77,54.34 L918.91,53.64 L918.05,52.95 L917.20,52.26 L916.35,51.59 L915.50,50.92 L914.66,50.26 L913.83,49.61 L913.00,48.97 L912.17,48.34 L911.35,47.73 L910.54,47.13 L909.74,46.54 L908.94,45.97 L908.14,45.42 L907.36,44.89 L906.58,44.39 L905.80,43.90 L905.04,43.44 L904.27,43.01 L903.52,42.61 L902.76,42.24 L902.01,41.90 L901.25,41.60 L900.50,41.34 L899.74,41.13 L898.97,40.95 L898.20,40.82 L897.41,40.74 L896.61,40.70 L895.79,40.71 L894.95,40.77 L894.09,40.87 L893.20,41.02 L892.29,41.21 L891.35,41.45 L890.38,41.72 L889.38,42.04 L888.35,42.39 L887.29,42.77 L886.20,43.19 L885.09,43.63 L883.95,44.10 L882.78,44.60 L881.60,45.12 L880.38,45.66 L879.15,46.21 L877.90,46.79 L876.63,47.38 L875.34,47.99 L874.03,48.61 L872.71,49.24 L871.38,49.88 L870.03,50.53 L868.67,51.20 L867.29,51.87 L865.91,52.55 L864.52,53.24 L863.12,53.93 L861.71,54.64 L860.29,55.34 L858.86,56.06 L857.43,56.77 L855.99,57.50 L854.54,58.22 L853.09,58.96 L851.64,59.69 L850.18,60.43 L848.71,61.17 L847.24,61.92 L845.77,62.67 L844.30,63.42 L842.82,64.17 L841.33,64.93 L839.85,65.69 L838.36,66.45 L836.87,67.21 L835.38,67.98 L833.89,68.74 L832.40,69.51 L830.90,70.28 L829.40,71.05 L827.90,71.83 L826.40,72.60 L824.90,73.38 L823.40,74.15 L821.90,74.93 L820.40,75.71 L818.90,76.49 L817.39,77.28 L815.89,78.06 L814.39,78.84 L812.89,79.63 L811.38,80.41 L809.88,81.20 L808.38,81.99 L806.88,82.77 L805.37,83.56 L803.87,84.35 L802.37,85.14 L800.87,85.93 L799.38,86.73 L797.88,87.52 L796.38,88.31 L794.88,89.10 L793.39,89.90 L791.90,90.69 L790.40,91.49 L788.91,92.28 L787.42,93.08 L785.93,93.87 L784.45,94.67 L782.96,95.47 L781.48,96.26 L779.99,97.06 L778.51,97.86 L777.03,98.66 L775.55,99.46 L774.08,100.26 L772.60,101.06 L771.13,101.86 L769.66,102.66 L768.19,103.46 L766.73,104.26 L765.26,105.06 L763.80,105.86 L762.34,106.66 L760.88,107.46 L759.42,108.27 L757.97,109.07 L756.52,109.87 L755.07,110.67 L753.62,111.48 L752.18,112.28 L750.74,113.08 L749.30,113.89 L747.86,114.69 L746.42,115.50 L744.99,116.30 L743.56,117.10 L742.14,117.91 L740.71,118.71 L739.29,119.52 L737.87,120.32 L736.46,121.13 L735.04,121.93 L733.63,122.74 L732.23,123.54 L730.82,124.35 L729.42,125.16 L728.02,125.96 L726.63,126.77 L725.24,127.58 L723.85,128.38 L722.46,129.19 L721.08,130.00 L719.70,130.80 L718.32,131.61 L716.95,132.42 L715.58,133.22 L714.21,134.03 L712.85,134.84 L711.49,135.65 L710.13,136.45 L708.78,137.26 L707.43,138.07 L706.09,138.88 L704.74,139.68 L703.40,140.49 L702.07,141.30 L700.74,142.11 L699.41,142.92 L698.09,143.73 L696.76,144.53 L695.45,145.34 L694.13,146.15 L692.82,146.96 L691.52,147.77 L690.22,148.58 L688.92,149.39 L687.63,150.20 L686.34,151.00 L685.05,151.81 L683.77,152.62 L682.49,153.43 L681.22,154.24 L679.95,155.05 L678.68,155.86 L677.42,156.67 L676.16,157.48 L674.91,158.29 L673.66,159.10 L672.41,159.91 L671.17,160.72 L669.93,161.53 L668.70,162.34 L667.47,163.15 L666.25,163.96 L665.03,164.77 L663.82,165.58 L662.60,166.39 L661.40,167.20 L660.20,168.01 L659.00,168.82 L657.81,169.63 L656.62,170.44 L655.44,171.25 L654.26,172.06 L653.08,172.87 L651.91,173.68 L650.75,174.49 L649.59,175.30 L648.43,176.11 L647.28,176.92 L646.13,177.73 L644.99,178.55 L643.86,179.36 L642.72,180.17 L641.60,180.98 L640.48,181.79 L639.36,182.60 L638.25,183.41 L637.14,184.22 L636.04,185.03 L634.94,185.84 L633.85,186.65 L632.76,187.47 L631.68,188.28 L630.60,189.09 L629.53,189.90 L628.46,190.71 L627.40,191.52 L626.34,192.33 L625.29,193.14 L624.24,193.96 L623.20,194.77 L622.16,195.58 L621.13,196.39 L620.11,197.20 L619.09,198.01 L618.07,198.82 L617.06,199.64 L616.06,200.45 L615.06,201.26 L614.07,202.07 L613.08,202.88 L612.10,203.69 L611.12,204.51 L610.15,205.32 L609.18,206.13 L608.22,206.94 L607.27,207.75 L606.32,208.56 L605.37,209.38 L604.43,210.19 L603.50,211.00" fill="none" stroke="#424086" stroke-width="1.39" stroke-dasharray="1.39 2.29"/>
<path d="M812.70,68.30 L814.07,68.57 L815.27,68.93 L816.29,69.37 L817.15,69.90 L817.85,70.50 L818.42,71.19 L818.85,71.94 L819.16,72.77 L819.35,73.66 L819.44,74.61 L819.44,75.62 L819.34,76.68 L819.17,77.80 L818.92,78.97 L818.61,80.17 L818.24,81.43 L817.81,82.72 L817.33,84.04 L816.81,85.41 L816.25,86.80 L815.66,88.22 L815.03,89.67 L814.37,91.15 L813.69,92.65 L812.99,94.17 L812.26,95.71 L811.52,97.28 L810.76,98.86 L809.98,100.46 L809.20,102.07 L808.40,103.70 L807.60,105.34 L806.79,107.00 L805.97,108.67 L805.14,110.35 L804.32,112.04 L803.49,113.74 L802.65,115.45 L801.82,117.18 L800.99,118.90 L800.15,120.64 L799.32,122.39 L798.49,124.14 L797.66,125.90 L796.84,127.67 L796.02,129.44 L795.20,131.22 L794.39,133.00 L793.58,134.79 L792.78,136.58 L791.98,138.38 L791.20,140.18 L790.41,141.99 L789.64,143.80 L788.87,145.62 L788.11,147.44 L787.35,149.26 L786.61,151.09 L785.87,152.92 L785.15,154.75 L784.43,156.59 L783.72,158.43 L783.02,160.27 L782.33,162.11 L781.65,163.96 L780.98,165.81 L780.32,167.66 L779.67,169.52 L779.03,171.37 L778.40,173.23 L777.78,175.09 L777.17,176.95 L776.58,178.82 L776.00,180.68 L775.42,182.55 L774.86,184.42 L774.31,186.29 L773.78,188.16 L773.25,190.03 L772.74,191.91 L772.24,193.79 L771.75,195.66 L771.28,197.54 L770.81,199.42 L770.36,201.30 L769.92,203.19 L769.50,205.07 L769.09,206.95 L768.69,208.84 L768.30,210.73 L767.93,212.61 L767.57,214.50 L767.23,216.39 L766.89,218.28 L766.57,220.17 L766.27,222.06 L765.98,223.96 L765.70,225.85 L765.43,227.74 L765.18,229.64 L764.95,231.53 L764.72,233.43 L764.52,235.32 L764.32,237.22 L764.14,239.12 L763.97,241.02 L763.82,242.92 L763.68,244.82 L763.56,246.72 L763.44,248.62 L763.35,250.52 L763.27,252.42 L763.20,254.32 L763.14,256.22 L763.11,258.12 L763.08,260.03 L763.07,261.93 L763.07,263.83 L763.09,265.74 L763.12,267.64 L763.17,269.54 L763.23,271.45 L763.31,273.35 L763.40,275.26 L763.50,277.17 L763.62,279.07 L763.75,280.98 L763.90,282.88 L764.06,284.79 L764.24,286.70 L764.43,288.60 L764.63,290.51 L764.85,292.42 L765.09,294.32 L765.33,296.23 L765.59,298.14 L765.87,300.05 L766.16,301.95 L766.46,303.86 L766.78,305.77 L767.12,307.68 L767.46,309.59 L767.82,311.49 L768.20,313.40 L768.59,315.31 L768.99,317.22 L769.40,319.13 L769.83,321.04 L770.28,322.94 L770.74,324.85 L771.21,326.76 L771.69,328.67 L772.19,330.58 L772.70,332.48 L773.23,334.39 L773.77,336.30 L774.32,338.21 L774.89,340.12 L775.47,342.02 L776.06,343.93 L776.66,345.84 L777.28,347.75 L777.91,349.65 L778.56,351.56 L779.21,353.47 L779.88,355.37 L780.57,357.28 L781.26,359.19 L781.97,361.09 L782.69,363.00 L783.42,364.90 L784.17,366.81 L784.92,368.71 L785.69,370.62 L786.48,372.52 L787.27,374.43 L788.07,376.33 L788.89,378.23 L789.72,380.14 L790.56,382.04 L791.41,383.94 L792.27,385.84 L793.15,387.75 L794.03,389.65 L794.93,391.55 L795.84,393.45 L796.75,395.35 L797.68,397.25 L798.62,399.15 L799.57,401.04 L800.53,402.94 L801.51,404.84 L802.49,406.73 L803.48,408.63 L804.48,410.53 L805.49,412.42 L806.51,414.31 L807.54,416.21 L808.58,418.10 L809.63,419.99" fill="none" stroke="#7a7a7a" stroke-width="1.2" stroke-dasharray="1.2 2.4"/>
<path d="M476.7,208.2H482.7M479.7,205.2V211.2" stroke="#ff0000" stroke-width="1.5"/>
<path d="M490.0,208.2H496.0M493.0,205.2V211.2" stroke="#ff0000" stroke-width="1.5"/>
<path d="M451.6,217.8H457.6M454.6,214.8V220.8" stroke="#ff0000" stroke-width="1.5"/>
<path d="M574.3,292.3H580.3M577.3,289.3V295.3" stroke="#ff0000" stroke-width="1.5"/>
<path d="M601.0,212.0H607.0M604.0,209.0V215.0" stroke="#ff0000" stroke-width="1.5"/>
<path d="M603.0,211.0H609.0M606.0,208.0V214.0" stroke="#ff0000" stroke-width="1.5"/>
<path d="M605.0,212.5H611.0M608.0,209.5V215.5" stroke="#ff0000" stroke-width="1.5"/>
<path d="M607.0,210.5H613.0M610.0,207.5V213.5" stroke="#ff0000" stroke-width="1.5"/>
<path d="M602.0,213.0H608.0M605.0,210.0V216.0" stroke="#ff0000" stroke-width="1.5"/>
<path d="M604.0,210.0H610.0M607.0,207.0V213.0" stroke="#ff0000" stroke-width="1.5"/>
<path d="M606.0,211.5H612.0M609.0,208.5V214.5" stroke="#ff0000" stroke-width="1.5"/>
<path d="M608.0,211.0H614.0M611.0,208.0V214.0" stroke="#ff0000" stroke-width="1.5"/>
<path d="M600.5,211.0H606.5M603.5,208.0V214.0" stroke="#ff0000" stroke-width="1.5"/>
<ellipse cx="490.8" cy="208.0" rx="49.2" ry="12.2" transform="rotate(-27 490.8 208.0)" fill="none" stroke="#4ec36b" stroke-width="2.08"/>
<ellipse cx="603.2" cy="211.0" rx="40.1" ry="14.5" transform="rotate(-29.4 603.2 211.0)" fill="none" stroke="#424086" stroke-width="2.08"/>
<ellipse cx="575.8" cy="291.5" rx="27.8" ry="21.1" transform="rotate(-41.6 575.8 291.5)" fill="none" stroke="#bddf26" stroke-width="2.08"/>
<path d="M914.80,43.20 L916.32,44.23 L917.85,45.29 L919.41,46.37 L920.98,47.47 L922.56,48.58 L924.15,49.70 L925.76,50.84 L927.37,51.99 L928.99,53.14 L930.62,54.31 L932.25,55.48 L933.89,56.65 L935.53,57.83 L937.18,59.02 L938.83,60.21 L940.48,61.40 L942.13,62.59 L943.79,63.79 L945.44,65.00 L947.10,66.20" fill="none" stroke="#bddf26" stroke-width="2.08"/>
<path d="M911.30,54.90 L913.59,59.88 L915.88,64.87 L918.16,69.86 L920.42,74.86 L922.68,79.86 L924.92,84.86 L927.15,89.87 L929.36,94.87 L931.55,99.88 L933.72,104.89 L935.86,109.90 L937.98,114.91 L940.08,119.92 L942.15,124.93 L944.19,129.94 L946.20,134.95 L948.17,139.96 L950.12,144.98 L952.03,149.99 L953.90,155.00" fill="none" stroke="#4ec36b" stroke-width="2.08"/>
<path d="M944.70,93.10 L945.50,95.08 L946.30,97.06 L947.10,99.05 L947.89,101.04 L948.68,103.02 L949.47,105.01 L950.25,107.01 L951.02,109.00 L951.79,110.99 L952.56,112.99 L953.32,114.99 L954.07,116.99 L954.82,118.98 L955.56,120.98 L956.30,122.98 L957.03,124.99 L957.76,126.99 L958.48,128.99 L959.19,131.00 L959.90,133.00" fill="none" stroke="#4ec36b" stroke-width="2.08"/>
<path d="M1033.75,87.30 L1032.93,87.22 L1032.12,87.15 L1031.32,87.09 L1030.54,87.03 L1029.78,86.98 L1029.03,86.94 L1028.29,86.91 L1027.57,86.88 L1026.86,86.86 L1026.17,86.85 L1025.49,86.84 L1024.82,86.84 L1024.17,86.85 L1023.54,86.86 L1022.91,86.88 L1022.30,86.91 L1021.71,86.95 L1021.12,86.99 L1020.56,87.04 L1020.00,87.10" fill="none" stroke="#4ec36b" stroke-width="2.08"/>
<path d="M1043.30,93.30 L1042.49,93.49 L1041.73,93.71 L1041.00,93.94 L1040.32,94.20 L1039.67,94.47 L1039.06,94.77 L1038.49,95.08 L1037.95,95.42 L1037.45,95.77 L1036.99,96.14 L1036.55,96.53 L1036.15,96.94 L1035.78,97.36 L1035.44,97.80 L1035.13,98.26 L1034.85,98.74 L1034.60,99.23 L1034.37,99.74 L1034.17,100.26 L1034.00,100.80" fill="none" stroke="#4ec36b" stroke-width="2.08"/>
<path d="M911.70,75.90 L913.34,77.01 L914.99,78.16 L916.64,79.34 L918.31,80.56 L919.98,81.81 L921.66,83.08 L923.35,84.39 L925.05,85.72 L926.75,87.07 L928.46,88.44 L930.18,89.83 L931.91,91.25 L933.64,92.68 L935.38,94.12 L937.12,95.58 L938.87,97.06 L940.62,98.55 L942.38,100.06 L944.14,101.57 L945.90,103.10" fill="none" stroke="#424086" stroke-width="2.08"/>
<path d="M913.00,77.00 L914.58,78.08 L916.17,79.20 L917.76,80.35 L919.37,81.52 L920.98,82.73 L922.60,83.95 L924.22,85.21 L925.85,86.48 L927.49,87.78 L929.14,89.09 L930.79,90.43 L932.45,91.78 L934.12,93.15 L935.79,94.53 L937.46,95.93 L939.14,97.34 L940.83,98.76 L942.51,100.20 L944.21,101.64 L945.90,103.10" fill="none" stroke="#424086" stroke-width="2.08"/>
<path d="M915.00,78.50 L917.44,80.28 L919.89,82.13 L922.36,84.03 L924.85,86.00 L927.35,88.01 L929.87,90.07 L932.40,92.17 L934.95,94.31 L937.50,96.48 L940.07,98.68 L942.64,100.91 L945.23,103.16 L947.81,105.44 L950.41,107.74 L953.00,110.06 L955.60,112.40 L958.20,114.75 L960.80,117.12 L963.40,119.50 L966.00,121.90" fill="none" stroke="#424086" stroke-width="2.08"/>
<path d="M922.90,93.10 L923.89,93.89 L924.88,94.69 L925.87,95.49 L926.87,96.30 L927.86,97.12 L928.86,97.95 L929.86,98.78 L930.86,99.62 L931.87,100.46 L932.87,101.31 L933.88,102.17 L934.89,103.03 L935.90,103.90 L936.91,104.77 L937.92,105.65 L938.93,106.53 L939.95,107.41 L940.96,108.30 L941.98,109.20 L943.00,110.10" fill="none" stroke="#424086" stroke-width="2.08"/>
<path d="M921.40,126.20 L921.92,126.62 L922.45,127.05 L922.97,127.48 L923.49,127.91 L924.02,128.34 L924.54,128.77 L925.07,129.21 L925.59,129.64 L926.11,130.08 L926.64,130.52 L927.17,130.96 L927.69,131.40 L928.22,131.85 L928.74,132.29 L929.27,132.74 L929.79,133.19 L930.32,133.64 L930.85,134.09 L931.37,134.55 L931.90,135.00" fill="none" stroke="#424086" stroke-width="2.08"/>
<path d="M1031.70,72.10 L1031.26,72.17 L1030.85,72.24 L1030.46,72.33 L1030.09,72.42 L1029.74,72.52 L1029.42,72.63 L1029.12,72.75 L1028.84,72.88 L1028.58,73.01 L1028.35,73.15 L1028.13,73.30 L1027.94,73.46 L1027.77,73.63 L1027.61,73.80 L1027.48,73.98 L1027.37,74.17 L1027.27,74.37 L1027.20,74.57 L1027.14,74.78 L1027.10,75.00" fill="none" stroke="#424086" stroke-width="2.08"/>
<path d="M1108.90,95.30 L1107.38,95.27 L1105.93,95.27 L1104.57,95.30 L1103.29,95.35 L1102.09,95.44 L1100.97,95.55 L1099.93,95.69 L1098.97,95.86 L1098.08,96.06 L1097.26,96.29 L1096.52,96.54 L1095.85,96.82 L1095.26,97.13 L1094.73,97.46 L1094.26,97.82 L1093.87,98.21 L1093.53,98.62 L1093.26,99.05 L1093.05,99.52 L1092.90,100.00" fill="none" stroke="#424086" stroke-width="2.08"/>
<path d="M795.00,82.00 L796.09,81.40 L797.18,80.80 L798.28,80.20 L799.37,79.60 L800.46,79.00 L801.56,78.40 L802.66,77.80 L803.75,77.20 L804.85,76.60 L805.95,76.00 L807.05,75.40 L808.16,74.80 L809.26,74.20 L810.36,73.60 L811.47,73.00 L812.57,72.40 L813.68,71.80 L814.78,71.20 L815.89,70.60 L817.00,70.00" fill="none" stroke="#424086" stroke-width="2.08"/>
<path d="M1084.00,220.40 L1084.31,220.82 L1084.62,221.24 L1084.92,221.66 L1085.23,222.08 L1085.53,222.50 L1085.84,222.92 L1086.14,223.34 L1086.44,223.76 L1086.75,224.18 L1087.05,224.60 L1087.35,225.02 L1087.64,225.44 L1087.94,225.86 L1088.24,226.28 L1088.53,226.70 L1088.83,227.12 L1089.12,227.54 L1089.42,227.96 L1089.71,228.38 L1090.00,228.80" fill="none" stroke="#424086" stroke-width="2.08"/>
<path d="M965.00,78.90 L965.36,79.36 L965.72,79.83 L966.07,80.30 L966.43,80.76 L966.79,81.23 L967.15,81.70 L967.51,82.17 L967.87,82.63 L968.23,83.10 L968.59,83.57 L968.95,84.04 L969.31,84.52 L969.67,84.99 L970.03,85.46 L970.40,85.93 L970.76,86.40 L971.12,86.88 L971.48,87.35 L971.84,87.83 L972.20,88.30" fill="none" stroke="#888888" stroke-width="2.08"/>
<path d="M1001.10,91.10 L1001.44,91.84 L1001.80,92.59 L1002.16,93.35 L1002.53,94.11 L1002.91,94.88 L1003.30,95.66 L1003.70,96.45 L1004.10,97.24 L1004.52,98.04 L1004.93,98.85 L1005.36,99.66 L1005.79,100.48 L1006.22,101.30 L1006.67,102.13 L1007.11,102.96 L1007.56,103.80 L1008.01,104.64 L1008.47,105.49 L1008.93,106.34 L1009.40,107.20" fill="none" stroke="#888888" stroke-width="2.08"/>
<path d="M785.30,71.00 L787.23,70.63 L789.10,70.29 L790.91,69.97 L792.66,69.67 L794.36,69.40 L796.00,69.15 L797.58,68.92 L799.10,68.72 L800.56,68.54 L801.96,68.39 L803.30,68.26 L804.58,68.16 L805.80,68.09 L806.96,68.04 L808.06,68.02 L809.10,68.02 L810.09,68.05 L811.01,68.11 L811.88,68.19 L812.70,68.30" fill="none" stroke="#888888" stroke-width="2.08"/>
<rect x="945.9" y="65.0" width="2.4" height="2.4" fill="#ff5533"/>
<rect x="952.7" y="153.8" width="2.4" height="2.4" fill="#ff5533"/>
<rect x="958.7" y="131.8" width="2.4" height="2.4" fill="#ff5533"/>
<rect x="1018.8" y="85.9" width="2.4" height="2.4" fill="#ff5533"/>
<rect x="1032.8" y="99.6" width="2.4" height="2.4" fill="#ff5533"/>
<rect x="944.7" y="101.9" width="2.4" height="2.4" fill="#ff5533"/>
<rect x="944.7" y="101.9" width="2.4" height="2.4" fill="#ff5533"/>
<rect x="964.8" y="120.7" width="2.4" height="2.4" fill="#ff5533"/>
<rect x="941.8" y="108.9" width="2.4" height="2.4" fill="#ff5533"/>
<rect x="930.7" y="133.8" width="2.4" height="2.4" fill="#ff5533"/>
<rect x="1025.9" y="73.8" width="2.4" height="2.4" fill="#ff5533"/>
<rect x="1091.7" y="98.8" width="2.4" height="2.4" fill="#ff5533"/>
<rect x="815.8" y="68.8" width="2.4" height="2.4" fill="#ff5533"/>
<rect x="1088.8" y="227.6" width="2.4" height="2.4" fill="#ff5533"/>
<g font-family="Liberation Sans, sans-serif" font-size="10.6" fill="#fff" text-anchor="middle">
<text x="488.4" y="212.0" textLength="22.5" lengthAdjust="spacingAndGlyphs">COM</text>
<text x="601.9" y="214.1" textLength="22.5" lengthAdjust="spacingAndGlyphs">GEM</text>
<text x="575.0" y="295.0" textLength="24.0" lengthAdjust="spacingAndGlyphs">MON</text>
</g>
<g font-family="Liberation Mono, monospace" font-size="13.9" fill="#fff">
<text x="316" y="30.0" textLength="50.2" lengthAdjust="spacingAndGlyphs" xml:space="preserve">UK006V</text>
<text x="316" y="42.7" textLength="318.0" lengthAdjust="spacingAndGlyphs" xml:space="preserve">Beg: 20251211 18:35:20 (sol = 259.61°)</text>
<text x="316" y="56.9" textLength="318.0" lengthAdjust="spacingAndGlyphs" xml:space="preserve">End: 20251211 23:28:20 (sol = 259.82°)</text>
<text x="316" y="69.3" textLength="318.0" lengthAdjust="spacingAndGlyphs" xml:space="preserve">--------------------------------------</text>
<text x="316" y="82.0" textLength="50.2" lengthAdjust="spacingAndGlyphs" xml:space="preserve">GEM: 9</text>
<text x="316" y="94.9" textLength="50.2" lengthAdjust="spacingAndGlyphs" xml:space="preserve">COM: 4</text>
<text x="316" y="108.4" textLength="50.2" lengthAdjust="spacingAndGlyphs" xml:space="preserve">...: 3</text>
<text x="316" y="122.0" textLength="50.2" lengthAdjust="spacingAndGlyphs" xml:space="preserve">MON: 1</text>
</g>
<g stroke="#5c5c5c" stroke-width="2.08" stroke-dasharray="2.08 3.44">
<line x1="75.0" y1="842.3" x2="75.0" y2="641.4"/>
<line x1="218.9" y1="842.3" x2="218.9" y2="641.4"/>
<line x1="365.0" y1="842.3" x2="365.0" y2="641.4"/>
<line x1="506.1" y1="842.3" x2="506.1" y2="641.4"/>
<line x1="651.1" y1="842.3" x2="651.1" y2="641.4"/>
<line x1="796.7" y1="842.3" x2="796.7" y2="641.4"/>
<line x1="940.0" y1="842.3" x2="940.0" y2="641.4"/>
<line x1="1090.8" y1="842.3" x2="1090.8" y2="641.4"/>
<line x1="1238.9" y1="842.3" x2="1238.9" y2="641.4"/>
<line x1="1394.2" y1="842.3" x2="1394.2" y2="641.4"/>
<line x1="1548.0" y1="842.3" x2="1548.0" y2="641.4"/>
<line x1="1687.0" y1="842.3" x2="1687.0" y2="641.4"/>
</g>
<defs><clipPath id="axclip"><rect x="20.4" y="641.4" width="1765.1999999999998" height="200.89999999999998"/></clipPath></defs>
<g clip-path="url(#axclip)" font-family="Liberation Sans, sans-serif" font-size="29.5" fill="#585858">
<text transform="translate(149.2,697.6) rotate(-90)" textLength="54.6" lengthAdjust="spacingAndGlyphs">APR</text>
<text transform="translate(295.6,700.3) rotate(-90)" textLength="55.9" lengthAdjust="spacingAndGlyphs">MAY</text>
<text transform="translate(436.7,691.2) rotate(-90)" textLength="48.4" lengthAdjust="spacingAndGlyphs">JUN</text>
<text transform="translate(577.0,686.4) rotate(-90)" textLength="46.4" lengthAdjust="spacingAndGlyphs">JUL</text>
<text transform="translate(724.2,700.3) rotate(-90)" textLength="57.0" lengthAdjust="spacingAndGlyphs">AUG</text>
<text transform="translate(872.0,694.0) rotate(-90)" textLength="50.7" lengthAdjust="spacingAndGlyphs">SEP</text>
<text transform="translate(1017.8,700.3) rotate(-90)" textLength="57.5" lengthAdjust="spacingAndGlyphs">OCT</text>
<text transform="translate(1170.6,703.7) rotate(-90)" textLength="59.0" lengthAdjust="spacingAndGlyphs">NOV</text>
<text transform="translate(1319.2,696.7) rotate(-90)" textLength="52.0" lengthAdjust="spacingAndGlyphs">DEC</text>
<text transform="translate(1469.7,685.6) rotate(-90)" textLength="43.6" lengthAdjust="spacingAndGlyphs">JAN</text>
<text transform="translate(1628.5,695.4) rotate(-90)" textLength="49.4" lengthAdjust="spacingAndGlyphs">FEB</text>
<text transform="translate(1766.4,704.2) rotate(-90)" textLength="59.7" lengthAdjust="spacingAndGlyphs">MAR</text>
</g>
<line x1="1294.0" y1="842.3" x2="1294.0" y2="641.4" stroke="#ff0000" stroke-width="2.2" stroke-dasharray="5.2 2.1" stroke-dashoffset="0.5"/>
<g fill="#bddf26">
<rect x="106.0" y="832.0" width="24.0" height="4"/>
<rect x="165.1" y="832.0" width="179.8" height="4"/>
<rect x="366.0" y="832.0" width="259.0" height="4"/>
<rect x="636.0" y="832.0" width="150.8" height="4"/>
<rect x="807.0" y="832.0" width="93.0" height="4"/>
<rect x="920.0" y="832.0" width="53.0" height="4"/>
<rect x="984.2" y="832.0" width="81.8" height="4"/>
<rect x="1082.0" y="832.0" width="122.0" height="4"/>
<rect x="1244.0" y="832.0" width="82.0" height="4"/>
<rect x="1337.0" y="832.0" width="19.0" height="4"/>
<rect x="1381.0" y="832.0" width="63.0" height="4"/>
<rect x="1459.0" y="832.0" width="53.0" height="4"/>
<rect x="1523.0" y="832.0" width="24.0" height="4"/>
<rect x="1724.1" y="832.0" width="23.7" height="4"/>
<rect x="1758.0" y="832.0" width="23.7" height="4"/>
</g>
<g fill="#81d34d">
<rect x="165.1" y="816.0" width="23.9" height="4"/>
<rect x="224.2" y="816.0" width="62.8" height="4"/>
<rect x="312.0" y="816.0" width="28.8" height="4"/>
<rect x="366.0" y="816.0" width="126.8" height="4"/>
<rect x="508.0" y="816.0" width="145.9" height="4"/>
<rect x="704.1" y="816.0" width="33.8" height="4"/>
<rect x="773.1" y="816.0" width="72.8" height="4"/>
<rect x="871.0" y="816.0" width="117.0" height="4"/>
<rect x="1003.0" y="816.0" width="14.0" height="4"/>
<rect x="1062.0" y="816.0" width="150.9" height="4"/>
<rect x="1244.0" y="816.0" width="23.0" height="4"/>
<rect x="1293.0" y="816.0" width="22.8" height="4"/>
<rect x="1342.0" y="816.0" width="23.0" height="4"/>
<rect x="1386.0" y="816.0" width="43.0" height="4"/>
<rect x="1459.0" y="816.0" width="24.0" height="4"/>
<rect x="1548.0" y="816.0" width="23.0" height="4"/>
</g>
<g fill="#4ec36b">
<rect x="165.1" y="800.0" width="23.9" height="4"/>
<rect x="258.2" y="800.0" width="229.8" height="4"/>
<rect x="508.0" y="800.0" width="107.0" height="4"/>
<rect x="626.0" y="800.0" width="91.9" height="4"/>
<rect x="729.1" y="800.0" width="96.8" height="4"/>
<rect x="949.2" y="800.0" width="200.8" height="4"/>
<rect x="1160.0" y="800.0" width="87.9" height="4"/>
<rect x="1258.0" y="800.0" width="186.0" height="4"/>
<rect x="1459.0" y="800.0" width="24.0" height="4"/>
<rect x="1553.0" y="800.0" width="23.0" height="4"/>
</g>
<g fill="#2ab07f">
<rect x="194.0" y="783.0" width="24.1" height="4"/>
<rect x="322.0" y="783.0" width="184.7" height="4"/>
<rect x="518.0" y="783.0" width="24.0" height="4"/>
<rect x="557.2" y="783.0" width="126.8" height="4"/>
<rect x="807.0" y="783.0" width="23.9" height="4"/>
<rect x="954.0" y="783.0" width="19.0" height="4"/>
<rect x="989.0" y="783.0" width="136.0" height="4"/>
<rect x="1155.0" y="783.0" width="63.0" height="4"/>
<rect x="1244.0" y="783.0" width="23.0" height="4"/>
<rect x="1317.1" y="783.0" width="23.9" height="4"/>
<rect x="1396.0" y="783.0" width="23.0" height="4"/>
<rect x="1464.0" y="783.0" width="185.8" height="4"/>
</g>
<g fill="#1e9b8a">
<rect x="341.0" y="767.0" width="29.0" height="4"/>
<rect x="410.0" y="767.0" width="37.8" height="4"/>
<rect x="469.2" y="767.0" width="23.6" height="4"/>
<rect x="528.0" y="767.0" width="17.8" height="4"/>
<rect x="562.0" y="767.0" width="28.8" height="4"/>
<rect x="616.0" y="767.0" width="33.0" height="4"/>
<rect x="959.0" y="767.0" width="29.0" height="4"/>
<rect x="1062.0" y="767.0" width="24.0" height="4"/>
<rect x="1101.0" y="767.0" width="24.0" height="4"/>
<rect x="1160.0" y="767.0" width="33.9" height="4"/>
<rect x="1249.1" y="767.0" width="22.7" height="4"/>
<rect x="1425.0" y="767.0" width="87.0" height="4"/>
</g>
<g fill="#25858e">
<rect x="420.0" y="750.0" width="24.0" height="4"/>
<rect x="533.0" y="750.0" width="22.8" height="4"/>
<rect x="567.0" y="750.0" width="23.8" height="4"/>
<rect x="621.0" y="750.0" width="121.8" height="4"/>
<rect x="969.0" y="750.0" width="166.0" height="4"/>
<rect x="1185.1" y="750.0" width="160.8" height="4"/>
<rect x="1469.0" y="750.0" width="24.0" height="4"/>
</g>
<g fill="#2d708e">
<rect x="430.0" y="734.0" width="23.0" height="4"/>
<rect x="577.0" y="734.0" width="155.9" height="4"/>
<rect x="994.0" y="734.0" width="111.0" height="4"/>
<rect x="1116.1" y="734.0" width="106.9" height="4"/>
<rect x="1263.1" y="734.0" width="28.8" height="4"/>
<rect x="1489.0" y="734.0" width="23.0" height="4"/>
</g>
<g fill="#375a8c">
<rect x="592.0" y="718.0" width="23.0" height="4"/>
<rect x="655.2" y="718.0" width="116.8" height="4"/>
<rect x="1072.0" y="718.0" width="171.0" height="4"/>
<rect x="1263.1" y="718.0" width="23.7" height="4"/>
</g>
<g fill="#424086">
<rect x="596.1" y="701.0" width="136.8" height="4"/>
<rect x="1092.0" y="701.0" width="28.0" height="4"/>
<rect x="1199.9" y="701.0" width="23.1" height="4"/>
<rect x="1273.0" y="701.0" width="53.1" height="4"/>
</g>
<g fill="#482475">
<rect x="1111.0" y="685.0" width="24.0" height="4"/>
</g>
<g font-family="Liberation Sans, sans-serif" font-size="10.6" fill="#fff" text-anchor="middle">
<text x="116.8" y="831.7" textLength="19.2" lengthAdjust="spacingAndGlyphs">KSE</text>
<text x="254.8" y="831.7" textLength="19.3" lengthAdjust="spacingAndGlyphs">ETA</text>
<text x="495.1" y="831.7" textLength="21.4" lengthAdjust="spacingAndGlyphs">NZC</text>
<text x="710.3" y="831.7" textLength="22.1" lengthAdjust="spacingAndGlyphs">NDA</text>
<text x="853.0" y="831.7" textLength="18.7" lengthAdjust="spacingAndGlyphs">SPE</text>
<text x="945.7" y="831.7" textLength="21.6" lengthAdjust="spacingAndGlyphs">ARD</text>
<text x="1024.4" y="831.7" textLength="20.4" lengthAdjust="spacingAndGlyphs">EGE</text>
<text x="1142.3" y="831.7" textLength="20.5" lengthAdjust="spacingAndGlyphs">NTA</text>
<text x="1284.3" y="831.7" textLength="24.2" lengthAdjust="spacingAndGlyphs">MON</text>
<text x="1342.4" y="831.7" textLength="20.7" lengthAdjust="spacingAndGlyphs">URS</text>
<text x="1411.6" y="831.7" textLength="20.5" lengthAdjust="spacingAndGlyphs">AHY</text>
<text x="1484.9" y="831.7" textLength="23.9" lengthAdjust="spacingAndGlyphs">GUM</text>
<text x="1534.7" y="831.7" textLength="21.6" lengthAdjust="spacingAndGlyphs">OHY</text>
<text x="1735.3" y="831.7" textLength="20.8" lengthAdjust="spacingAndGlyphs">XHE</text>
<text x="1768.9" y="831.7" textLength="16.0" lengthAdjust="spacingAndGlyphs">EVI</text>
<text x="176.2" y="815.7" textLength="20.6" lengthAdjust="spacingAndGlyphs">AVB</text>
<text x="255.1" y="815.7" textLength="18.0" lengthAdjust="spacingAndGlyphs">ELY</text>
<text x="322.9" y="815.7" textLength="22.6" lengthAdjust="spacingAndGlyphs">CAM</text>
<text x="431.6" y="815.7" textLength="20.5" lengthAdjust="spacingAndGlyphs">SSG</text>
<text x="577.9" y="815.7" textLength="19.9" lengthAdjust="spacingAndGlyphs">PCA</text>
<text x="719.9" y="815.7" textLength="22.0" lengthAdjust="spacingAndGlyphs">AUD</text>
<text x="808.4" y="815.7" textLength="21.2" lengthAdjust="spacingAndGlyphs">AUR</text>
<text x="930.4" y="815.7" textLength="21.0" lengthAdjust="spacingAndGlyphs">DSX</text>
<text x="1010.3" y="815.7" textLength="22.3" lengthAdjust="spacingAndGlyphs">OCU</text>
<text x="1137.7" y="815.7" textLength="21.2" lengthAdjust="spacingAndGlyphs">OER</text>
<text x="1254.2" y="815.7" textLength="22.1" lengthAdjust="spacingAndGlyphs">DKD</text>
<text x="1303.1" y="815.7" textLength="21.0" lengthAdjust="spacingAndGlyphs">DSV</text>
<text x="1353.1" y="815.7" textLength="18.5" lengthAdjust="spacingAndGlyphs">ALY</text>
<text x="1407.5" y="815.7" textLength="14.7" lengthAdjust="spacingAndGlyphs">JLE</text>
<text x="1471.1" y="815.7" textLength="20.4" lengthAdjust="spacingAndGlyphs">SCC</text>
<text x="1558.8" y="815.7" textLength="18.9" lengthAdjust="spacingAndGlyphs">FEV</text>
<text x="176.4" y="799.7" textLength="18.6" lengthAdjust="spacingAndGlyphs">LYR</text>
<text x="372.1" y="799.7" textLength="18.5" lengthAdjust="spacingAndGlyphs">JMC</text>
<text x="558.0" y="799.7" textLength="15.1" lengthAdjust="spacingAndGlyphs">JPE</text>
<text x="671.0" y="799.7" textLength="20.2" lengthAdjust="spacingAndGlyphs">PAU</text>
<text x="773.8" y="799.7" textLength="17.2" lengthAdjust="spacingAndGlyphs">NIA</text>
<text x="1049.8" y="799.7" textLength="19.3" lengthAdjust="spacingAndGlyphs">STA</text>
<text x="1206.2" y="799.7" textLength="23.4" lengthAdjust="spacingAndGlyphs">NOO</text>
<text x="1352.8" y="799.7" textLength="23.7" lengthAdjust="spacingAndGlyphs">COM</text>
<text x="1470.1" y="799.7" textLength="21.5" lengthAdjust="spacingAndGlyphs">NCC</text>
<text x="1564.2" y="799.7" textLength="19.8" lengthAdjust="spacingAndGlyphs">FED</text>
<text x="205.8" y="782.7" textLength="17.2" lengthAdjust="spacingAndGlyphs">HVI</text>
<text x="411.7" y="782.7" textLength="16.6" lengthAdjust="spacingAndGlyphs">ARI</text>
<text x="529.5" y="782.7" textLength="20.2" lengthAdjust="spacingAndGlyphs">SZC</text>
<text x="617.9" y="782.7" textLength="19.9" lengthAdjust="spacingAndGlyphs">CAP</text>
<text x="817.7" y="782.7" textLength="21.2" lengthAdjust="spacingAndGlyphs">NUE</text>
<text x="960.5" y="782.7" textLength="21.0" lengthAdjust="spacingAndGlyphs">OCT</text>
<text x="1058.5" y="782.7" textLength="17.7" lengthAdjust="spacingAndGlyphs">ORI</text>
<text x="1185.8" y="782.7" textLength="23.5" lengthAdjust="spacingAndGlyphs">AMO</text>
<text x="1254.4" y="782.7" textLength="20.8" lengthAdjust="spacingAndGlyphs">DPC</text>
<text x="1328.6" y="782.7" textLength="16.5" lengthAdjust="spacingAndGlyphs">XVI</text>
<text x="1407.0" y="782.7" textLength="22.2" lengthAdjust="spacingAndGlyphs">QUA</text>
<text x="1559.4" y="782.7" textLength="21.2" lengthAdjust="spacingAndGlyphs">AAN</text>
<text x="352.1" y="766.7" textLength="20.5" lengthAdjust="spacingAndGlyphs">TAH</text>
<text x="430.9" y="766.7" textLength="16.0" lengthAdjust="spacingAndGlyphs">JEA</text>
<text x="480.5" y="766.7" textLength="11.6" lengthAdjust="spacingAndGlyphs">JIP</text>
<text x="538.0" y="766.7" textLength="18.4" lengthAdjust="spacingAndGlyphs">PPS</text>
<text x="578.1" y="766.7" textLength="20.2" lengthAdjust="spacingAndGlyphs">ZCS</text>
<text x="632.2" y="766.7" textLength="22.5" lengthAdjust="spacingAndGlyphs">GDR</text>
<text x="970.7" y="766.7" textLength="21.6" lengthAdjust="spacingAndGlyphs">DRA</text>
<text x="1073.0" y="766.7" textLength="21.6" lengthAdjust="spacingAndGlyphs">LUM</text>
<text x="1112.3" y="766.7" textLength="20.4" lengthAdjust="spacingAndGlyphs">RPU</text>
<text x="1176.2" y="766.7" textLength="20.5" lengthAdjust="spacingAndGlyphs">THA</text>
<text x="1258.8" y="766.7" textLength="19.7" lengthAdjust="spacingAndGlyphs">PSU</text>
<text x="1470.8" y="766.7" textLength="20.8" lengthAdjust="spacingAndGlyphs">XCB</text>
<text x="431.3" y="749.7" textLength="16.8" lengthAdjust="spacingAndGlyphs">JRC</text>
<text x="543.6" y="749.7" textLength="21.4" lengthAdjust="spacingAndGlyphs">CAN</text>
<text x="578.0" y="749.7" textLength="20.1" lengthAdjust="spacingAndGlyphs">FAN</text>
<text x="680.6" y="749.7" textLength="19.3" lengthAdjust="spacingAndGlyphs">PER</text>
<text x="1049.6" y="749.7" textLength="20.0" lengthAdjust="spacingAndGlyphs">CTA</text>
<text x="1264.9" y="749.7" textLength="21.4" lengthAdjust="spacingAndGlyphs">HYD</text>
<text x="1480.8" y="749.7" textLength="23.0" lengthAdjust="spacingAndGlyphs">XUM</text>
<text x="440.6" y="733.7" textLength="21.9" lengthAdjust="spacingAndGlyphs">COR</text>
<text x="657.6" y="733.7" textLength="21.0" lengthAdjust="spacingAndGlyphs">SDA</text>
<text x="1048.7" y="733.7" textLength="17.1" lengthAdjust="spacingAndGlyphs">LMI</text>
<text x="1166.1" y="733.7" textLength="19.8" lengthAdjust="spacingAndGlyphs">LEO</text>
<text x="1274.1" y="733.7" textLength="20.0" lengthAdjust="spacingAndGlyphs">EHY</text>
<text x="1500.0" y="733.7" textLength="20.2" lengthAdjust="spacingAndGlyphs">ECV</text>
<text x="603.2" y="717.7" textLength="16.5" lengthAdjust="spacingAndGlyphs">JXA</text>
<text x="715.9" y="717.7" textLength="21.4" lengthAdjust="spacingAndGlyphs">KCG</text>
<text x="1156.0" y="717.7" textLength="22.1" lengthAdjust="spacingAndGlyphs">AND</text>
<text x="1274.3" y="717.7" textLength="22.4" lengthAdjust="spacingAndGlyphs">DAD</text>
<text x="666.2" y="700.7" textLength="16.1" lengthAdjust="spacingAndGlyphs">ERI</text>
<text x="1107.7" y="700.7" textLength="19.6" lengthAdjust="spacingAndGlyphs">SLD</text>
<text x="1210.6" y="700.7" textLength="21.3" lengthAdjust="spacingAndGlyphs">ORS</text>
<text x="1299.7" y="700.7" textLength="22.9" lengthAdjust="spacingAndGlyphs">GEM</text>
<text x="1122.4" y="684.7" textLength="22.7" lengthAdjust="spacingAndGlyphs">KUM</text>
</g>
<g stroke="#fff" stroke-width="2.0">
<path d="M114.2,834.0H121.8M118.0,830.2V837.8"/>
<path d="M241.2,834.0H248.8M245.0,830.2V837.8"/>
<path d="M510.9,834.0H518.5M514.7,830.2V837.8"/>
<path d="M706.9,834.0H714.5M710.7,830.2V837.8"/>
<path d="M833.8,834.0H841.4M837.6,830.2V837.8"/>
<path d="M962.4,834.0H970.0M966.2,830.2V837.8"/>
<path d="M986.7,834.0H994.3M990.5,830.2V837.8"/>
<path d="M1117.0,834.0H1124.6M1120.8,830.2V837.8"/>
<path d="M1296.0,834.0H1303.6M1299.8,830.2V837.8"/>
<path d="M1342.0,834.0H1349.6M1345.8,830.2V837.8"/>
<path d="M1412.9,834.0H1420.5M1416.7,830.2V837.8"/>
<path d="M1482.0,834.0H1489.6M1485.8,830.2V837.8"/>
<path d="M1531.2,834.0H1538.8M1535.0,830.2V837.8"/>
<path d="M1732.0,834.0H1739.6M1735.8,830.2V837.8"/>
<path d="M1765.9,834.0H1773.5M1769.7,830.2V837.8"/>
<path d="M173.1,818.0H180.7M176.9,814.2V821.8"/>
<path d="M255.9,818.0H263.5M259.7,814.2V821.8"/>
<path d="M323.8,818.0H331.4M327.6,814.2V821.8"/>
<path d="M437.9,818.0H445.5M441.7,814.2V821.8"/>
<path d="M599.0,818.0H606.6M602.8,814.2V821.8"/>
<path d="M716.8,818.0H724.4M720.6,814.2V821.8"/>
<path d="M793.9,818.0H801.5M797.7,814.2V821.8"/>
<path d="M940.0,818.0H947.6M943.8,814.2V821.8"/>
<path d="M1005.9,818.0H1013.5M1009.7,814.2V821.8"/>
<path d="M1152.9,818.0H1160.5M1156.7,814.2V821.8"/>
<path d="M1250.9,818.0H1258.5M1254.7,814.2V821.8"/>
<path d="M1299.9,818.0H1307.5M1303.7,814.2V821.8"/>
<path d="M1350.0,818.0H1357.6M1353.8,814.2V821.8"/>
<path d="M1402.9,818.0H1410.5M1406.7,814.2V821.8"/>
<path d="M1467.0,818.0H1474.6M1470.8,814.2V821.8"/>
<path d="M1555.0,818.0H1562.6M1558.8,814.2V821.8"/>
<path d="M175.1,802.0H182.7M178.9,798.2V805.8"/>
<path d="M378.9,802.0H386.5M382.7,798.2V805.8"/>
<path d="M545.0,802.0H552.6M548.8,798.2V805.8"/>
<path d="M683.1,802.0H690.7M686.9,798.2V805.8"/>
<path d="M742.2,802.0H749.8M746.0,798.2V805.8"/>
<path d="M1075.0,802.0H1082.6M1078.8,798.2V805.8"/>
<path d="M1217.1,802.0H1224.7M1220.9,798.2V805.8"/>
<path d="M1305.0,802.0H1312.6M1308.8,798.2V805.8"/>
<path d="M1467.0,802.0H1474.6M1470.8,798.2V805.8"/>
<path d="M1560.0,802.0H1567.6M1563.8,798.2V805.8"/>
<path d="M202.2,785.0H209.8M206.0,781.2V788.8"/>
<path d="M400.9,785.0H408.5M404.7,781.2V788.8"/>
<path d="M525.9,785.0H533.5M529.7,781.2V788.8"/>
<path d="M639.1,785.0H646.7M642.9,781.2V788.8"/>
<path d="M815.0,785.0H822.6M818.8,781.2V788.8"/>
<path d="M960.0,785.0H967.6M963.8,781.2V788.8"/>
<path d="M1040.9,785.0H1048.5M1044.7,781.2V788.8"/>
<path d="M1188.1,785.0H1195.7M1191.9,781.2V788.8"/>
<path d="M1250.9,785.0H1258.5M1254.7,781.2V788.8"/>
<path d="M1325.1,785.0H1332.7M1328.9,781.2V788.8"/>
<path d="M1403.0,785.0H1410.6M1406.8,781.2V788.8"/>
<path d="M1545.9,785.0H1553.5M1549.7,781.2V788.8"/>
<path d="M355.9,769.0H363.5M359.7,765.2V772.8"/>
<path d="M427.0,769.0H434.6M430.8,765.2V772.8"/>
<path d="M477.0,769.0H484.6M480.8,765.2V772.8"/>
<path d="M535.9,769.0H543.5M539.7,765.2V772.8"/>
<path d="M571.2,769.0H578.8M575.0,765.2V772.8"/>
<path d="M630.8,769.0H638.4M634.6,765.2V772.8"/>
<path d="M974.0,769.0H981.6M977.8,765.2V772.8"/>
<path d="M1070.0,769.0H1077.6M1073.8,765.2V772.8"/>
<path d="M1109.0,769.0H1116.6M1112.8,765.2V772.8"/>
<path d="M1178.2,769.0H1185.8M1182.0,765.2V772.8"/>
<path d="M1256.0,769.0H1263.6M1259.8,765.2V772.8"/>
<path d="M1467.0,769.0H1474.6M1470.8,765.2V772.8"/>
<path d="M427.9,752.0H435.5M431.7,748.2V755.8"/>
<path d="M540.0,752.0H547.6M543.8,748.2V755.8"/>
<path d="M575.0,752.0H582.6M578.8,748.2V755.8"/>
<path d="M704.0,752.0H711.6M707.8,748.2V755.8"/>
<path d="M1095.0,752.0H1102.6M1098.8,748.2V755.8"/>
<path d="M1271.2,752.0H1278.8M1275.0,748.2V755.8"/>
<path d="M1477.0,752.0H1484.6M1480.8,748.2V755.8"/>
<path d="M437.9,736.0H445.5M441.7,732.2V739.8"/>
<path d="M630.8,736.0H638.4M634.6,732.2V739.8"/>
<path d="M1039.0,736.0H1046.6M1042.8,732.2V739.8"/>
<path d="M1168.1,736.0H1175.7M1171.9,732.2V739.8"/>
<path d="M1275.0,736.0H1282.6M1278.8,732.2V739.8"/>
<path d="M1497.0,736.0H1504.6M1500.8,732.2V739.8"/>
<path d="M599.0,720.0H606.6M602.8,716.2V723.8"/>
<path d="M726.9,720.0H734.5M730.7,716.2V723.8"/>
<path d="M1188.1,720.0H1195.7M1191.9,716.2V723.8"/>
<path d="M1271.2,720.0H1278.8M1275.0,716.2V723.8"/>
<path d="M688.1,703.0H695.7M691.9,699.2V706.8"/>
<path d="M1102.0,703.0H1109.6M1105.8,699.2V706.8"/>
<path d="M1207.0,703.0H1214.6M1210.8,699.2V706.8"/>
<path d="M1299.9,703.0H1307.5M1303.7,699.2V706.8"/>
<path d="M1119.1,687.0H1126.7M1122.9,683.2V690.8"/>
</g>
<rect x="20.4" y="641.4" width="1765.1999999999998" height="200.89999999999998" fill="none" stroke="#fff" stroke-width="1.1"/>
<g stroke="#fff" stroke-width="1.1">
<line x1="20.4" y1="842.3" x2="20.4" y2="847.1999999999999"/>
<line x1="265.5" y1="842.3" x2="265.5" y2="847.1999999999999"/>
<line x1="510.6" y1="842.3" x2="510.6" y2="847.1999999999999"/>
<line x1="755.8" y1="842.3" x2="755.8" y2="847.1999999999999"/>
<line x1="1000.9" y1="842.3" x2="1000.9" y2="847.1999999999999"/>
<line x1="1246.0" y1="842.3" x2="1246.0" y2="847.1999999999999"/>
<line x1="1491.2" y1="842.3" x2="1491.2" y2="847.1999999999999"/>
<line x1="1736.3" y1="842.3" x2="1736.3" y2="847.1999999999999"/>
</g>
<g font-family="Liberation Sans, sans-serif" font-size="13.2" fill="#fff" text-anchor="middle">
<text x="20.4" y="861.8" textLength="7.4" lengthAdjust="spacingAndGlyphs">0</text>
<text x="265.5" y="861.8" textLength="15.8" lengthAdjust="spacingAndGlyphs">50</text>
<text x="510.6" y="861.8" textLength="24.2" lengthAdjust="spacingAndGlyphs">100</text>
<text x="755.8" y="861.8" textLength="24.2" lengthAdjust="spacingAndGlyphs">150</text>
<text x="1000.9" y="861.8" textLength="24.2" lengthAdjust="spacingAndGlyphs">200</text>
<text x="1246.0" y="861.8" textLength="24.2" lengthAdjust="spacingAndGlyphs">250</text>
<text x="1491.2" y="861.8" textLength="24.2" lengthAdjust="spacingAndGlyphs">300</text>
<text x="1736.3" y="861.8" textLength="24.2" lengthAdjust="spacingAndGlyphs">350</text>
<text x="902.3" y="882.2" font-size="13.9" textLength="146.5" lengthAdjust="spacingAndGlyphs">Solar longitude (deg)</text>
</g>
</svg></body></html>
